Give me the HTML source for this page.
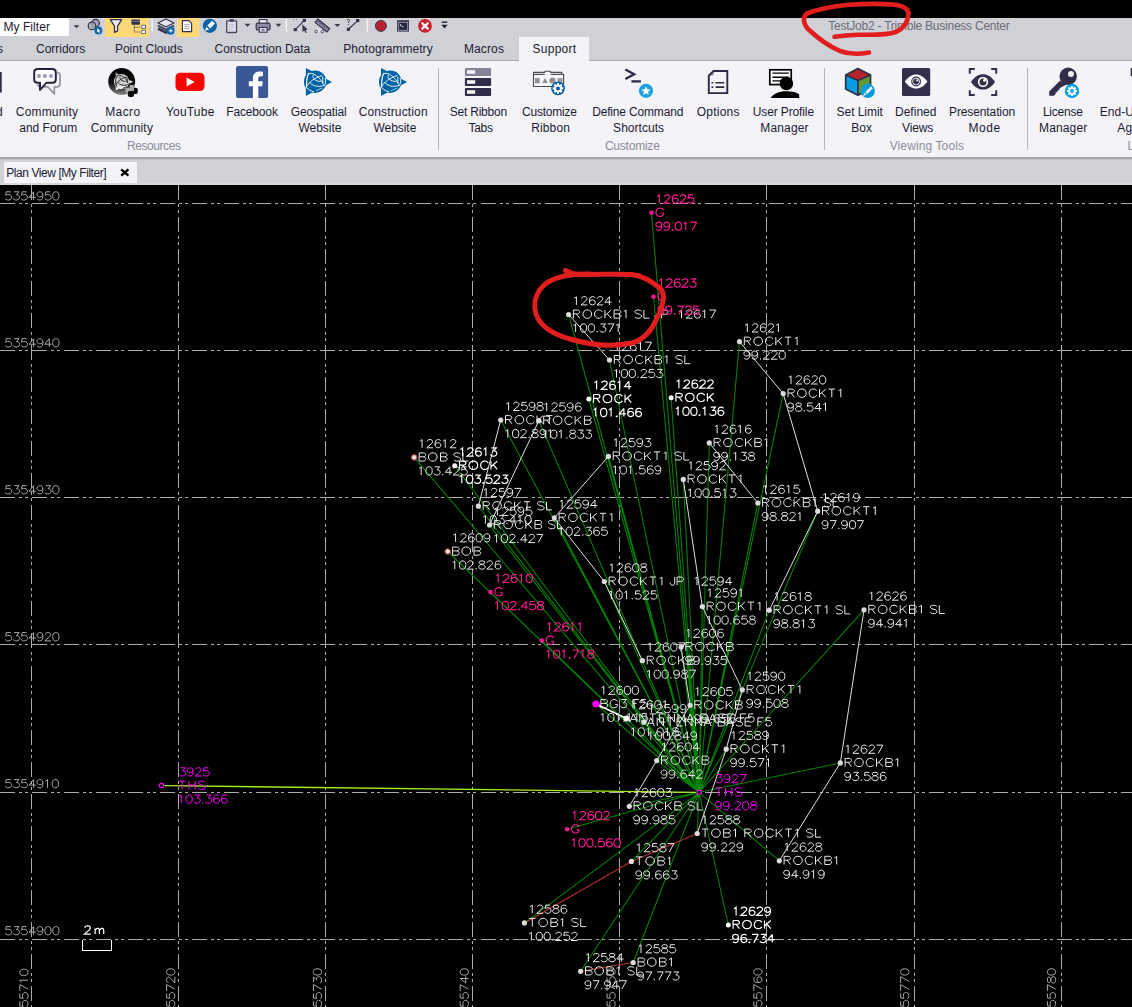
<!DOCTYPE html><html><head><meta charset="utf-8"><title>TestJob2 - Trimble Business Center</title><style>
html,body{margin:0;padding:0;background:#000;}
body{width:1132px;height:1007px;overflow:hidden;position:relative;font-family:"Liberation Sans",sans-serif;font-size:12px;line-height:16px;color:#1c1b33;}
.a{position:absolute;}
span.l,span.g,span.t{position:absolute;white-space:nowrap;line-height:16px;font-size:12px;}
span.l{color:#1c1b33;}
span.g{color:#8d8c9c;}
span.t{color:#6c6c78;}
svg{position:absolute;overflow:visible;}
#cv{left:0;top:185px;overflow:hidden;}
</style></head><body><div class="a" style="left:0;top:18px;width:1132px;height:167px;background:#d0d1d6"></div><div class="a" style="left:0;top:60px;width:1132px;height:1px;background:#a8a8ad"></div><div class="a" style="left:0;top:61px;width:1132px;height:96px;background:#f3f3f8"></div><div class="a" style="left:519px;top:37px;width:70px;height:24px;background:#f3f3f8"></div><div class="a" style="left:0;top:157px;width:1132px;height:1px;background:#a3a3a7"></div><div class="a" style="left:0;top:158px;width:1132px;height:1px;background:#ababaf"></div><div class="a" style="left:0;top:159px;width:1132px;height:1px;background:#c3c3c8"></div><div class="a" style="left:4px;top:162px;width:133px;height:21px;background:#f3f3f8"></div><div class="a" style="left:0;top:183px;width:1132px;height:2px;background:#d6d6db"></div><span class="l" style="left:6.3px;top:164.9px;letter-spacing:-0.44px">Plan View [My Filter]</span><svg style="left:120px;top:168px" width="10" height="9" viewBox="0 0 10 9"><path d="M1.2 1.3L8.4 7.7M8.4 1.3L1.2 7.7" stroke="#000" stroke-width="2.3" fill="none"/></svg><div class="a" style="left:0;top:18px;width:69px;height:18px;background:#fff"></div><span class="l" style="left:3.5px;top:18.6px;letter-spacing:0.05px">My Filter</span><div class="a" style="left:105px;top:18px;width:44px;height:19px;background:#ffd976"></div><div class="a" style="left:177px;top:18px;width:22px;height:19px;background:#ffd976"></div><span class="t" style="left:828.3px;top:17.9px;letter-spacing:-0.24px">TestJob2 - Trimble Business Center</span><span class="l" style="left:-3.0px;top:40.7px;letter-spacing:0.60px">s</span><span class="l" style="left:36.0px;top:40.7px;letter-spacing:-0.01px">Corridors</span><span class="l" style="left:115.0px;top:40.7px;letter-spacing:-0.03px">Point Clouds</span><span class="l" style="left:214.5px;top:40.7px;letter-spacing:-0.02px">Construction Data</span><span class="l" style="left:343.3px;top:40.7px;letter-spacing:0.05px">Photogrammetry</span><span class="l" style="left:463.9px;top:40.7px;letter-spacing:0.13px">Macros</span><span class="l" style="left:532.6px;top:40.7px;letter-spacing:0.25px">Support</span><span class="l" style="left:-4.0px;top:103.9px;letter-spacing:0.60px">d</span><span class="l" style="left:15.8px;top:103.9px;letter-spacing:0.18px">Community</span><span class="l" style="left:19.3px;top:119.9px;letter-spacing:-0.02px">and Forum</span><span class="l" style="left:105.2px;top:103.9px;letter-spacing:0.39px">Macro</span><span class="l" style="left:90.7px;top:119.9px;letter-spacing:0.19px">Community</span><span class="l" style="left:165.9px;top:103.9px;letter-spacing:0.21px">YouTube</span><span class="l" style="left:226.2px;top:103.9px;letter-spacing:-0.14px">Facebook</span><span class="l" style="left:290.8px;top:103.9px;letter-spacing:-0.17px">Geospatial</span><span class="l" style="left:298.5px;top:119.9px;letter-spacing:-0.04px">Website</span><span class="l" style="left:358.7px;top:103.9px;letter-spacing:0.14px">Construction</span><span class="l" style="left:373.5px;top:119.9px;letter-spacing:-0.05px">Website</span><span class="l" style="left:449.7px;top:103.9px;letter-spacing:-0.21px">Set Ribbon</span><span class="l" style="left:468.4px;top:119.9px;letter-spacing:-0.22px">Tabs</span><span class="l" style="left:522.1px;top:103.9px;letter-spacing:-0.24px">Customize</span><span class="l" style="left:531.3px;top:119.9px;letter-spacing:0.10px">Ribbon</span><span class="l" style="left:592.2px;top:103.9px;letter-spacing:-0.17px">Define Command</span><span class="l" style="left:613.1px;top:119.9px;letter-spacing:0.03px">Shortcuts</span><span class="l" style="left:696.8px;top:103.9px;letter-spacing:0.22px">Options</span><span class="l" style="left:752.8px;top:103.9px;letter-spacing:-0.13px">User Profile</span><span class="l" style="left:760.3px;top:119.9px;letter-spacing:0.16px">Manager</span><span class="l" style="left:836.6px;top:103.9px;letter-spacing:-0.05px">Set Limit</span><span class="l" style="left:851.3px;top:119.9px;letter-spacing:-0.04px">Box</span><span class="l" style="left:895.0px;top:103.9px;letter-spacing:0.01px">Defined</span><span class="l" style="left:902.1px;top:119.9px;letter-spacing:-0.17px">Views</span><span class="l" style="left:949.0px;top:103.9px;letter-spacing:-0.11px">Presentation</span><span class="l" style="left:968.5px;top:119.9px;letter-spacing:0.59px">Mode</span><span class="l" style="left:1042.9px;top:103.9px;letter-spacing:-0.23px">License</span><span class="l" style="left:1039.1px;top:119.9px;letter-spacing:0.12px">Manager</span><span class="l" style="left:1099.8px;top:103.9px;letter-spacing:-0.00px">End-User</span><span class="l" style="left:1117.3px;top:119.9px;letter-spacing:0.08px">Agreem</span><span class="g" style="left:127.0px;top:137.8px;letter-spacing:-0.43px">Resources</span><span class="g" style="left:604.9px;top:137.8px;letter-spacing:-0.22px">Customize</span><span class="g" style="left:889.7px;top:137.8px;letter-spacing:0.11px">Viewing Tools</span><span class="g" style="left:1127.5px;top:137.8px;letter-spacing:0.15px">Legal</span><div class="a" style="left:438px;top:68px;width:1px;height:82px;background:#b4b4bc"></div><div class="a" style="left:824px;top:68px;width:1px;height:82px;background:#b4b4bc"></div><div class="a" style="left:1027px;top:68px;width:1px;height:82px;background:#b4b4bc"></div><svg style="left:0;top:0" width="1132" height="185" viewBox="0 0 1132 185">
<defs>
<linearGradient id="mg" x1="0" y1="0" x2="0" y2="1"><stop offset="0" stop-color="#000"/><stop offset="0.55" stop-color="#101010"/><stop offset="0.8" stop-color="#4a4a4a"/><stop offset="1" stop-color="#8a8a8a"/></linearGradient>
</defs>
<!-- ===== quick access toolbar ===== -->
<g fill="#3b3a4c">
<path d="M73.6 25.2H79.4L76.5 28.3Z"/><path d="M244.6 23.8H250.4L247.5 26.9Z"/><path d="M275.6 23.8H281.4L278.5 26.9Z"/><path d="M334.5 23.9H340.3L337.4 27Z"/>
</g>
<!-- overlapping circles -->
<circle cx="95.6" cy="23.2" r="3.8" fill="#a6a4b6" stroke="#35334d" stroke-width="1.2"/>
<circle cx="92" cy="25.9" r="3.8" fill="#a6a4b6" fill-opacity="0.85" stroke="#35334d" stroke-width="1.2"/>
<circle cx="98.4" cy="30.4" r="3.9" fill="#0b66a8"/><path d="M97.2 28.2L97.2 32.4L98.3 31.5L99.2 33L100 32.6L99.2 31.2L100.5 31Z" fill="#fff"/>
<!-- funnel -->
<path d="M110.3 19.6H121.7L117.6 26.2V30.8L114.5 32.4V26.2Z" fill="#ebebf3" stroke="#35334d" stroke-width="1.3" stroke-linejoin="round"/>
<!-- tree -->
<rect x="131.4" y="19.4" width="8.6" height="5.4" rx="0.8" fill="#35334d"/><path d="M131.4 21.4H140" stroke="#8f8ea2" stroke-width="0.7"/>
<path d="M134.3 25.5V32M134.3 27.3H141M134.3 32H141" stroke="#35334d" stroke-width="1.1" stroke-dasharray="1.1 1.1" fill="none"/>
<rect x="141.8" y="25.2" width="3.6" height="3.4" fill="#fff" stroke="#55536b" stroke-width="0.8"/><rect x="141.8" y="30.2" width="3.6" height="3.4" fill="#fff" stroke="#55536b" stroke-width="0.8"/>
<rect x="151.4" y="19" width="1.5" height="12.6" fill="#f2f2f6"/>
<!-- layers -->
<path d="M158 28.6L166 32.6L174 28.6" stroke="#35334d" stroke-width="2.4" fill="none" stroke-linejoin="round"/>
<path d="M158 25.8L166 29.8L174 25.8" stroke="#4c4a64" stroke-width="2.4" fill="none" stroke-linejoin="round"/>
<path d="M158 22.9L166 19L174 22.9L166 26.8Z" fill="#e6e6ef" stroke="#35334d" stroke-width="1.1" stroke-linejoin="round"/>
<circle cx="170.6" cy="30.7" r="3.9" fill="#0b66a8"/><path d="M168.6 30.7H172.8M170.8 28.8V32.6" stroke="#fff" stroke-width="1.1"/>
<!-- document -->
<path d="M182.4 20.7H189L191.6 23.3V31.6H182.4Z" fill="#fff" stroke="#35334d" stroke-width="1.2" stroke-linejoin="round"/><path d="M184.4 24.6H189.6M184.4 26.6H189.6M184.4 28.6H189.6" stroke="#9a99aa" stroke-width="0.9"/>
<!-- blue pen -->
<circle cx="209.9" cy="25.8" r="7.1" fill="#0b62a4"/><path d="M207.4 25.6L212.2 20.8L215 23.6L210.2 28.4Z" fill="#fff"/><path d="M204.9 30.7L206.4 26.7L209.1 29.4Z" fill="#fff"/>
<!-- clipboard -->
<rect x="226.7" y="20.8" width="9.9" height="11.7" rx="0.8" fill="#dedeeb" stroke="#4a4860" stroke-width="1.3"/><rect x="229.6" y="19" width="4.1" height="2.8" rx="0.6" fill="#4a4860"/><path d="M228.8 24.6H234.4M228.8 26.8H234.4M228.8 29H232.5" stroke="#b9b8c9" stroke-width="0.8"/>
<!-- printer -->
<rect x="259.2" y="19.6" width="7.8" height="4.4" fill="#f0f0f6" stroke="#35334d" stroke-width="1.1"/>
<rect x="256.2" y="23.2" width="13.8" height="6.8" rx="1.6" fill="#8f8da3" stroke="#35334d" stroke-width="1.2"/>
<rect x="259.2" y="27.4" width="7.8" height="4.8" fill="#e4e4ee" stroke="#35334d" stroke-width="1.1"/><rect x="261.6" y="28.8" width="3" height="2.2" fill="#7d7b92"/>
<rect x="285.6" y="19" width="1.5" height="12.6" fill="#f2f2f6"/>
<!-- node select -->
<path d="M295.3 29.6L304.3 20.4" stroke="#35334d" stroke-width="1.2"/><rect x="293.7" y="28" width="3.2" height="3.2" fill="#35334d"/><rect x="302.7" y="18.8" width="3.2" height="3.2" fill="#35334d"/>
<path d="M302.4 24.3V32L304.2 30.4L305.5 33L306.7 32.4L305.5 29.9L307.8 29.7Z" fill="#35334d"/><path d="M293.5 19.6H294.5M296 19.6H297" stroke="#6a6880" stroke-width="1"/>
<!-- ruler -->
<g transform="translate(322.4 25.6) rotate(39)"><rect x="-7.6" y="-2.2" width="15.2" height="4.4" fill="#85839a" stroke="#35334d" stroke-width="1.1"/><path d="M-5 -2.2V-0.4M-2.6 -2.2V0.2M-0.2 -2.2V-0.4M2.2 -2.2V0.2M4.6 -2.2V-0.4" stroke="#35334d" stroke-width="0.8"/></g>
<path d="M315.5 31.6H322.5M316 29.6H321.5" stroke="#efeff5" stroke-width="1"/><circle cx="316.2" cy="31.4" r="1.3" fill="none" stroke="#35334d" stroke-width="0.8"/><circle cx="322.3" cy="31.6" r="1.3" fill="none" stroke="#35334d" stroke-width="0.8"/>
<!-- ? line -->
<path d="M348.4 29.3L357.7 20.6" stroke="#35334d" stroke-width="1.2"/><rect x="346.8" y="27.7" width="3.2" height="3.2" fill="#35334d"/><rect x="356.1" y="19" width="3.2" height="3.2" fill="#35334d"/>
<path d="M347 20.4C347.2 19 349.6 19 349.5 20.5C349.4 21.6 348.3 21.7 348.3 23M348.3 24.2V25" stroke="#35334d" stroke-width="1" fill="none"/>
<rect x="366.5" y="19" width="1.5" height="12.6" fill="#f2f2f6"/>
<!-- record -->
<circle cx="380.9" cy="25.9" r="5.5" fill="#b8202c" stroke="#3a3850" stroke-width="1"/>
<!-- terminal -->
<rect x="397" y="20.2" width="12" height="11.4" fill="#35334d"/><rect x="398.3" y="22.3" width="9.4" height="8" fill="#2a2840" stroke="#a9a8ba" stroke-width="0.8"/><path d="M399.8 24.2L401.3 25.2L399.8 26.2M401.8 26.6H403.6" stroke="#fff" stroke-width="0.8" fill="none"/>
<!-- red X -->
<circle cx="425" cy="25.9" r="6.9" fill="#c9202d"/><path d="M422.3 23.2L427.7 28.6M427.7 23.2L422.3 28.6" stroke="#fff" stroke-width="2.3" stroke-linecap="round"/>
<!-- qat customize -->
<rect x="441.7" y="21.5" width="5.6" height="1.4" fill="#1e1e2e"/><path d="M441.4 24.8H447.6L444.5 28.4Z" fill="#1e1e2e"/>

<!-- ===== ribbon large icons ===== -->
<rect x="0" y="72" width="1.7" height="20.5" fill="#2c2a44"/>
<!-- community -->
<path d="M57.2 72.7Q60 72.7 60 75.7V83.8Q60 86.8 57 86.8H54.3V94L47.9 86.8H43.5M37.2 84.2L39 86.6" fill="none" stroke="#9896a6" stroke-width="1.8" stroke-linejoin="round"/>
<path d="M37.7 69H52.3Q55.8 69 55.8 72.5V79.3Q55.8 82.8 52.3 82.8H46.4L40 89.9V82.8H37.7Q34.2 82.8 34.2 79.3V72.5Q34.2 69 37.7 69Z" fill="#fff" stroke="#26243c" stroke-width="2" stroke-linejoin="round"/>
<circle cx="38.9" cy="75.9" r="2" fill="#9a98a8"/><circle cx="44.9" cy="75.9" r="2" fill="#9a98a8"/><circle cx="51" cy="75.9" r="2" fill="#9a98a8"/>
<!-- macro community -->
<circle cx="121.7" cy="81.5" r="13.5" fill="url(#mg)"/>
<circle cx="121.5" cy="81.5" r="7.6" fill="#cfcfcf"/><path d="M114.6 84.5A7.6 7.6 0 0 0 128.4 84.5C124 87.5 119 87.5 114.6 84.5Z" fill="#f2f2f2"/>
<g fill="none" stroke="#1c1c1c" stroke-width="0.9"><path d="M116.6 76.8C115 80 115.3 84 117 86.6"/><path d="M116.8 76.6C120 74.2 125.5 76 127.6 83"/><path d="M115.6 85C117.5 81 122 78 126.4 77"/><path d="M117.8 82C119.5 85 124 86.2 127.8 84.6"/><path d="M120 77C119.5 79.5 122 81.3 125.5 81.4"/><path d="M127 77.6L127.3 82"/><path d="M122.5 88.5L127 86.6"/></g>
<path d="M115.7 72.5V75.9L118.8 74.2Z" fill="#b5b5b5"/><path d="M129.2 79.9V83.5L133.1 81.7Z" fill="#f4f4f4"/><path d="M115.7 86.9V90.5L119.2 88.7Z" fill="#ededed"/>
<path d="M129.8 85H132.6Q133.9 85 133.9 86.3V91.5H131V93H126.7Q125.4 93 125.4 91.7V89Q125.4 87.7 126.7 87.7H129.8Z" fill="#ababab"/>
<path d="M133.9 87.8H135.8Q137.8 87.8 137.8 89.8V92Q137.8 94 135.8 94H134V95Q134 97 132 97H129.8Q127.8 97 127.8 95V93Q127.8 91 129.8 91H133.9Z" fill="#070707"/>
<!-- youtube -->
<rect x="175.5" y="72.7" width="29" height="18.4" rx="4.8" fill="#fe0000"/><path d="M186.6 77.6V86.4L194.6 82Z" fill="#fff"/>
<!-- facebook -->
<rect x="236" y="66" width="32.1" height="32.1" rx="2.2" fill="#3b5998"/>
<path d="M252.9 98.1V86.2H248.8V81.3H252.9V78.2C252.9 73.6 255.8 71.6 259.6 71.6C261.2 71.6 262.4 71.8 263 71.9V76.3H260.8C258.8 76.3 258.3 77.2 258.3 78.7V81.3H262.8L262.2 86.2H258.3V98.1Z" fill="#fff"/>
<!-- trimble x2 -->
<g transform="translate(315.1 81.7)"><path d="M-9.2 -13.7L16.9 .2L-9.2 14.3Z" fill="#0063a3"/><circle r="11.2" fill="#0063a3"/>
<g fill="none" stroke="#fff" stroke-width="0.9" stroke-linecap="round"><path d="M-6.5 -8.2C-8.3 -5 -8.6 1 -8.5 5.2" stroke-width="1.2"/><path d="M-6.4 -8.1C-2 -10 4.5 -5 8.3 2.6"/><path d="M-9.1 5.8C-6 0 0 -4.2 6.8 -6"/><path d="M10 -3.4C11 -1 10.8 2 9 4"/><path d="M-5.6 .6C-3 4 3 6 8.7 3.8"/><path d="M-2 -6.6C-3 -3 .5 -.5 5.2 -.2"/><path d="M7.5 -4.6L7.9 1"/><path d="M-7.9 6.6C-6 8.5 -4 9.5 -1.6 9.9"/><path d="M1.2 8.9L6.8 6.6" stroke-opacity=".7"/></g></g><g transform="translate(390.2 81.7)"><path d="M-9.2 -13.7L16.9 .2L-9.2 14.3Z" fill="#0063a3"/><circle r="11.2" fill="#0063a3"/>
<g fill="none" stroke="#fff" stroke-width="0.9" stroke-linecap="round"><path d="M-6.5 -8.2C-8.3 -5 -8.6 1 -8.5 5.2" stroke-width="1.2"/><path d="M-6.4 -8.1C-2 -10 4.5 -5 8.3 2.6"/><path d="M-9.1 5.8C-6 0 0 -4.2 6.8 -6"/><path d="M10 -3.4C11 -1 10.8 2 9 4"/><path d="M-5.6 .6C-3 4 3 6 8.7 3.8"/><path d="M-2 -6.6C-3 -3 .5 -.5 5.2 -.2"/><path d="M7.5 -4.6L7.9 1"/><path d="M-7.9 6.6C-6 8.5 -4 9.5 -1.6 9.9"/><path d="M1.2 8.9L6.8 6.6" stroke-opacity=".7"/></g></g>
<!-- set ribbon tabs -->
<rect x="464.9" y="68" width="26.2" height="7.9" rx="1" fill="#85839a"/><rect x="464.9" y="78" width="26.2" height="7.9" rx="1" fill="#2f2d47"/><rect x="464.9" y="88" width="26.2" height="8" rx="1" fill="#2f2d47"/>
<rect x="467" y="70.2" width="8.2" height="3.6" fill="#f3f3f8"/><rect x="467" y="80.2" width="8.2" height="3.6" fill="#f3f3f8"/><rect x="467" y="90.2" width="8.2" height="3.6" fill="#f3f3f8"/>
<!-- customize ribbon -->
<path d="M533.5 72.4H544.7V71.9Q544.7 71.2 545.4 71.2H549.9Q550.6 71.2 550.6 71.9V72.4H561.8V74.4H563.6V86.5H533.5Z" fill="#f8f8fb" stroke="#4c4c52" stroke-width="1.15" stroke-linejoin="round"/><path d="M534 74.5H544.7M550.6 74.5H563.2" stroke="#4c4c52" stroke-width="1"/><path d="M535 73.5H544M551.4 73.5H561" stroke="#c9c9cf" stroke-width="0.8"/>
<rect x="535" y="78.1" width="4.7" height="5.2" fill="#8f8f94"/><path d="M542.2 83L545 77.9L547.8 83Z" fill="#8f8f94"/><circle cx="552.4" cy="80.5" r="3.1" fill="#8f8f94"/><rect x="557.6" y="78.1" width="5" height="5.2" fill="#9a9a9f"/>
<circle cx="558" cy="88.4" r="6.8" fill="#0059a6"/><g transform="translate(558 88.4)"><path d="M0 -5.3 V5.3 M-5.3 0 H5.3 M-3.75 -3.75 L3.75 3.75 M-3.75 3.75 L3.75 -3.75" stroke="#fff" stroke-width="2.2" fill="none"/><circle r="3.8" fill="#fff"/><circle r="2.0" fill="#0059a6"/></g>
<!-- define command shortcuts -->
<path d="M625.4 69.4L634.2 74.2L625.4 79" stroke="#2c2a44" stroke-width="2.3" fill="none" stroke-linejoin="miter"/><path d="M631.4 81.4H640.9" stroke="#2c2a44" stroke-width="2.3"/>
<circle cx="646" cy="90.8" r="7.1" fill="#1ba1e2"/><path d="M646 86.3L647.3 89.3L650.5 89.6L648.1 91.7L648.8 94.9L646 93.2L643.2 94.9L643.9 91.7L641.5 89.6L644.7 89.3Z" fill="#fff"/>
<!-- options -->
<path d="M708.7 75.6H713.6V71Z" fill="#9c9aad"/><path d="M713.6 71H727.3V93.1H708.8V75.7Z" fill="none" stroke="#2c2a44" stroke-width="1.9" stroke-linejoin="miter"/>
<path d="M711.5 82.8H713.2M711.5 87.1H713.2M715.6 82.8H724.3M715.6 87.1H724.3" stroke="#2c2a44" stroke-width="1.6"/>
<!-- user profile manager -->
<rect x="769.8" y="69.8" width="21.4" height="14.8" fill="#fcfcfe" stroke="#000" stroke-width="1.7"/><path d="M772.5 73.1H788.8M772.5 77.3H788.8M772.5 80.9H781" stroke="#000" stroke-width="1.4"/>
<circle cx="786.4" cy="83.4" r="6.75" fill="#000"/>
<path d="M770.6 97.9C773.5 93.5 779 91.2 786 91.2C792 91.2 797 92.4 799.2 94.6V97.9Z" fill="#000"/>
<!-- set limit box -->
<path d="M857.9 68.6L870.5 74.9L857.9 80.6L845.7 74.9Z" fill="#b5232b"/><path d="M845.7 74.9L857.9 80.6V95.2L845.7 88.9Z" fill="#06a0e2"/><path d="M870.5 74.9L857.9 80.6V95.2L870.5 88.9Z" fill="#5d9b35"/>
<path d="M857.9 68.6L870.5 74.9V88.9L857.9 95.2L845.7 88.9V74.9ZM845.7 74.9L857.9 80.6L870.5 74.9M857.9 80.6V95.2" fill="none" stroke="#2f2d47" stroke-width="1.7" stroke-linejoin="round"/>
<circle cx="867.8" cy="90.9" r="7.1" fill="#0a9bdd"/><path d="M865.3 92L870.9 86.4L872.8 88.3L867.2 93.9Z" fill="#fff"/><path d="M862.9 96.2L864.6 92.7L866.5 94.6Z" fill="#fff"/>
<!-- defined views -->
<rect x="902" y="68" width="28.2" height="28" rx="1.6" fill="#32304a"/><path d="M904.8 81.5C908.5 76.5 912 74.4 916.1 74.4C920.2 74.4 923.7 76.5 927.4 81.5C923.7 86.5 920.2 88.5 916.1 88.5C912 88.5 908.5 86.5 904.8 81.5Z" fill="#fff"/><circle cx="916.1" cy="81.5" r="4.9" fill="#32304a"/><circle cx="916.1" cy="81.5" r="3.7" fill="#fff"/><circle cx="916.1" cy="81.5" r="2.9" fill="#32304a"/><circle cx="917.3" cy="80.3" r="1.1" fill="#fff"/>
<!-- presentation mode -->
<path d="M969.8 73.8V68.9H974.8M991.2 68.9H996.2V73.8M996.2 90.2V95.1H991.2M974.8 95.1H969.8V90.2" fill="none" stroke="#32304a" stroke-width="2"/>
<path d="M970.9 81.9C974.8 76.6 978.6 74.3 983 74.3C987.4 74.3 991.2 76.6 995.1 81.9C991.2 87.2 987.4 89.5 983 89.5C978.6 89.5 974.8 87.2 970.9 81.9Z" fill="#32304a"/><circle cx="983" cy="81.9" r="5.2" fill="#fff"/><circle cx="983" cy="81.9" r="3.5" fill="#32304a"/><circle cx="984.5" cy="80.3" r="1.5" fill="#fff"/>
<!-- license manager -->
<path d="M1059.9 80.7L1049.2 91.4V95.8H1053.9L1055.9 93.4L1055.5 92.5L1057.5 92L1057.3 90.6L1059.3 90.2L1059.5 88.3L1062.7 86.6L1066.5 84.5Z" fill="#2f2d47"/>
<circle cx="1068.2" cy="76.3" r="8.7" fill="#2f2d47"/><circle cx="1071" cy="73.9" r="3" fill="#f3f3f8"/>
<circle cx="1072" cy="91" r="7.15" fill="#0aa0e0"/><g transform="translate(1072 91)"><path d="M0 -5.0 V5.0 M-5.0 0 H5.0 M-3.54 -3.54 L3.54 3.54 M-3.54 3.54 L3.54 -3.54" stroke="#fff" stroke-width="2.1" fill="none"/><circle r="3.5" fill="#fff"/><circle r="1.9" fill="#0aa0e0"/></g>
<rect x="1130.7" y="68" width="1.5" height="8.2" fill="#2c2a44"/>
</svg>
<svg id="cv" width="1132" height="822" viewBox="0 185 1132 822"><rect x="0" y="185" width="1132" height="822" fill="#000"/><path d="M31.5 185V1007M178.5 185V1007M325.5 185V1007M472.5 185V1007M619.5 185V1007M766.5 185V1007M914.5 185V1007M1061.5 185V1007" stroke="#ababab" stroke-width="1" stroke-dasharray="15 4 3 3 3 4.035" stroke-dashoffset="0" fill="none" shape-rendering="crispEdges"/><path d="M0 203.5H1132M0 350.5H1132M0 497.5H1132M0 644.5H1132M0 792.5H1132M0 939.5H1132" stroke="#ababab" stroke-width="1" stroke-dasharray="15 4 3 3 3 4.035" stroke-dashoffset="0" fill="none" shape-rendering="crispEdges"/><path d="M10.8 191.8l-4.6 0l-.4 3.5l.4-.4l1.4-.4l1.3 0l1.4 .4l.9 .8l.5 1.2l0 .7l-.5 1.2l-.9 .8l-1.4 .4l-1.3 0l-1.4-.4l-.4-.4l-.5-.8M14.1 191.8l5 0l-2.7 3.1l1.4 0l.9 .4l.4 .4l.5 1.2l0 .7l-.5 1.2l-.9 .8l-1.3 .4l-1.4 0l-1.4-.4l-.4-.4l-.5-.8M26.6 191.8l-4.5 0l-.5 3.5l.5-.4l1.3-.4l1.4 0l1.3 .4l.9 .8l.5 1.2l0 .7l-.5 1.2l-.9 .8l-1.3 .4l-1.4 0l-1.3-.4l-.5-.4l-.4-.8M33.6 191.8l-4.5 5.5l6.7 0M33.6 191.8l0 8.2M42.8 194.5l-.4 1.2l-.9 .8l-1.4 .4l-.5 0l-1.3-.4l-.9-.8l-.5-1.2l0-.4l.5-1.2l.9-.7l1.3-.4l.5 0l1.4 .4l.9 .7l.4 1.6l0 2l-.4 1.9l-.9 1.2l-1.4 .4l-.9 0l-1.3-.4l-.5-.8M50.2 191.8l-4.4 0l-.5 3.5l.5-.4l1.3-.4l1.3 0l1.4 .4l.9 .8l.4 1.2l0 .7l-.4 1.2l-.9 .8l-1.4 .4l-1.3 0l-1.3-.4l-.5-.4l-.5-.8M55.4 191.8l-1.3 .4l-.9 1.1l-.5 2l0 1.2l.5 1.9l.9 1.2l1.3 .4l.9 0l1.4-.4l.9-1.2l.4-1.9l0-1.2l-.4-2l-.9-1.1l-1.4-.4l-.9 0M10.8 338.7l-4.6 0l-.4 3.6l.4-.4l1.4-.4l1.3 0l1.4 .4l.9 .7l.5 1.2l0 .8l-.5 1.2l-.9 .8l-1.4 .4l-1.3 0l-1.4-.4l-.4-.4l-.5-.8M14.1 338.7l5 0l-2.7 3.2l1.4 0l.9 .4l.4 .3l.5 1.2l0 .8l-.5 1.2l-.9 .8l-1.3 .4l-1.4 0l-1.4-.4l-.4-.4l-.5-.8M26.6 338.7l-4.5 0l-.5 3.6l.5-.4l1.3-.4l1.4 0l1.3 .4l.9 .7l.5 1.2l0 .8l-.5 1.2l-.9 .8l-1.3 .4l-1.4 0l-1.3-.4l-.5-.4l-.4-.8M33.6 338.7l-4.5 5.5l6.7 0M33.6 338.7l0 8.3M42.8 341.5l-.4 1.1l-.9 .8l-1.4 .4l-.5 0l-1.3-.4l-.9-.8l-.5-1.1l0-.4l.5-1.2l.9-.8l1.3-.4l.5 0l1.4 .4l.9 .8l.4 1.6l0 1.9l-.4 2l-.9 1.2l-1.4 .4l-.9 0l-1.3-.4l-.5-.8M49.3 338.7l-4.5 5.5l6.8 0M49.3 338.7l0 8.3M55.4 338.7l-1.3 .4l-.9 1.2l-.5 2l0 1.1l.5 2l.9 1.2l1.3 .4l.9 0l1.4-.4l.9-1.2l.4-2l0-1.1l-.4-2l-.9-1.2l-1.4-.4l-.9 0M10.8 485.7l-4.6 0l-.4 3.5l.4-.4l1.4-.4l1.3 0l1.4 .4l.9 .8l.5 1.2l0 .8l-.5 1.1l-.9 .8l-1.4 .4l-1.3 0l-1.4-.4l-.4-.4l-.5-.7M14.1 485.7l5 0l-2.7 3.1l1.4 0l.9 .4l.4 .4l.5 1.2l0 .8l-.5 1.1l-.9 .8l-1.3 .4l-1.4 0l-1.4-.4l-.4-.4l-.5-.7M26.6 485.7l-4.5 0l-.5 3.5l.5-.4l1.3-.4l1.4 0l1.3 .4l.9 .8l.5 1.2l0 .8l-.5 1.1l-.9 .8l-1.3 .4l-1.4 0l-1.3-.4l-.5-.4l-.4-.7M33.6 485.7l-4.5 5.5l6.7 0M33.6 485.7l0 8.2M42.8 488.4l-.4 1.2l-.9 .8l-1.4 .4l-.5 0l-1.3-.4l-.9-.8l-.5-1.2l0-.4l.5-1.1l.9-.8l1.3-.4l.5 0l1.4 .4l.9 .8l.4 1.5l0 2l-.4 2l-.9 1.1l-1.4 .4l-.9 0l-1.3-.4l-.5-.8M45.8 485.7l4.9 0l-2.7 3.1l1.3 0l.9 .4l.5 .4l.4 1.2l0 .8l-.4 1.1l-.9 .8l-1.4 .4l-1.3 0l-1.3-.4l-.5-.4l-.5-.7M55.4 485.7l-1.3 .4l-.9 1.2l-.5 1.9l0 1.2l.5 2l.9 1.1l1.3 .4l.9 0l1.4-.4l.9-1.1l.4-2l0-1.2l-.4-1.9l-.9-1.2l-1.4-.4l-.9 0M10.8 632.6l-4.6 0l-.4 3.6l.4-.4l1.4-.4l1.3 0l1.4 .4l.9 .8l.5 1.1l0 .8l-.5 1.2l-.9 .8l-1.4 .4l-1.3 0l-1.4-.4l-.4-.4l-.5-.8M14.1 632.6l5 0l-2.7 3.2l1.4 0l.9 .4l.4 .4l.5 1.1l0 .8l-.5 1.2l-.9 .8l-1.3 .4l-1.4 0l-1.4-.4l-.4-.4l-.5-.8M26.6 632.6l-4.5 0l-.5 3.6l.5-.4l1.3-.4l1.4 0l1.3 .4l.9 .8l.5 1.1l0 .8l-.5 1.2l-.9 .8l-1.3 .4l-1.4 0l-1.3-.4l-.5-.4l-.4-.8M33.6 632.6l-4.5 5.5l6.7 0M33.6 632.6l0 8.3M42.8 635.4l-.4 1.2l-.9 .8l-1.4 .3l-.5 0l-1.3-.3l-.9-.8l-.5-1.2l0-.4l.5-1.2l.9-.8l1.3-.4l.5 0l1.4 .4l.9 .8l.4 1.6l0 2l-.4 1.9l-.9 1.2l-1.4 .4l-.9 0l-1.3-.4l-.5-.8M45.3 634.6l0-.4l.5-.8l.4-.4l.9-.4l1.8 0l.9 .4l.4 .4l.5 .8l0 .8l-.5 .8l-.9 1.2l-4.5 3.9l6.3 0M55.4 632.6l-1.3 .4l-.9 1.2l-.5 2l0 1.2l.5 1.9l.9 1.2l1.3 .4l.9 0l1.4-.4l.9-1.2l.4-1.9l0-1.2l-.4-2l-.9-1.2l-1.4-.4l-.9 0M10.8 779.6l-4.6 0l-.4 3.5l.4-.4l1.4-.3l1.3 0l1.4 .3l.9 .8l.5 1.2l0 .8l-.5 1.2l-.9 .7l-1.4 .4l-1.3 0l-1.4-.4l-.4-.3l-.5-.8M14.1 779.6l5 0l-2.7 3.1l1.4 0l.9 .4l.4 .4l.5 1.2l0 .8l-.5 1.2l-.9 .7l-1.3 .4l-1.4 0l-1.4-.4l-.4-.3l-.5-.8M26.6 779.6l-4.5 0l-.5 3.5l.5-.4l1.3-.3l1.4 0l1.3 .3l.9 .8l.5 1.2l0 .8l-.5 1.2l-.9 .7l-1.3 .4l-1.4 0l-1.3-.4l-.5-.3l-.4-.8M33.6 779.6l-4.5 5.5l6.7 0M33.6 779.6l0 8.2M42.8 782.4l-.4 1.1l-.9 .8l-1.4 .4l-.5 0l-1.3-.4l-.9-.8l-.5-1.1l0-.4l.5-1.2l.9-.8l1.3-.4l.5 0l1.4 .4l.9 .8l.4 1.6l0 1.9l-.4 2l-.9 1.1l-1.4 .4l-.9 0l-1.3-.4l-.5-.7M45.3 781.2l.9-.4l1.3-1.2l0 8.2M54.9 779.6l-1.3 .4l-.9 1.2l-.5 1.9l0 1.2l.5 2l.9 1.1l1.3 .4l.9 0l1.4-.4l.9-1.1l.4-2l0-1.2l-.4-1.9l-.9-1.2l-1.4-.4l-.9 0M10.8 926.6l-4.6 0l-.4 3.5l.4-.4l1.4-.4l1.3 0l1.4 .4l.9 .8l.5 1.2l0 .7l-.5 1.2l-.9 .8l-1.4 .4l-1.3 0l-1.4-.4l-.4-.4l-.5-.8M14.1 926.6l5 0l-2.7 3.1l1.4 0l.9 .4l.4 .4l.5 1.2l0 .7l-.5 1.2l-.9 .8l-1.3 .4l-1.4 0l-1.4-.4l-.4-.4l-.5-.8M26.6 926.6l-4.5 0l-.5 3.5l.5-.4l1.3-.4l1.4 0l1.3 .4l.9 .8l.5 1.2l0 .7l-.5 1.2l-.9 .8l-1.3 .4l-1.4 0l-1.3-.4l-.5-.4l-.4-.8M33.6 926.6l-4.5 5.5l6.7 0M33.6 926.6l0 8.2M42.8 929.3l-.4 1.2l-.9 .8l-1.4 .4l-.5 0l-1.3-.4l-.9-.8l-.5-1.2l0-.4l.5-1.2l.9-.7l1.3-.4l.5 0l1.4 .4l.9 .7l.4 1.6l0 2l-.4 1.9l-.9 1.2l-1.4 .4l-.9 0l-1.3-.4l-.5-.8M47.5 926.6l-1.3 .4l-.9 1.1l-.5 2l0 1.2l.5 1.9l.9 1.2l1.3 .4l.9 0l1.4-.4l.9-1.2l.4-1.9l0-1.2l-.4-2l-.9-1.1l-1.4-.4l-.9 0M55.4 926.6l-1.3 .4l-.9 1.1l-.5 2l0 1.2l.5 1.9l.9 1.2l1.3 .4l.9 0l1.4-.4l.9-1.2l.4-1.9l0-1.2l-.4-2l-.9-1.1l-1.4-.4l-.9 0M19.8 1001.2l0 4.6l3.5 .4l-.4-.4l-.4-1.4l0-1.3l.4-1.4l.8-.9l1.2-.4l.7 0l1.2 .4l.8 .9l.4 1.4l0 1.3l-.4 1.4l-.4 .4l-.8 .5M19.8 993.4l0 4.5l3.5 .4l-.4-.4l-.4-1.4l0-1.3l.4-1.4l.8-.9l1.2-.4l.7 0l1.2 .4l.8 .9l.4 1.4l0 1.3l-.4 1.4l-.4 .4l-.8 .5M19.8 984.6l8.2 4.5M19.8 990.9l0-6.3M21.3 982.5l-.4-.9l-1.1-1.4l8.2 0M19.8 972.9l.4 1.3l1.1 .9l2 .5l1.2 0l1.9-.5l1.2-.9l.4-1.3l0-.9l-.4-1.4l-1.2-.9l-1.9-.5l-1.2 0l-2 .5l-1.1 .9l-.4 1.4l0 .9M166.6 1001.2l0 4.6l3.5 .4l-.4-.4l-.4-1.4l0-1.3l.4-1.4l.8-.9l1.2-.4l.7 0l1.2 .4l.8 .9l.4 1.4l0 1.3l-.4 1.4l-.4 .4l-.8 .5M166.6 993.4l0 4.5l3.5 .4l-.4-.4l-.4-1.4l0-1.3l.4-1.4l.8-.9l1.2-.4l.7 0l1.2 .4l.8 .9l.4 1.4l0 1.3l-.4 1.4l-.4 .4l-.8 .5M166.6 984.6l8.2 4.5M166.6 990.9l0-6.3M168.5 982.5l-.4 0l-.7-.4l-.4-.5l-.4-.9l0-1.8l.4-.9l.4-.4l.7-.5l.8 0l.8 .5l1.2 .9l3.9 4.5l0-6.3M166.6 972.4l.4 1.3l1.1 .9l2 .5l1.2 0l1.9-.5l1.2-.9l.4-1.3l0-.9l-.4-1.4l-1.2-.9l-1.9-.4l-1.2 0l-2 .4l-1.1 .9l-.4 1.4l0 .9M313.4 1001.2l0 4.6l3.5 .4l-.4-.4l-.4-1.4l0-1.3l.4-1.4l.8-.9l1.2-.4l.7 0l1.2 .4l.8 .9l.4 1.4l0 1.3l-.4 1.4l-.4 .4l-.8 .5M313.4 993.4l0 4.5l3.5 .4l-.4-.4l-.4-1.4l0-1.3l.4-1.4l.8-.9l1.2-.4l.7 0l1.2 .4l.8 .9l.4 1.4l0 1.3l-.4 1.4l-.4 .4l-.8 .5M313.4 984.6l8.2 4.5M313.4 990.9l0-6.3M313.4 982.1l0-5l3.1 2.7l0-1.3l.4-.9l.4-.5l1.2-.4l.7 0l1.2 .4l.8 .9l.4 1.4l0 1.3l-.4 1.4l-.4 .4l-.8 .5M313.4 972.4l.4 1.3l1.1 .9l2 .5l1.2 0l1.9-.5l1.2-.9l.4-1.3l0-.9l-.4-1.4l-1.2-.9l-1.9-.4l-1.2 0l-2 .4l-1.1 .9l-.4 1.4l0 .9M460.2 1001.2l0 4.6l3.5 .4l-.4-.4l-.4-1.4l0-1.3l.4-1.4l.8-.9l1.2-.4l.7 0l1.2 .4l.8 .9l.4 1.4l0 1.3l-.4 1.4l-.4 .4l-.8 .5M460.2 993.4l0 4.5l3.5 .4l-.4-.4l-.4-1.4l0-1.3l.4-1.4l.8-.9l1.2-.4l.7 0l1.2 .4l.8 .9l.4 1.4l0 1.3l-.4 1.4l-.4 .4l-.8 .5M460.2 984.6l8.2 4.5M460.2 990.9l0-6.3M460.2 978.5l5.5 4.5l0-6.8M460.2 978.5l8.2 0M460.2 972.4l.4 1.3l1.1 .9l2 .5l1.2 0l1.9-.5l1.2-.9l.4-1.3l0-.9l-.4-1.4l-1.2-.9l-1.9-.4l-1.2 0l-2 .4l-1.1 .9l-.4 1.4l0 .9M607 1001.2l0 4.6l3.5 .4l-.4-.4l-.4-1.4l0-1.3l.4-1.4l.8-.9l1.2-.4l.7 0l1.2 .4l.8 .9l.4 1.4l0 1.3l-.4 1.4l-.4 .4l-.8 .5M607 993.4l0 4.5l3.5 .4l-.4-.4l-.4-1.4l0-1.3l.4-1.4l.8-.9l1.2-.4l.7 0l1.2 .4l.8 .9l.4 1.4l0 1.3l-.4 1.4l-.4 .4l-.8 .5M607 984.6l8.2 4.5M607 990.9l0-6.3M607 977.6l0 4.5l3.5 .4l-.4-.4l-.4-1.4l0-1.3l.4-1.4l.8-.9l1.2-.4l.7 0l1.2 .4l.8 .9l.4 1.4l0 1.3l-.4 1.4l-.4 .4l-.8 .5M607 972.4l.4 1.3l1.1 .9l2 .5l1.2 0l1.9-.5l1.2-.9l.4-1.3l0-.9l-.4-1.4l-1.2-.9l-1.9-.4l-1.2 0l-2 .4l-1.1 .9l-.4 1.4l0 .9M753.8 1001.2l0 4.6l3.5 .4l-.4-.4l-.4-1.4l0-1.3l.4-1.4l.8-.9l1.2-.4l.7 0l1.2 .4l.8 .9l.4 1.4l0 1.3l-.4 1.4l-.4 .4l-.8 .5M753.8 993.4l0 4.5l3.5 .4l-.4-.4l-.4-1.4l0-1.3l.4-1.4l.8-.9l1.2-.4l.7 0l1.2 .4l.8 .9l.4 1.4l0 1.3l-.4 1.4l-.4 .4l-.8 .5M753.8 984.6l8.2 4.5M753.8 990.9l0-6.3M754.9 977.1l-.7 .5l-.4 1.3l0 .9l.4 1.4l1.1 .9l2 .4l2 0l1.5-.4l.8-.9l.4-1.4l0-.4l-.4-1.4l-.8-.9l-1.2-.4l-.3 0l-1.2 .4l-.8 .9l-.4 1.4l0 .4l.4 1.4l.8 .9l1.2 .4M753.8 972.4l.4 1.3l1.1 .9l2 .5l1.2 0l1.9-.5l1.2-.9l.4-1.3l0-.9l-.4-1.4l-1.2-.9l-1.9-.4l-1.2 0l-2 .4l-1.1 .9l-.4 1.4l0 .9M900.6 1001.2l0 4.6l3.5 .4l-.4-.4l-.4-1.4l0-1.3l.4-1.4l.8-.9l1.2-.4l.7 0l1.2 .4l.8 .9l.4 1.4l0 1.3l-.4 1.4l-.4 .4l-.8 .5M900.6 993.4l0 4.5l3.5 .4l-.4-.4l-.4-1.4l0-1.3l.4-1.4l.8-.9l1.2-.4l.7 0l1.2 .4l.8 .9l.4 1.4l0 1.3l-.4 1.4l-.4 .4l-.8 .5M900.6 984.6l8.2 4.5M900.6 990.9l0-6.3M900.6 976.7l8.2 4.5M900.6 983l0-6.3M900.6 972.4l.4 1.3l1.1 .9l2 .5l1.2 0l1.9-.5l1.2-.9l.4-1.3l0-.9l-.4-1.4l-1.2-.9l-1.9-.4l-1.2 0l-2 .4l-1.1 .9l-.4 1.4l0 .9M1047.4 1001.2l0 4.6l3.5 .4l-.4-.4l-.4-1.4l0-1.3l.4-1.4l.8-.9l1.2-.4l.7 0l1.2 .4l.8 .9l.4 1.4l0 1.3l-.4 1.4l-.4 .4l-.8 .5M1047.4 993.4l0 4.5l3.5 .4l-.4-.4l-.4-1.4l0-1.3l.4-1.4l.8-.9l1.2-.4l.7 0l1.2 .4l.8 .9l.4 1.4l0 1.3l-.4 1.4l-.4 .4l-.8 .5M1047.4 984.6l8.2 4.5M1047.4 990.9l0-6.3M1047.4 980.7l.4 1.4l.7 .4l.8 0l.8-.4l.4-.9l.4-1.8l.4-1.4l.8-.9l.8-.4l1.1 0l.8 .4l.4 .5l.4 1.3l0 1.8l-.4 1.4l-.4 .4l-.8 .5l-1.1 0l-.8-.5l-.8-.9l-.4-1.4l-.4-1.7l-.4-.9l-.8-.5l-.8 0l-.7 .5l-.4 1.3l0 1.8M1047.4 972.4l.4 1.3l1.1 .9l2 .5l1.2 0l1.9-.5l1.2-.9l.4-1.3l0-.9l-.4-1.4l-1.2-.9l-1.9-.4l-1.2 0l-2 .4l-1.1 .9l-.4 1.4l0 .9" stroke="#a8a8a8" stroke-width="1" fill="none"/><path d="M82.5 940V950.5H111.5V940" stroke="#fff" stroke-width="1" fill="none" shape-rendering="crispEdges"/><path d="M84.9 927.7l0-.4l.5-.7l.4-.4l.9-.4l1.8 0l.9 .4l.5 .4l.4 .7l0 .8l-.4 .8l-.9 1.2l-4.5 3.9l6.3 0M95.1 928.5l0 5.5M95.1 930.1l1.2-1.2l.8-.4l1.1 0l.8 .4l.4 1.2l0 3.9M99.4 930.1l1.2-1.2l.7-.4l1.2 0l.8 .4l.4 1.2l0 3.9" stroke="#fff" stroke-width="1.25" fill="none"/><path d="M699.1 792.3L651.5 212.7M699.1 792.3L653.6 296.7M699.1 792.3L568.6 314.5M699.1 792.3L609.5 360M699.1 792.3L739.5 341.6M699.1 792.3L783.2 393.6M699.1 792.3L588.8 399M699.1 792.3L671.1 397.8M699.1 792.3L500.7 420.1M699.1 792.3L538.9 420.7M699.1 792.3L709.3 442.9M699.1 792.3L608.4 456.4M699.1 792.3L414.2 457.4M699.1 792.3L454.7 465.7M699.1 792.3L683.3 479.4M699.1 792.3L478.4 506.2M699.1 792.3L489.5 525M699.1 792.3L554.3 517.8M699.1 792.3L757.8 503M699.1 792.3L817.7 511.2M699.1 792.3L447.7 551.5M699.1 792.3L490.4 592.1M699.1 792.3L604.3 581.5M699.1 792.3L702.3 606.6M699.1 792.3L769.3 610.2M699.1 792.3L864 609.8M699.1 792.3L541.8 640.6M699.1 792.3L681.1 647M699.1 792.3L642.4 660.7M699.1 792.3L742.3 689.9M699.1 792.3L596 704M699.1 792.3L690 705.3M699.1 792.3L626.4 718.4M699.1 792.3L643.8 722.3M699.1 792.3L726.2 749.2M699.1 792.3L656.7 760.6M699.1 792.3L840.3 762.9M699.1 792.3L629.3 806.3M699.1 792.3L567.1 829.3M699.1 792.3L697.2 833.5M699.1 792.3L631.4 861.4M699.1 792.3L779.3 860.8M699.1 792.3L524.4 922.9M699.1 792.3L728.3 925M699.1 792.3L633.2 962.5M699.1 792.3L580.6 971.3" stroke="#008400" stroke-width="1.05" fill="none"/><path d="M164.5 785.6L696.1 792.3" stroke="#a6f01a" stroke-width="1.3" fill="none"/><path d="M697.2 833.5L631.4 861.4L524.4 922.9M633.2 962.5L580.6 971.3" stroke="#b42f2f" stroke-width="1.1" fill="none"/><path d="M568.6 314.5L609.5 360M739.5 341.6L783.2 393.6L817.7 511.2L769.3 610.2M709.3 442.9L757.8 503M500.7 420.1L478.4 506.2M538.9 420.7L489.5 525M608.4 456.4L554.3 517.8L604.3 581.5L642.4 660.7M683.3 479.4L702.3 606.6L742.3 689.9L726.2 749.2L697.2 833.5M864 609.8L840.3 762.9L779.3 860.8M681.1 647L690 705.3L656.7 760.6L629.3 806.3" stroke="#dedede" stroke-width="1" fill="none"/><path d="M596 704L626.4 718.4" stroke="#fff" stroke-width="1.7" fill="none"/><circle cx="651.5" cy="212.7" r="2.3" fill="#ff1493"/><circle cx="653.6" cy="296.7" r="2.3" fill="#ff1493"/><circle cx="568.6" cy="314.5" r="2.6" fill="#dcdcdc"/><circle cx="609.5" cy="360" r="2.6" fill="#dcdcdc"/><circle cx="739.5" cy="341.6" r="2.6" fill="#dcdcdc"/><circle cx="783.2" cy="393.6" r="2.6" fill="#dcdcdc"/><circle cx="588.8" cy="399" r="2.5" fill="#fff"/><circle cx="671.1" cy="397.8" r="2.5" fill="#fff"/><circle cx="500.7" cy="420.1" r="2.6" fill="#dcdcdc"/><circle cx="538.9" cy="420.7" r="2.6" fill="#dcdcdc"/><circle cx="709.3" cy="442.9" r="2.6" fill="#dcdcdc"/><circle cx="608.4" cy="456.4" r="2.6" fill="#dcdcdc"/><circle cx="414.2" cy="457.4" r="2.8" fill="#ddd" stroke="#b4282c" stroke-width="1"/><circle cx="454.7" cy="465.7" r="2.5" fill="#fff"/><circle cx="683.3" cy="479.4" r="2.6" fill="#dcdcdc"/><circle cx="478.4" cy="506.2" r="2.6" fill="#dcdcdc"/><circle cx="489.5" cy="525" r="2.6" fill="#dcdcdc"/><circle cx="554.3" cy="517.8" r="2.6" fill="#dcdcdc"/><circle cx="757.8" cy="503" r="2.6" fill="#dcdcdc"/><circle cx="817.7" cy="511.2" r="2.6" fill="#dcdcdc"/><circle cx="447.7" cy="551.5" r="2.8" fill="#ddd" stroke="#b4282c" stroke-width="1"/><circle cx="490.4" cy="592.1" r="2.3" fill="#ff1493"/><circle cx="604.3" cy="581.5" r="2.6" fill="#dcdcdc"/><circle cx="702.3" cy="606.6" r="2.6" fill="#dcdcdc"/><circle cx="769.3" cy="610.2" r="2.6" fill="#dcdcdc"/><circle cx="864" cy="609.8" r="2.6" fill="#dcdcdc"/><circle cx="541.8" cy="640.6" r="2.3" fill="#ff1493"/><circle cx="681.1" cy="647" r="2.6" fill="#dcdcdc"/><circle cx="642.4" cy="660.7" r="2.6" fill="#dcdcdc"/><circle cx="742.3" cy="689.9" r="2.6" fill="#dcdcdc"/><circle cx="596" cy="704" r="3.6" fill="#ff00ff"/><circle cx="690" cy="705.3" r="2.6" fill="#dcdcdc"/><circle cx="626.4" cy="718.4" r="3" fill="#fff"/><circle cx="643.8" cy="722.3" r="2.6" fill="#dcdcdc"/><circle cx="726.2" cy="749.2" r="2.6" fill="#dcdcdc"/><circle cx="656.7" cy="760.6" r="2.6" fill="#dcdcdc"/><circle cx="840.3" cy="762.9" r="2.6" fill="#dcdcdc"/><circle cx="699.1" cy="792.3" r="2.2" fill="#000" stroke="#ff00ff" stroke-width="1.1"/><circle cx="161.5" cy="785.6" r="2.2" fill="#000" stroke="#ff00ff" stroke-width="1.1"/><circle cx="629.3" cy="806.3" r="2.6" fill="#dcdcdc"/><circle cx="567.1" cy="829.3" r="2.3" fill="#ff1493"/><circle cx="697.2" cy="833.5" r="2.6" fill="#dcdcdc"/><circle cx="631.4" cy="861.4" r="2.6" fill="#dcdcdc"/><circle cx="779.3" cy="860.8" r="2.6" fill="#dcdcdc"/><circle cx="524.4" cy="922.9" r="2.6" fill="#dcdcdc"/><circle cx="728.3" cy="925" r="2.5" fill="#fff"/><circle cx="633.2" cy="962.5" r="2.6" fill="#dcdcdc"/><circle cx="580.6" cy="971.3" r="2.6" fill="#dcdcdc"/><path d="M574.2 298.2l.9-.4l1.3-1.1l0 8.2M581.6 298.6l0-.4l.4-.7l.5-.4l.9-.4l1.8 0l.9 .4l.4 .4l.5 .7l0 .8l-.5 .8l-.9 1.2l-4.5 3.9l6.3 0M594.9 297.8l-.5-.7l-1.3-.4l-.9 0l-1.4 .4l-.9 1.1l-.4 2l0 2l.4 1.5l.9 .8l1.4 .4l.4 0l1.4-.4l.9-.8l.4-1.2l0-.3l-.4-1.2l-.9-.8l-1.4-.4l-.4 0l-1.4 .4l-.9 .8l-.4 1.2M597.4 298.6l0-.4l.4-.7l.5-.4l.9-.4l1.8 0l.9 .4l.4 .4l.5 .7l0 .8l-.5 .8l-.9 1.2l-4.5 3.9l6.3 0M609.3 296.7l-4.5 5.5l6.8 0M609.3 296.7l0 8.2M573.4 310l0 8.2M573.4 310l4 0l1.4 .4l.4 .4l.5 .7l0 .8l-.5 .8l-.4 .4l-1.4 .4l-4 0M576.5 313.9l3.2 4.3M586.2 310l-1 .4l-1.1 .7l-.5 .8l-.6 1.2l0 2l.6 1.1l.5 .8l1.1 .8l1 .4l2.2 0l1-.4l1.1-.8l.5-.8l.5-1.1l0-2l-.5-1.2l-.5-.8l-1.1-.7l-1-.4l-2.2 0M602.1 311.9l-.5-.8l-1-.7l-1-.4l-2 0l-1 .4l-1 .7l-.5 .8l-.5 1.2l0 2l.5 1.1l.5 .8l1 .8l1 .4l2 0l1-.4l1-.8l.5-.8M604.9 310l0 8.2M611.1 310l-6.2 5.5M607.1 313.5l4 4.7M614.1 310l0 8.2M614.1 310l4.3 0l1.4 .4l.5 .4l.5 .7l0 .8l-.5 .8l-.5 .4l-1.4 .4M614.1 313.9l4.3 0l1.4 .4l.5 .4l.5 .8l0 1.1l-.5 .8l-.5 .4l-1.4 .4l-4.3 0M623.8 311.5l.8-.4l1.4-1.1l0 8.2M641.5 311.1l-1-.7l-1.4-.4l-1.9 0l-1.4 .4l-.9 .7l0 .8l.4 .8l.5 .4l1 .4l2.8 .8l.9 .4l.5 .4l.5 .7l0 1.2l-1 .8l-1.4 .4l-1.9 0l-1.4-.4l-.9-.8M643.9 310l0 8.2M643.9 318.2l5.5 0M659.2 310l0 6.2l-.4 1.2l-.5 .4l-.9 .4l-.9 0l-.9-.4l-.4-.4l-.4-1.2l0-.7M661.6 310l0 8.2M661.6 310l4.1 0l1.3 .4l.5 .4l.4 .7l0 1.2l-.4 .8l-.5 .4l-1.3 .4l-4.1 0M679.2 311.5l.9-.4l1.4-1.1l0 8.2M686.6 311.9l0-.4l.5-.7l.4-.4l.9-.4l1.8 0l.9 .4l.5 .4l.4 .7l0 .8l-.4 .8l-.9 1.2l-4.5 3.9l6.3 0M699.9 311.1l-.4-.7l-1.4-.4l-.9 0l-1.3 .4l-.9 1.1l-.5 2l0 2l.5 1.5l.9 .8l1.3 .4l.5 0l1.3-.4l.9-.8l.5-1.2l0-.3l-.5-1.2l-.9-.8l-1.3-.4l-.5 0l-1.3 .4l-.9 .8l-.5 1.2M702.4 311.5l.9-.4l1.4-1.1l0 8.2M715.7 310l-4.5 8.2M709.4 310l6.3 0M573.4 325.4l.9-.4l1.3-1.1l0 8.2M583 323.9l-1.3 .4l-.9 1.1l-.4 2l0 1.2l.4 1.9l.9 1.2l1.3 .4l.9 0l1.4-.4l.9-1.2l.4-1.9l0-1.2l-.4-2l-.9-1.1l-1.4-.4l-.9 0M590.9 323.9l-1.3 .4l-.9 1.1l-.5 2l0 1.2l.5 1.9l.9 1.2l1.3 .4l1 0l1.3-.4l.9-1.2l.4-1.9l0-1.2l-.4-2l-.9-1.1l-1.3-.4l-1 0M597 331.3l-.4 .4l.4 .4l.5-.4l-.5-.4M600.6 323.9l5 0l-2.7 3.1l1.3 0l.9 .4l.5 .4l.4 1.2l0 .7l-.4 1.2l-.9 .8l-1.3 .4l-1.4 0l-1.4-.4l-.4-.4l-.4-.8M613.9 323.9l-4.5 8.2M607.6 323.9l6.3 0M616 325.4l.9-.4l1.3-1.1l0 8.2M615.1 343.7l.9-.4l1.3-1.1l0 8.2M622.5 344.1l0-.4l.4-.7l.5-.4l.9-.4l1.8 0l.9 .4l.4 .4l.5 .7l0 .8l-.5 .8l-.9 1.2l-4.5 3.9l6.3 0M635.8 343.3l-.5-.7l-1.3-.4l-.9 0l-1.4 .4l-.9 1.1l-.4 2l0 2l.4 1.5l.9 .8l1.4 .4l.4 0l1.4-.4l.9-.8l.4-1.2l0-.3l-.4-1.2l-.9-.8l-1.4-.4l-.4 0l-1.4 .4l-.9 .8l-.4 1.2M638.3 343.7l.9-.4l1.3-1.1l0 8.2M651.5 342.2l-4.5 8.2M645.2 342.2l6.3 0M614.3 355.5l0 8.2M614.3 355.5l4 0l1.4 .4l.4 .4l.5 .7l0 .8l-.5 .8l-.4 .4l-1.4 .4l-4 0M617.4 359.4l3.2 4.3M627.1 355.5l-1 .4l-1.1 .7l-.5 .8l-.6 1.2l0 2l.6 1.1l.5 .8l1.1 .8l1 .4l2.2 0l1-.4l1.1-.8l.5-.8l.5-1.1l0-2l-.5-1.2l-.5-.8l-1.1-.7l-1-.4l-2.2 0M643 357.4l-.5-.8l-1-.7l-1-.4l-2 0l-1 .4l-1 .7l-.5 .8l-.5 1.2l0 2l.5 1.1l.5 .8l1 .8l1 .4l2 0l1-.4l1-.8l.5-.8M645.8 355.5l0 8.2M652 355.5l-6.2 5.5M648 359l4 4.7M655 355.5l0 8.2M655 355.5l4.3 0l1.4 .4l.5 .4l.5 .7l0 .8l-.5 .8l-.5 .4l-1.4 .4M655 359.4l4.3 0l1.4 .4l.5 .4l.5 .8l0 1.1l-.5 .8l-.5 .4l-1.4 .4l-4.3 0M664.6 357l.9-.4l1.4-1.1l0 8.2M682.4 356.6l-1-.7l-1.4-.4l-1.9 0l-1.4 .4l-.9 .7l0 .8l.4 .8l.5 .4l1 .4l2.8 .8l.9 .4l.5 .4l.5 .7l0 1.2l-1 .8l-1.4 .4l-1.9 0l-1.4-.4l-.9-.8M684.8 355.5l0 8.2M684.8 363.7l5.4 0M614.3 370.9l.9-.4l1.3-1.1l0 8.2M623.9 369.4l-1.3 .4l-.9 1.1l-.5 2l0 1.2l.5 1.9l.9 1.2l1.3 .4l.9 0l1.4-.4l.9-1.2l.4-1.9l0-1.2l-.4-2l-.9-1.1l-1.4-.4l-.9 0M631.8 369.4l-1.3 .4l-.9 1.1l-.5 2l0 1.2l.5 1.9l.9 1.2l1.3 .4l1 0l1.3-.4l.9-1.2l.4-1.9l0-1.2l-.4-2l-.9-1.1l-1.3-.4l-1 0M637.9 376.8l-.4 .4l.4 .4l.5-.4l-.5-.4M641.1 371.3l0-.4l.4-.7l.5-.4l.9-.4l1.8 0l.9 .4l.4 .4l.5 .7l0 .8l-.5 .8l-.9 1.2l-4.5 3.9l6.3 0M653.9 369.4l-4.5 0l-.4 3.5l.4-.4l1.4-.4l1.3 0l1.4 .4l.9 .8l.4 1.2l0 .7l-.4 1.2l-.9 .8l-1.4 .4l-1.3 0l-1.4-.4l-.4-.4l-.5-.8M657.3 369.4l5 0l-2.7 3.1l1.3 0l.9 .4l.5 .4l.5 1.2l0 .7l-.5 1.2l-.9 .8l-1.4 .4l-1.3 0l-1.4-.4l-.4-.4l-.5-.8M745.1 325.3l.9-.4l1.3-1.1l0 8.2M752.5 325.7l0-.4l.4-.7l.5-.4l.9-.4l1.8 0l.9 .4l.4 .4l.5 .7l0 .8l-.5 .8l-.9 1.2l-4.5 3.9l6.3 0M765.8 324.9l-.5-.7l-1.3-.4l-.9 0l-1.4 .4l-.9 1.1l-.4 2l0 2l.4 1.5l.9 .8l1.4 .4l.4 0l1.4-.4l.9-.8l.4-1.2l0-.3l-.4-1.2l-.9-.8l-1.4-.4l-.4 0l-1.4 .4l-.9 .8l-.4 1.2M768.3 325.7l0-.4l.4-.7l.5-.4l.9-.4l1.8 0l.9 .4l.4 .4l.5 .7l0 .8l-.5 .8l-.9 1.2l-4.5 3.9l6.3 0M776.2 325.3l.9-.4l1.3-1.1l0 8.2M744.3 337.1l0 8.2M744.3 337.1l4 0l1.4 .4l.4 .4l.5 .7l0 .8l-.5 .8l-.4 .4l-1.4 .4l-4 0M747.4 341l3.2 4.3M757.1 337.1l-1 .4l-1.1 .7l-.5 .8l-.6 1.2l0 2l.6 1.1l.5 .8l1.1 .8l1 .4l2.2 0l1-.4l1.1-.8l.5-.8l.5-1.1l0-2l-.5-1.2l-.5-.8l-1.1-.7l-1-.4l-2.2 0M773 339l-.5-.8l-1-.7l-1-.4l-2 0l-1 .4l-1 .7l-.5 .8l-.5 1.2l0 2l.5 1.1l.5 .8l1 .8l1 .4l2 0l1-.4l1-.8l.5-.8M775.8 337.1l0 8.2M782 337.1l-6.2 5.5M778 340.6l4 4.7M788.1 337.1l0 8.2M784.9 337.1l6.3 0M794.8 338.6l1-.4l1.3-1.1l0 8.2M749.7 353.7l-.5 1.2l-.9 .8l-1.3 .4l-.5 0l-1.3-.4l-.9-.8l-.5-1.2l0-.4l.5-1.2l.9-.7l1.3-.4l.5 0l1.3 .4l.9 .7l.5 1.6l0 2l-.5 1.9l-.9 1.2l-1.3 .4l-.9 0l-1.3-.4l-.5-.8M757.6 353.7l-.5 1.2l-.9 .8l-1.3 .4l-.5 0l-1.3-.4l-.9-.8l-.4-1.2l0-.4l.4-1.2l.9-.7l1.3-.4l.5 0l1.3 .4l.9 .7l.5 1.6l0 2l-.5 1.9l-.9 1.2l-1.3 .4l-.9 0l-1.4-.4l-.4-.8M760.5 358.4l-.4 .4l.4 .4l.5-.4l-.5-.4M763.7 352.9l0-.4l.4-.7l.5-.4l.9-.4l1.8 0l.9 .4l.4 .4l.5 .7l0 .8l-.5 .8l-.8 1.2l-4.6 3.9l6.3 0M771.6 352.9l0-.4l.4-.7l.5-.4l.9-.4l1.8 0l.9 .4l.4 .4l.5 .7l0 .8l-.5 .8l-.9 1.2l-4.5 3.9l6.3 0M781.8 351l-1.4 .4l-.9 1.1l-.5 2l0 1.2l.5 1.9l.9 1.2l1.4 .4l.8 0l1.4-.4l.9-1.2l.4-1.9l0-1.2l-.4-2l-.9-1.1l-1.4-.4l-.8 0M788.8 377.3l.9-.4l1.3-1.1l0 8.2M796.2 377.7l0-.4l.4-.7l.5-.4l.9-.4l1.8 0l.9 .4l.4 .4l.5 .7l0 .8l-.5 .8l-.9 1.2l-4.4 3.9l6.2 0M809.5 376.9l-.5-.7l-1.3-.4l-.9 0l-1.4 .4l-.9 1.1l-.4 2l0 2l.4 1.5l.9 .8l1.4 .4l.4 0l1.4-.4l.9-.8l.4-1.2l0-.3l-.4-1.2l-.9-.8l-1.4-.4l-.4 0l-1.4 .4l-.9 .8l-.4 1.2M812 377.7l0-.4l.4-.7l.5-.4l.9-.4l1.8 0l.9 .4l.4 .4l.5 .7l0 .8l-.5 .8l-.9 1.2l-4.5 3.9l6.3 0M822.1 375.8l-1.3 .4l-.9 1.1l-.5 2l0 1.2l.5 1.9l.9 1.2l1.3 .4l.9 0l1.4-.4l.9-1.2l.5-1.9l0-1.2l-.5-2l-.9-1.1l-1.4-.4l-.9 0M788 389.1l0 8.2M788 389.1l4 0l1.4 .4l.5 .4l.4 .7l0 .8l-.4 .8l-.5 .4l-1.4 .4l-4 0M791.1 393l3.2 4.3M800.8 389.1l-1 .4l-1.1 .7l-.5 .8l-.6 1.2l0 2l.6 1.1l.5 .8l1.1 .8l1 .4l2.2 0l1-.4l1.1-.8l.5-.8l.5-1.1l0-2l-.5-1.2l-.5-.8l-1.1-.7l-1-.4l-2.2 0M816.7 391l-.5-.8l-1-.7l-1-.4l-2 0l-1 .4l-1 .7l-.5 .8l-.5 1.2l0 2l.5 1.1l.5 .8l1 .8l1 .4l2 0l1-.4l1-.8l.5-.8M819.5 389.1l0 8.2M825.8 389.1l-6.3 5.5M821.7 392.6l4.1 4.7M831.8 389.1l0 8.2M828.6 389.1l6.4 0M838.5 390.6l1-.4l1.3-1.1l0 8.2M793.4 405.7l-.4 1.2l-1 .8l-1.3 .4l-.5 0l-1.3-.4l-.9-.8l-.5-1.2l0-.4l.5-1.2l.9-.7l1.3-.4l.5 0l1.3 .4l1 .7l.4 1.6l0 2l-.4 1.9l-1 1.2l-1.3 .4l-.9 0l-1.3-.4l-.5-.8M797.7 403l-1.3 .4l-.5 .7l0 .8l.5 .8l.8 .4l1.8 .4l1.4 .4l.9 .8l.5 .8l0 1.1l-.5 .8l-.4 .4l-1.4 .4l-1.8 0l-1.3-.4l-.5-.4l-.4-.8l0-1.1l.4-.8l.9-.8l1.3-.4l1.9-.4l.9-.4l.4-.8l0-.8l-.4-.7l-1.4-.4l-1.8 0M804.2 410.4l-.4 .4l.4 .4l.5-.4l-.5-.4M812.4 403l-4.5 0l-.5 3.5l.5-.4l1.3-.4l1.3 0l1.4 .4l.9 .8l.4 1.2l0 .7l-.4 1.2l-.9 .8l-1.4 .4l-1.3 0l-1.3-.4l-.5-.4l-.4-.8M819.4 403l-4.5 5.5l6.7 0M819.4 403l0 8.2M823.2 404.5l.9-.4l1.4-1.1l0 8.2M506.3 403.8l.9-.4l1.4-1.1l0 8.2M513.7 404.2l0-.4l.4-.7l.5-.4l.9-.4l1.8 0l.9 .4l.4 .4l.5 .7l0 .8l-.5 .8l-.8 1.2l-4.6 3.9l6.3 0M526.5 402.3l-4.5 0l-.4 3.5l.4-.4l1.4-.4l1.4 0l1.3 .4l.9 .8l.5 1.2l0 .7l-.5 1.2l-.9 .8l-1.3 .4l-1.4 0l-1.4-.4l-.4-.4l-.5-.8M534.9 405l-.4 1.2l-.9 .8l-1.4 .4l-.4 0l-1.4-.4l-.9-.8l-.4-1.2l0-.4l.4-1.2l.9-.7l1.4-.4l.4 0l1.4 .4l.9 .7l.4 1.6l0 2l-.4 1.9l-.9 1.2l-1.4 .4l-.9 0l-1.3-.4l-.5-.8M539.2 402.3l-1.3 .4l-.5 .7l0 .8l.5 .8l.9 .4l1.7 .4l1.4 .4l.9 .8l.4 .8l0 1.1l-.4 .8l-.4 .4l-1.4 .4l-1.8 0l-1.3-.4l-.5-.4l-.4-.8l0-1.1l.4-.8l.9-.8l1.3-.4l1.9-.4l.9-.4l.4-.8l0-.8l-.4-.7l-1.4-.4l-1.8 0M505.5 415.6l0 8.2M505.5 415.6l4.1 0l1.3 .4l.5 .4l.4 .7l0 .8l-.4 .8l-.5 .4l-1.3 .4l-4.1 0M508.6 419.5l3.2 4.3M518.3 415.6l-1 .4l-1.1 .7l-.5 .8l-.6 1.2l0 2l.6 1.1l.5 .8l1.1 .8l1 .4l2.2 0l1-.4l1.1-.8l.5-.8l.5-1.1l0-2l-.5-1.2l-.5-.8l-1.1-.7l-1-.4l-2.2 0M534.2 417.5l-.5-.8l-1-.7l-1-.4l-2 0l-1 .4l-1 .7l-.5 .8l-.5 1.2l0 2l.5 1.1l.5 .8l1 .8l1 .4l2 0l1-.4l1-.8l.5-.8M537 415.6l0 8.2M543.2 415.6l-6.2 5.5M539.2 419.1l4 4.7M549.3 415.6l0 8.2M546.1 415.6l6.4 0M505.5 431l.9-.4l1.4-1.1l0 8.2M515.1 429.5l-1.3 .4l-.9 1.1l-.4 2l0 1.2l.4 1.9l.9 1.2l1.3 .4l.9 0l1.4-.4l.9-1.2l.5-1.9l0-1.2l-.5-2l-.9-1.1l-1.4-.4l-.9 0M520.8 431.4l0-.4l.4-.7l.5-.4l.9-.4l1.8 0l.9 .4l.5 .4l.4 .7l0 .8l-.4 .8l-.9 1.2l-4.5 3.9l6.2 0M529.1 436.9l-.4 .4l.4 .4l.5-.4l-.5-.4M534.1 429.5l-1.3 .4l-.5 .7l0 .8l.5 .8l.8 .4l1.9 .4l1.3 .4l.9 .8l.4 .8l0 1.1l-.4 .8l-.5 .4l-1.3 .4l-1.8 0l-1.3-.4l-.5-.4l-.4-.8l0-1.1l.4-.8l.9-.8l1.3-.4l1.9-.4l.8-.4l.5-.8l0-.8l-.5-.7l-1.3-.4l-1.8 0M545.6 432.2l-.5 1.2l-.9 .8l-1.3 .4l-.4 0l-1.4-.4l-.9-.8l-.4-1.2l0-.4l.4-1.2l.9-.7l1.4-.4l.4 0l1.3 .4l.9 .7l.5 1.6l0 2l-.5 1.9l-.9 1.2l-1.3 .4l-.9 0l-1.4-.4l-.4-.8M548.1 431l.9-.4l1.4-1.1l0 8.2M544.5 404.4l.9-.4l1.3-1.1l0 8.2M551.9 404.8l0-.4l.4-.7l.5-.4l.9-.4l1.8 0l.9 .4l.4 .4l.5 .7l0 .8l-.5 .8l-.9 1.2l-4.5 3.9l6.3 0M564.7 402.9l-4.5 0l-.4 3.5l.4-.4l1.4-.4l1.3 0l1.4 .4l.9 .8l.4 1.2l0 .7l-.4 1.2l-.9 .8l-1.4 .4l-1.3 0l-1.4-.4l-.4-.4l-.5-.8M573.1 405.6l-.5 1.2l-.9 .8l-1.3 .4l-.5 0l-1.3-.4l-.9-.8l-.5-1.2l0-.4l.5-1.2l.9-.7l1.3-.4l.5 0l1.3 .4l.9 .7l.5 1.6l0 2l-.5 1.9l-.9 1.2l-1.3 .4l-.9 0l-1.4-.4l-.4-.8M581 404l-.5-.7l-1.3-.4l-.9 0l-1.4 .4l-.9 1.1l-.4 2l0 2l.4 1.5l.9 .8l1.4 .4l.4 0l1.4-.4l.9-.8l.4-1.2l0-.3l-.4-1.2l-.9-.8l-1.4-.4l-.4 0l-1.4 .4l-.9 .8l-.4 1.2M543.7 416.2l0 8.2M543.7 416.2l4 0l1.4 .4l.4 .4l.5 .7l0 .8l-.5 .8l-.4 .4l-1.4 .4l-4 0M546.8 420.1l3.2 4.3M556.5 416.2l-1 .4l-1.1 .7l-.5 .8l-.6 1.2l0 2l.6 1.1l.5 .8l1.1 .8l1 .4l2.2 0l1-.4l1.1-.8l.5-.8l.5-1.1l0-2l-.5-1.2l-.5-.8l-1.1-.7l-1-.4l-2.2 0M572.4 418.1l-.5-.8l-1-.7l-1-.4l-2 0l-1 .4l-1 .7l-.5 .8l-.5 1.2l0 2l.5 1.1l.5 .8l1 .8l1 .4l2 0l1-.4l1-.8l.5-.8M575.1 416.2l0 8.2M581.4 416.2l-6.3 5.5M577.4 419.7l4 4.7M584.4 416.2l0 8.2M584.4 416.2l4.3 0l1.4 .4l.5 .4l.5 .7l0 .8l-.5 .8l-.5 .4l-1.4 .4M584.4 420.1l4.3 0l1.4 .4l.5 .4l.5 .8l0 1.1l-.5 .8l-.5 .4l-1.4 .4l-4.3 0M543.7 431.6l.9-.4l1.3-1.1l0 8.2M553.3 430.1l-1.3 .4l-.9 1.1l-.5 2l0 1.2l.5 1.9l.9 1.2l1.3 .4l.9 0l1.4-.4l.9-1.2l.4-1.9l0-1.2l-.4-2l-.9-1.1l-1.4-.4l-.9 0M559 431.6l.9-.4l1.3-1.1l0 8.2M566.8 437.5l-.4 .4l.4 .4l.5-.4l-.5-.4M571.8 430.1l-1.4 .4l-.4 .7l0 .8l.4 .8l.9 .4l1.8 .4l1.4 .4l.9 .8l.4 .8l0 1.1l-.4 .8l-.5 .4l-1.3 .4l-1.8 0l-1.4-.4l-.4-.4l-.5-.8l0-1.1l.5-.8l.9-.8l1.3-.4l1.8-.4l.9-.4l.5-.8l0-.8l-.5-.7l-1.3-.4l-1.8 0M578.3 430.1l5 0l-2.7 3.1l1.3 0l.9 .4l.5 .4l.4 1.2l0 .7l-.4 1.2l-.9 .8l-1.4 .4l-1.3 0l-1.4-.4l-.4-.4l-.5-.8M586.2 430.1l5 0l-2.7 3.1l1.3 0l.9 .4l.5 .4l.4 1.2l0 .7l-.4 1.2l-.9 .8l-1.4 .4l-1.3 0l-1.4-.4l-.4-.4l-.5-.8M714.9 426.6l.9-.4l1.3-1.1l0 8.2M722.3 427l0-.4l.4-.7l.5-.4l.9-.4l1.8 0l.9 .4l.4 .4l.5 .7l0 .8l-.5 .8l-.9 1.2l-4.5 3.9l6.3 0M735.6 426.2l-.5-.7l-1.3-.4l-.9 0l-1.4 .4l-.9 1.1l-.4 2l0 2l.4 1.5l.9 .8l1.4 .4l.4 0l1.4-.4l.9-.8l.4-1.2l0-.3l-.4-1.2l-.9-.8l-1.4-.4l-.4 0l-1.4 .4l-.9 .8l-.4 1.2M738.1 426.6l.9-.4l1.3-1.1l0 8.2M750.9 426.2l-.5-.7l-1.3-.4l-.9 0l-1.4 .4l-.9 1.1l-.4 2l0 2l.4 1.5l.9 .8l1.4 .4l.4 0l1.4-.4l.9-.8l.4-1.2l0-.3l-.4-1.2l-.9-.8l-1.4-.4l-.4 0l-1.4 .4l-.9 .8l-.4 1.2M714.1 438.4l0 8.2M714.1 438.4l4 0l1.4 .4l.4 .4l.5 .7l0 .8l-.5 .8l-.4 .4l-1.4 .4l-4 0M717.2 442.3l3.2 4.3M726.9 438.4l-1 .4l-1.1 .7l-.5 .8l-.6 1.2l0 2l.6 1.1l.5 .8l1.1 .8l1 .4l2.2 0l1-.4l1.1-.8l.5-.8l.5-1.1l0-2l-.5-1.2l-.5-.8l-1.1-.7l-1-.4l-2.2 0M742.8 440.3l-.5-.8l-1-.7l-1-.4l-2 0l-1 .4l-1 .7l-.5 .8l-.5 1.2l0 2l.5 1.1l.5 .8l1 .8l1 .4l2 0l1-.4l1-.8l.5-.8M745.5 438.4l0 8.2M751.8 438.4l-6.3 5.5M747.8 441.9l4 4.7M754.8 438.4l0 8.2M754.8 438.4l4.3 0l1.4 .4l.5 .4l.5 .7l0 .8l-.5 .8l-.5 .4l-1.4 .4M754.8 442.3l4.3 0l1.4 .4l.5 .4l.5 .8l0 1.1l-.5 .8l-.5 .4l-1.4 .4l-4.3 0M764.4 439.9l.9-.4l1.4-1.1l0 8.2M719.5 455l-.5 1.2l-.9 .8l-1.3 .4l-.5 0l-1.3-.4l-.9-.8l-.5-1.2l0-.4l.5-1.2l.9-.7l1.3-.4l.5 0l1.3 .4l.9 .7l.5 1.6l0 2l-.5 1.9l-.9 1.2l-1.3 .4l-.9 0l-1.4-.4l-.4-.8M727.4 455l-.5 1.2l-.9 .8l-1.3 .4l-.5 0l-1.3-.4l-.9-.8l-.5-1.2l0-.4l.5-1.2l.9-.7l1.3-.4l.5 0l1.3 .4l.9 .7l.5 1.6l0 2l-.5 1.9l-.9 1.2l-1.3 .4l-.9 0l-1.4-.4l-.4-.8M730.3 459.7l-.4 .4l.4 .4l.5-.4l-.5-.4M733.5 453.8l.9-.4l1.3-1.1l0 8.2M741.3 452.3l5 0l-2.7 3.1l1.3 0l.9 .4l.5 .4l.4 1.2l0 .7l-.4 1.2l-.9 .8l-1.4 .4l-1.3 0l-1.4-.4l-.4-.4l-.5-.8M750.6 452.3l-1.4 .4l-.4 .7l0 .8l.4 .8l.9 .4l1.8 .4l1.4 .4l.9 .8l.4 .8l0 1.1l-.4 .8l-.5 .4l-1.3 .4l-1.8 0l-1.4-.4l-.4-.4l-.5-.8l0-1.1l.5-.8l.9-.8l1.3-.4l1.8-.4l.9-.4l.5-.8l0-.8l-.5-.7l-1.3-.4l-1.8 0M614 440.1l.9-.4l1.3-1.1l0 8.2M621.4 440.5l0-.4l.4-.7l.5-.4l.9-.4l1.8 0l.9 .4l.4 .4l.5 .7l0 .8l-.5 .8l-.9 1.2l-4.5 3.9l6.3 0M634.2 438.6l-4.5 0l-.4 3.5l.4-.4l1.4-.4l1.3 0l1.4 .4l.9 .8l.4 1.2l0 .7l-.4 1.2l-.9 .8l-1.4 .4l-1.3 0l-1.4-.4l-.4-.4l-.5-.8M642.6 441.3l-.5 1.2l-.9 .8l-1.3 .4l-.5 0l-1.3-.4l-.9-.8l-.5-1.2l0-.4l.5-1.2l.9-.7l1.3-.4l.5 0l1.3 .4l.9 .7l.5 1.6l0 2l-.5 1.9l-.9 1.2l-1.3 .4l-.9 0l-1.4-.4l-.4-.8M645.5 438.6l5 0l-2.7 3.1l1.3 0l.9 .4l.5 .4l.4 1.2l0 .7l-.4 1.2l-.9 .8l-1.4 .4l-1.3 0l-1.4-.4l-.4-.4l-.5-.8M613.2 451.9l0 8.2M613.2 451.9l4 0l1.4 .4l.4 .4l.5 .7l0 .8l-.5 .8l-.4 .4l-1.4 .4l-4 0M616.3 455.8l3.2 4.3M626 451.9l-1 .4l-1.1 .7l-.5 .8l-.6 1.2l0 2l.6 1.1l.5 .8l1.1 .8l1 .4l2.2 0l1-.4l1.1-.8l.5-.8l.5-1.1l0-2l-.5-1.2l-.5-.8l-1.1-.7l-1-.4l-2.2 0M641.9 453.8l-.5-.8l-1-.7l-1-.4l-2 0l-1 .4l-1 .7l-.5 .8l-.5 1.2l0 2l.5 1.1l.5 .8l1 .8l1 .4l2 0l1-.4l1-.8l.5-.8M644.6 451.9l0 8.2M650.9 451.9l-6.3 5.5M646.9 455.4l4 4.7M657 451.9l0 8.2M653.8 451.9l6.3 0M663.7 453.4l.9-.4l1.4-1.1l0 8.2M681.5 453l-1-.7l-1.4-.4l-1.9 0l-1.4 .4l-.9 .7l0 .8l.4 .8l.5 .4l1 .4l2.8 .8l.9 .4l.5 .4l.5 .7l0 1.2l-1 .8l-1.4 .4l-1.9 0l-1.4-.4l-.9-.8M683.9 451.9l0 8.2M683.9 460.1l5.4 0M613.2 467.3l.9-.4l1.3-1.1l0 8.2M622.8 465.8l-1.3 .4l-.9 1.1l-.5 2l0 1.2l.5 1.9l.9 1.2l1.3 .4l.9 0l1.4-.4l.9-1.2l.4-1.9l0-1.2l-.4-2l-.9-1.1l-1.4-.4l-.9 0M628.5 467.3l.9-.4l1.3-1.1l0 8.2M636.3 473.2l-.4 .4l.4 .4l.5-.4l-.5-.4M644.4 465.8l-4.5 0l-.4 3.5l.4-.4l1.4-.4l1.3 0l1.4 .4l.9 .8l.4 1.2l0 .7l-.4 1.2l-.9 .8l-1.4 .4l-1.3 0l-1.4-.4l-.4-.4l-.5-.8M652.8 466.9l-.5-.7l-1.3-.4l-.9 0l-1.4 .4l-.9 1.1l-.4 2l0 2l.4 1.5l.9 .8l1.4 .4l.4 0l1.4-.4l.9-.8l.4-1.2l0-.3l-.4-1.2l-.9-.8l-1.4-.4l-.4 0l-1.4 .4l-.9 .8l-.4 1.2M660.7 468.5l-.5 1.2l-.9 .8l-1.3 .4l-.5 0l-1.3-.4l-.9-.8l-.5-1.2l0-.4l.5-1.2l.9-.7l1.3-.4l.5 0l1.3 .4l.9 .7l.5 1.6l0 2l-.5 1.9l-.9 1.2l-1.3 .4l-.9 0l-1.4-.4l-.4-.8M419.8 441.1l.9-.4l1.4-1.1l0 8.2M427.2 441.5l0-.4l.5-.7l.4-.4l.9-.4l1.8 0l.9 .4l.5 .4l.4 .7l0 .8l-.4 .8l-1 1.2l-4.4 3.9l6.3 0M440.5 440.7l-.4-.7l-1.4-.4l-.9 0l-1.4 .4l-.8 1.1l-.5 2l0 2l.5 1.5l.8 .8l1.4 .4l.4 0l1.4-.4l.9-.8l.4-1.2l0-.3l-.4-1.2l-.9-.8l-1.4-.4l-.4 0l-1.4 .4l-.8 .8l-.5 1.2M443 441.1l.9-.4l1.3-1.1l0 8.2M450.4 441.5l0-.4l.5-.7l.4-.4l.9-.4l1.8 0l.9 .4l.5 .4l.4 .7l0 .8l-.4 .8l-.9 1.2l-4.6 3.9l6.3 0M419.1 452.9l0 8.2M419.1 452.9l4.2 0l1.5 .4l.4 .4l.5 .7l0 .8l-.5 .8l-.4 .4l-1.5 .4M419.1 456.8l4.2 0l1.5 .4l.4 .4l.5 .8l0 1.1l-.5 .8l-.4 .4l-1.5 .4l-4.2 0M431.7 452.9l-1.1 .4l-1 .7l-.6 .8l-.5 1.2l0 2l.5 1.1l.6 .8l1 .8l1.1 .4l2.1 0l1.1-.4l1-.8l.6-.8l.5-1.1l0-2l-.5-1.2l-.6-.8l-1-.7l-1.1-.4l-2.1 0M440.5 452.9l0 8.2M440.5 452.9l4.2 0l1.5 .4l.4 .4l.5 .7l0 .8l-.5 .8l-.4 .4l-1.5 .4M440.5 456.8l4.2 0l1.5 .4l.4 .4l.5 .8l0 1.1l-.5 .8l-.4 .4l-1.5 .4l-4.2 0M460.4 454l-.9-.7l-1.4-.4l-1.9 0l-1.4 .4l-1 .7l0 .8l.5 .8l.5 .4l.9 .4l2.8 .8l1 .4l.5 .4l.4 .7l0 1.2l-.9 .8l-1.4 .4l-1.9 0l-1.4-.4l-1-.8M462.9 452.9l0 8.2M462.9 461.1l5.4 0M419 468.3l.9-.4l1.3-1.1l0 8.2M428.6 466.8l-1.3 .4l-.9 1.1l-.5 2l0 1.2l.5 1.9l.9 1.2l1.3 .4l1 0l1.3-.4l.9-1.2l.4-1.9l0-1.2l-.4-2l-.9-1.1l-1.3-.4l-1 0M434.8 466.8l4.9 0l-2.7 3.1l1.4 0l.8 .4l.5 .4l.4 1.2l0 .7l-.4 1.2l-.9 .8l-1.4 .4l-1.3 0l-1.3-.4l-.5-.4l-.4-.8M442.6 474.2l-.4 .4l.4 .4l.5-.4l-.5-.4M449.9 466.8l-4.5 5.5l6.7 0M449.9 466.8l0 8.2M453.7 468.7l0-.4l.4-.7l.5-.4l.9-.4l1.8 0l.9 .4l.4 .4l.5 .7l0 .8l-.5 .8l-.8 1.2l-4.6 3.9l6.4 0M466.6 466.8l-4.5 0l-.5 3.5l.5-.4l1.3-.4l1.4 0l1.3 .4l.9 .8l.4 1.2l0 .7l-.4 1.2l-.9 .8l-1.3 .4l-1.4 0l-1.3-.4l-.5-.4l-.5-.8M688.9 463.1l.9-.4l1.3-1.1l0 8.2M696.3 463.5l0-.4l.4-.7l.5-.4l.9-.4l1.8 0l.9 .4l.4 .4l.5 .7l0 .8l-.5 .8l-.9 1.2l-4.5 3.9l6.3 0M709.1 461.6l-4.5 0l-.4 3.5l.4-.4l1.4-.4l1.3 0l1.4 .4l.9 .8l.4 1.2l0 .7l-.4 1.2l-.9 .8l-1.4 .4l-1.3 0l-1.4-.4l-.4-.4l-.5-.8M717.5 464.3l-.5 1.2l-.9 .8l-1.3 .4l-.5 0l-1.3-.4l-.9-.8l-.5-1.2l0-.4l.5-1.2l.9-.7l1.3-.4l.5 0l1.3 .4l.9 .7l.5 1.6l0 2l-.5 1.9l-.9 1.2l-1.3 .4l-.9 0l-1.4-.4l-.4-.8M720 463.5l0-.4l.4-.7l.5-.4l.9-.4l1.8 0l.9 .4l.4 .4l.5 .7l0 .8l-.5 .8l-.9 1.2l-4.5 3.9l6.3 0M688.1 474.9l0 8.2M688.1 474.9l4 0l1.4 .4l.4 .4l.5 .7l0 .8l-.5 .8l-.4 .4l-1.4 .4l-4 0M691.2 478.8l3.2 4.3M700.9 474.9l-1 .4l-1.1 .7l-.5 .8l-.6 1.2l0 2l.6 1.1l.5 .8l1.1 .8l1 .4l2.2 0l1-.4l1.1-.8l.5-.8l.5-1.1l0-2l-.5-1.2l-.5-.8l-1.1-.7l-1-.4l-2.2 0M716.8 476.8l-.5-.8l-1-.7l-1-.4l-2 0l-1 .4l-1 .7l-.5 .8l-.5 1.2l0 2l.5 1.1l.5 .8l1 .8l1 .4l2 0l1-.4l1-.8l.5-.8M719.5 474.9l0 8.2M725.8 474.9l-6.3 5.5M721.8 478.4l4 4.7M731.9 474.9l0 8.2M728.7 474.9l6.3 0M738.6 476.4l.9-.4l1.4-1.1l0 8.2M688.1 490.3l.9-.4l1.3-1.1l0 8.2M697.7 488.8l-1.3 .4l-.9 1.1l-.5 2l0 1.2l.5 1.9l.9 1.2l1.3 .4l.9 0l1.4-.4l.9-1.2l.4-1.9l0-1.2l-.4-2l-.9-1.1l-1.4-.4l-.9 0M705.6 488.8l-1.3 .4l-.9 1.1l-.5 2l0 1.2l.5 1.9l.9 1.2l1.3 .4l.9 0l1.4-.4l.9-1.2l.4-1.9l0-1.2l-.4-2l-.9-1.1l-1.4-.4l-.9 0M711.7 496.2l-.4 .4l.4 .4l.5-.4l-.5-.4M719.8 488.8l-4.5 0l-.4 3.5l.4-.4l1.4-.4l1.3 0l1.4 .4l.9 .8l.4 1.2l0 .7l-.4 1.2l-.9 .8l-1.4 .4l-1.3 0l-1.4-.4l-.4-.4l-.5-.8M722.8 490.3l.9-.4l1.3-1.1l0 8.2M730.6 488.8l5 0l-2.7 3.1l1.3 0l.9 .4l.5 .4l.4 1.2l0 .7l-.4 1.2l-.9 .8l-1.4 .4l-1.3 0l-1.4-.4l-.4-.4l-.5-.8M484 489.9l.9-.4l1.3-1.1l0 8.2M491.4 490.3l0-.4l.5-.7l.4-.4l.9-.4l1.8 0l.9 .4l.5 .4l.4 .7l0 .8l-.4 .8l-1 1.2l-4.5 3.9l6.3 0M504.2 488.4l-4.4 0l-.5 3.5l.5-.4l1.3-.4l1.3 0l1.4 .4l.9 .8l.4 1.2l0 .7l-.4 1.2l-.9 .8l-1.4 .4l-1.3 0l-1.3-.4l-.5-.4l-.4-.8M512.6 491.1l-.5 1.2l-.9 .8l-1.3 .4l-.5 0l-1.3-.4l-.9-.8l-.4-1.2l0-.4l.4-1.2l.9-.7l1.3-.4l.5 0l1.3 .4l.9 .7l.5 1.6l0 2l-.5 1.9l-.9 1.2l-1.3 .4l-.9 0l-1.4-.4l-.4-.8M521 488.4l-4.5 8.2M514.6 488.4l6.4 0M483.2 501.7l0 8.2M483.2 501.7l4 0l1.4 .4l.5 .4l.4 .7l0 .8l-.4 .8l-.5 .4l-1.4 .4l-4 0M486.3 505.6l3.2 4.3M496 501.7l-1 .4l-1.1 .7l-.5 .8l-.6 1.2l0 2l.6 1.1l.5 .8l1.1 .8l1 .4l2.2 0l1-.4l1.1-.8l.5-.8l.5-1.1l0-2l-.5-1.2l-.5-.8l-1.1-.7l-1-.4l-2.2 0M511.9 503.6l-.5-.8l-1-.7l-1-.4l-2 0l-1 .4l-1 .7l-.5 .8l-.5 1.2l0 2l.5 1.1l.5 .8l1 .8l1 .4l2 0l1-.4l1-.8l.5-.8M514.6 501.7l0 8.2M520.9 501.7l-6.3 5.5M516.9 505.2l4 4.7M527 501.7l0 8.2M523.9 501.7l6.2 0M544.1 502.8l-1-.7l-1.4-.4l-1.9 0l-1.4 .4l-.9 .7l0 .8l.4 .8l.5 .4l1 .4l2.8 .8l.9 .4l.5 .4l.5 .7l0 1.2l-1 .8l-1.4 .4l-1.9 0l-1.4-.4l-.9-.8M546.5 501.7l0 8.2M546.5 509.9l5.5 0M483.2 517.1l.9-.4l1.3-1.1l0 8.2M492.8 515.6l-1.3 .4l-.9 1.1l-.5 2l0 1.2l.5 1.9l.9 1.2l1.3 .4l1 0l1.3-.4l.9-1.2l.4-1.9l0-1.2l-.4-2l-.9-1.1l-1.3-.4l-1 0M498.9 515.6l5 0l-2.7 3.1l1.4 0l.8 .4l.5 .4l.4 1.2l0 .7l-.4 1.2l-.9 .8l-1.4 .4l-1.3 0l-1.4-.4l-.4-.4l-.4-.8M506.8 523l-.4 .4l.4 .4l.5-.4l-.5-.4M514 515.6l-4.4 5.5l6.7 0M514 515.6l0 8.2M517.9 517.1l.9-.4l1.3-1.1l0 8.2M527.5 515.6l-1.3 .4l-.9 1.1l-.4 2l0 1.2l.4 1.9l.9 1.2l1.3 .4l1 0l1.3-.4l.9-1.2l.4-1.9l0-1.2l-.4-2l-.9-1.1l-1.3-.4l-1 0M495.1 508.7l.9-.4l1.4-1.1l0 8.2M502.5 509.1l0-.4l.5-.7l.4-.4l.9-.4l1.8 0l.9 .4l.5 .4l.4 .7l0 .8l-.4 .8l-.9 1.2l-4.5 3.9l6.3 0M515.4 507.2l-4.5 0l-.5 3.5l.5-.4l1.3-.4l1.4 0l1.3 .4l.9 .8l.4 1.2l0 .7l-.4 1.2l-.9 .8l-1.3 .4l-1.4 0l-1.3-.4l-.5-.4l-.4-.8M523.7 509.9l-.5 1.2l-.8 .8l-1.4 .4l-.4 0l-1.4-.4l-.9-.8l-.4-1.2l0-.4l.4-1.2l.9-.7l1.4-.4l.4 0l1.4 .4l.8 .7l.5 1.6l0 2l-.5 1.9l-.8 1.2l-1.4 .4l-.9 0l-1.3-.4l-.5-.8M531.1 507.2l-4.5 0l-.4 3.5l.4-.4l1.4-.4l1.4 0l1.3 .4l.9 .8l.5 1.2l0 .7l-.5 1.2l-.9 .8l-1.3 .4l-1.4 0l-1.4-.4l-.4-.4l-.4-.8M494.3 520.5l0 8.2M494.3 520.5l4.1 0l1.3 .4l.5 .4l.4 .7l0 .8l-.4 .8l-.5 .4l-1.3 .4l-4.1 0M497.4 524.4l3.2 4.3M507.1 520.5l-1 .4l-1.1 .7l-.5 .8l-.6 1.2l0 2l.6 1.1l.5 .8l1.1 .8l1 .4l2.2 0l1-.4l1.1-.8l.5-.8l.5-1.1l0-2l-.5-1.2l-.5-.8l-1.1-.7l-1-.4l-2.2 0M523 522.4l-.5-.8l-1-.7l-1-.4l-2 0l-1 .4l-1 .7l-.5 .8l-.5 1.2l0 2l.5 1.1l.5 .8l1 .8l1 .4l2 0l1-.4l1-.8l.5-.8M525.8 520.5l0 8.2M532 520.5l-6.2 5.5M528 524l4 4.7M535 520.5l0 8.2M535 520.5l4.3 0l1.4 .4l.5 .4l.5 .7l0 .8l-.5 .8l-.5 .4l-1.4 .4M535 524.4l4.3 0l1.4 .4l.5 .4l.5 .8l0 1.1l-.5 .8l-.5 .4l-1.4 .4l-4.3 0M555 521.6l-1-.7l-1.4-.4l-1.9 0l-1.4 .4l-.9 .7l0 .8l.4 .8l.5 .4l1 .4l2.8 .8l.9 .4l.5 .4l.5 .7l0 1.2l-1 .8l-1.4 .4l-1.9 0l-1.4-.4l-.9-.8M557.5 520.5l0 8.2M557.5 528.7l5.4 0M494.3 535.9l.9-.4l1.4-1.1l0 8.2M503.9 534.4l-1.3 .4l-.9 1.1l-.5 2l0 1.2l.5 1.9l.9 1.2l1.3 .4l1 0l1.3-.4l.9-1.2l.5-1.9l0-1.2l-.5-2l-.9-1.1l-1.3-.4l-1 0M509.6 536.3l0-.4l.5-.7l.4-.4l.9-.4l1.8 0l.9 .4l.4 .4l.5 .7l0 .8l-.5 .8l-.9 1.2l-4.4 3.9l6.3 0M518 541.8l-.5 .4l.5 .4l.4-.4l-.4-.4M525.1 534.4l-4.5 5.5l6.8 0M525.1 534.4l0 8.2M529 536.3l0-.4l.5-.7l.4-.4l.9-.4l1.8 0l.9 .4l.5 .4l.4 .7l0 .8l-.4 .8l-1 1.2l-4.5 3.9l6.4 0M542.8 534.4l-4.6 8.2M536.5 534.4l6.3 0M559.9 501.5l.9-.4l1.3-1.1l0 8.2M567.3 501.9l0-.4l.4-.7l.5-.4l.9-.4l1.8 0l.9 .4l.4 .4l.5 .7l0 .8l-.5 .8l-.9 1.2l-4.5 3.9l6.3 0M580.1 500l-4.5 0l-.4 3.5l.4-.4l1.4-.4l1.3 0l1.4 .4l.9 .8l.4 1.2l0 .7l-.4 1.2l-.9 .8l-1.4 .4l-1.3 0l-1.4-.4l-.4-.4l-.5-.8M588.5 502.7l-.5 1.2l-.9 .8l-1.3 .4l-.5 0l-1.3-.4l-.9-.8l-.5-1.2l0-.4l.5-1.2l.9-.7l1.3-.4l.5 0l1.3 .4l.9 .7l.5 1.6l0 2l-.5 1.9l-.9 1.2l-1.3 .4l-.9 0l-1.4-.4l-.4-.8M595 500l-4.5 5.5l6.8 0M595 500l0 8.2M559.1 513.3l0 8.2M559.1 513.3l4 0l1.4 .4l.4 .4l.5 .7l0 .8l-.5 .8l-.4 .4l-1.4 .4l-4 0M562.2 517.2l3.2 4.3M571.9 513.3l-1 .4l-1.1 .7l-.5 .8l-.6 1.2l0 2l.6 1.1l.5 .8l1.1 .8l1 .4l2.2 0l1-.4l1.1-.8l.5-.8l.5-1.1l0-2l-.5-1.2l-.5-.8l-1.1-.7l-1-.4l-2.2 0M587.8 515.2l-.5-.8l-1-.7l-1-.4l-2 0l-1 .4l-1 .7l-.5 .8l-.5 1.2l0 2l.5 1.1l.5 .8l1 .8l1 .4l2 0l1-.4l1-.8l.5-.8M590.5 513.3l0 8.2M596.8 513.3l-6.3 5.5M592.8 516.8l4 4.7M602.9 513.3l0 8.2M599.7 513.3l6.3 0M609.6 514.8l.9-.4l1.4-1.1l0 8.2M559.1 528.7l.9-.4l1.3-1.1l0 8.2M568.7 527.2l-1.3 .4l-.9 1.1l-.5 2l0 1.2l.5 1.9l.9 1.2l1.3 .4l.9 0l1.4-.4l.9-1.2l.4-1.9l0-1.2l-.4-2l-.9-1.1l-1.4-.4l-.9 0M574.4 529.1l0-.4l.4-.7l.5-.4l.9-.4l1.8 0l.9 .4l.4 .4l.5 .7l0 .8l-.5 .8l-.9 1.2l-4.5 3.9l6.3 0M582.7 534.6l-.4 .4l.4 .4l.5-.4l-.5-.4M586.3 527.2l5 0l-2.7 3.1l1.3 0l.9 .4l.5 .4l.4 1.2l0 .7l-.4 1.2l-.9 .8l-1.4 .4l-1.3 0l-1.4-.4l-.4-.4l-.5-.8M599.2 528.3l-.5-.7l-1.3-.4l-.9 0l-1.4 .4l-.9 1.1l-.4 2l0 2l.4 1.5l.9 .8l1.4 .4l.4 0l1.4-.4l.9-.8l.4-1.2l0-.3l-.4-1.2l-.9-.8l-1.4-.4l-.4 0l-1.4 .4l-.9 .8l-.4 1.2M606.6 527.2l-4.5 0l-.4 3.5l.4-.4l1.4-.4l1.3 0l1.4 .4l.9 .8l.4 1.2l0 .7l-.4 1.2l-.9 .8l-1.4 .4l-1.3 0l-1.4-.4l-.4-.4l-.5-.8M763.4 486.7l.9-.4l1.3-1.1l0 8.2M770.8 487.1l0-.4l.4-.7l.5-.4l.9-.4l1.8 0l.9 .4l.4 .4l.5 .7l0 .8l-.5 .8l-.9 1.2l-4.5 3.9l6.3 0M784.1 486.3l-.5-.7l-1.3-.4l-.9 0l-1.4 .4l-.9 1.1l-.4 2l0 2l.4 1.5l.9 .8l1.4 .4l.4 0l1.4-.4l.9-.8l.4-1.2l0-.3l-.4-1.2l-.9-.8l-1.4-.4l-.4 0l-1.4 .4l-.9 .8l-.4 1.2M786.6 486.7l.9-.4l1.3-1.1l0 8.2M798.9 485.2l-4.5 0l-.4 3.5l.4-.4l1.4-.4l1.3 0l1.4 .4l.9 .8l.4 1.2l0 .7l-.4 1.2l-.9 .8l-1.4 .4l-1.3 0l-1.4-.4l-.4-.4l-.5-.8M762.6 498.5l0 8.2M762.6 498.5l4 0l1.4 .4l.4 .4l.5 .7l0 .8l-.5 .8l-.4 .4l-1.4 .4l-4 0M765.7 502.4l3.2 4.3M775.4 498.5l-1 .4l-1.1 .7l-.5 .8l-.6 1.2l0 2l.6 1.1l.5 .8l1.1 .8l1 .4l2.2 0l1-.4l1.1-.8l.5-.8l.5-1.1l0-2l-.5-1.2l-.5-.8l-1.1-.7l-1-.4l-2.2 0M791.3 500.4l-.5-.8l-1-.7l-1-.4l-2 0l-1 .4l-1 .7l-.5 .8l-.5 1.2l0 2l.5 1.1l.5 .8l1 .8l1 .4l2 0l1-.4l1-.8l.5-.8M794 498.5l0 8.2M800.3 498.5l-6.3 5.5M796.3 502l4 4.7M803.3 498.5l0 8.2M803.3 498.5l4.3 0l1.4 .4l.5 .4l.5 .7l0 .8l-.5 .8l-.5 .4l-1.4 .4M803.3 502.4l4.3 0l1.4 .4l.5 .4l.5 .8l0 1.1l-.5 .8l-.5 .4l-1.4 .4l-4.3 0M812.9 500l.9-.4l1.4-1.1l0 8.2M830.7 499.6l-1-.7l-1.4-.4l-1.9 0l-1.4 .4l-.9 .7l0 .8l.4 .8l.5 .4l1 .4l2.8 .8l.9 .4l.5 .4l.5 .7l0 1.2l-1 .8l-1.4 .4l-1.9 0l-1.4-.4l-.9-.8M833.1 498.5l0 8.2M833.1 506.7l5.4 0M768 515.1l-.5 1.2l-.9 .8l-1.3 .4l-.5 0l-1.3-.4l-.9-.8l-.5-1.2l0-.4l.5-1.2l.9-.7l1.3-.4l.5 0l1.3 .4l.9 .7l.5 1.6l0 2l-.5 1.9l-.9 1.2l-1.3 .4l-.9 0l-1.4-.4l-.4-.8M772.3 512.4l-1.4 .4l-.4 .7l0 .8l.4 .8l.9 .4l1.8 .4l1.4 .4l.9 .8l.4 .8l0 1.1l-.4 .8l-.5 .4l-1.3 .4l-1.8 0l-1.4-.4l-.4-.4l-.5-.8l0-1.1l.5-.8l.9-.8l1.3-.4l1.8-.4l.9-.4l.5-.8l0-.8l-.5-.7l-1.3-.4l-1.8 0M778.8 519.8l-.4 .4l.4 .4l.5-.4l-.5-.4M783.8 512.4l-1.4 .4l-.4 .7l0 .8l.4 .8l.9 .4l1.8 .4l1.4 .4l.9 .8l.4 .8l0 1.1l-.4 .8l-.5 .4l-1.3 .4l-1.8 0l-1.4-.4l-.4-.4l-.5-.8l0-1.1l.5-.8l.9-.8l1.3-.4l1.8-.4l.9-.4l.5-.8l0-.8l-.5-.7l-1.3-.4l-1.8 0M789.9 514.3l0-.4l.4-.7l.5-.4l.9-.4l1.8 0l.9 .4l.4 .4l.5 .7l0 .8l-.5 .8l-.9 1.2l-4.5 3.9l6.3 0M797.8 513.9l.9-.4l1.3-1.1l0 8.2M823.3 494.9l.9-.4l1.3-1.1l0 8.2M830.7 495.3l0-.4l.4-.7l.5-.4l.9-.4l1.8 0l.9 .4l.4 .4l.5 .7l0 .8l-.5 .8l-.8 1.2l-4.6 3.9l6.3 0M844 494.5l-.5-.7l-1.3-.4l-.9 0l-1.4 .4l-.9 1.1l-.4 2l0 2l.4 1.5l.9 .8l1.4 .4l.5 0l1.3-.4l.9-.8l.4-1.2l0-.3l-.4-1.2l-.9-.8l-1.3-.4l-.5 0l-1.4 .4l-.9 .8l-.4 1.2M846.5 494.9l.9-.4l1.4-1.1l0 8.2M859.3 496.1l-.5 1.2l-.9 .8l-1.3 .4l-.5 0l-1.3-.4l-.9-.8l-.5-1.2l0-.4l.5-1.2l.9-.7l1.3-.4l.5 0l1.3 .4l.9 .7l.5 1.6l0 2l-.5 1.9l-.9 1.2l-1.3 .4l-.9 0l-1.4-.4l-.4-.8M822.5 506.7l0 8.2M822.5 506.7l4 0l1.4 .4l.5 .4l.4 .7l0 .8l-.4 .8l-.5 .4l-1.4 .4l-4 0M825.6 510.6l3.2 4.3M835.3 506.7l-1 .4l-1.1 .7l-.5 .8l-.6 1.2l0 2l.6 1.1l.5 .8l1.1 .8l1 .4l2.2 0l1-.4l1.1-.8l.5-.8l.5-1.1l0-2l-.5-1.2l-.5-.8l-1.1-.7l-1-.4l-2.2 0M851.2 508.6l-.5-.8l-1-.7l-1-.4l-2 0l-1 .4l-1 .7l-.5 .8l-.5 1.2l0 2l.5 1.1l.5 .8l1 .8l1 .4l2 0l1-.4l1-.8l.5-.8M854 506.7l0 8.2M860.2 506.7l-6.2 5.5M856.2 510.2l4 4.7M866.3 506.7l0 8.2M863.1 506.7l6.4 0M873 508.2l1-.4l1.3-1.1l0 8.2M827.9 523.3l-.4 1.2l-1 .8l-1.3 .4l-.4 0l-1.4-.4l-.9-.8l-.5-1.2l0-.4l.5-1.2l.9-.7l1.4-.4l.4 0l1.3 .4l1 .7l.4 1.6l0 2l-.4 1.9l-1 1.2l-1.3 .4l-.9 0l-1.3-.4l-.5-.8M836.2 520.6l-4.4 8.2M830 520.6l6.2 0M838.8 528l-.5 .4l.5 .4l.4-.4l-.4-.4M847.3 523.3l-.4 1.2l-.9 .8l-1.4 .4l-.5 0l-1.3-.4l-.9-.8l-.4-1.2l0-.4l.4-1.2l.9-.7l1.3-.4l.5 0l1.4 .4l.9 .7l.4 1.6l0 2l-.4 1.9l-.9 1.2l-1.4 .4l-.9 0l-1.3-.4l-.5-.8M852 520.6l-1.3 .4l-.9 1.1l-.4 2l0 1.2l.4 1.9l.9 1.2l1.3 .4l1 0l1.3-.4l.9-1.2l.4-1.9l0-1.2l-.4-2l-.9-1.1l-1.3-.4l-1 0M863.5 520.6l-4.5 8.2M857.2 520.6l6.3 0M453.3 535.2l.9-.4l1.4-1.1l0 8.2M460.7 535.6l0-.4l.5-.7l.4-.4l.9-.4l1.8 0l.9 .4l.5 .4l.4 .7l0 .8l-.4 .8l-.9 1.2l-4.6 3.9l6.4 0M474 534.8l-.4-.7l-1.4-.4l-.9 0l-1.4 .4l-.8 1.1l-.5 2l0 2l.5 1.5l.8 .8l1.4 .4l.5 0l1.3-.4l.9-.8l.4-1.2l0-.3l-.4-1.2l-.9-.8l-1.3-.4l-.5 0l-1.4 .4l-.8 .8l-.5 1.2M478.8 533.7l-1.4 .4l-.9 1.1l-.4 2l0 1.2l.4 1.9l.9 1.2l1.4 .4l.9 0l1.3-.4l.9-1.2l.5-1.9l0-1.2l-.5-2l-.9-1.1l-1.3-.4l-.9 0M489.8 536.4l-.4 1.2l-.9 .8l-1.4 .4l-.4 0l-1.4-.4l-.9-.8l-.5-1.2l0-.4l.5-1.2l.9-.7l1.4-.4l.4 0l1.4 .4l.9 .7l.4 1.6l0 2l-.4 1.9l-.9 1.2l-1.4 .4l-.9 0l-1.3-.4l-.5-.8M452.6 547l0 8.2M452.6 547l4.2 0l1.5 .4l.4 .4l.5 .7l0 .8l-.5 .8l-.4 .4l-1.5 .4M452.6 550.9l4.2 0l1.5 .4l.4 .4l.5 .8l0 1.1l-.5 .8l-.4 .4l-1.5 .4l-4.2 0M465.2 547l-1.1 .4l-1 .7l-.6 .8l-.5 1.2l0 2l.5 1.1l.6 .8l1 .8l1.1 .4l2.1 0l1.1-.4l1-.8l.6-.8l.5-1.1l0-2l-.5-1.2l-.6-.8l-1-.7l-1.1-.4l-2.1 0M474 547l0 8.2M474 547l4.2 0l1.5 .4l.4 .4l.5 .7l0 .8l-.5 .8l-.4 .4l-1.5 .4M474 550.9l4.2 0l1.5 .4l.4 .4l.5 .8l0 1.1l-.5 .8l-.4 .4l-1.5 .4l-4.2 0M452.5 562.4l.9-.4l1.4-1.1l0 8.2M462.1 560.9l-1.3 .4l-.9 1.1l-.5 2l0 1.2l.5 1.9l.9 1.2l1.3 .4l1 0l1.3-.4l.9-1.2l.5-1.9l0-1.2l-.5-2l-.9-1.1l-1.3-.4l-1 0M467.8 562.8l0-.4l.4-.7l.5-.4l.9-.4l1.8 0l.9 .4l.5 .4l.4 .7l0 .8l-.4 .8l-.9 1.2l-4.5 3.9l6.2 0M476.1 568.3l-.4 .4l.4 .4l.5-.4l-.5-.4M481.1 560.9l-1.3 .4l-.5 .7l0 .8l.5 .8l.8 .4l1.8 .4l1.4 .4l.9 .8l.4 .8l0 1.1l-.4 .8l-.5 .4l-1.3 .4l-1.8 0l-1.3-.4l-.5-.4l-.4-.8l0-1.1l.4-.8l.9-.8l1.4-.4l1.8-.4l.8-.4l.5-.8l0-.8l-.5-.7l-1.3-.4l-1.8 0M487.2 562.8l0-.4l.4-.7l.5-.4l.9-.4l1.8 0l.9 .4l.4 .4l.5 .7l0 .8l-.5 .8l-.9 1.2l-4.4 3.9l6.3 0M500.5 562l-.4-.7l-1.4-.4l-.9 0l-1.4 .4l-.8 1.1l-.5 2l0 2l.5 1.5l.8 .8l1.4 .4l.4 0l1.4-.4l.9-.8l.4-1.2l0-.3l-.4-1.2l-.9-.8l-1.4-.4l-.4 0l-1.4 .4l-.8 .8l-.5 1.2M609.9 565.2l.9-.4l1.3-1.1l0 8.2M617.3 565.6l0-.4l.4-.7l.5-.4l.9-.4l1.8 0l.9 .4l.4 .4l.5 .7l0 .8l-.5 .8l-.9 1.2l-4.5 3.9l6.3 0M630.6 564.8l-.5-.7l-1.3-.4l-.9 0l-1.4 .4l-.9 1.1l-.4 2l0 2l.4 1.5l.9 .8l1.4 .4l.4 0l1.4-.4l.9-.8l.4-1.2l0-.3l-.4-1.2l-.9-.8l-1.4-.4l-.4 0l-1.4 .4l-.9 .8l-.4 1.2M635.3 563.7l-1.3 .4l-.9 1.1l-.5 2l0 1.2l.5 1.9l.9 1.2l1.3 .4l.9 0l1.4-.4l.9-1.2l.4-1.9l0-1.2l-.4-2l-.9-1.1l-1.4-.4l-.9 0M642.8 563.7l-1.4 .4l-.4 .7l0 .8l.4 .8l.9 .4l1.8 .4l1.4 .4l.9 .8l.4 .8l0 1.1l-.4 .8l-.5 .4l-1.3 .4l-1.8 0l-1.4-.4l-.4-.4l-.5-.8l0-1.1l.5-.8l.9-.8l1.3-.4l1.8-.4l.9-.4l.5-.8l0-.8l-.5-.7l-1.3-.4l-1.8 0M609.1 577l0 8.2M609.1 577l4 0l1.4 .4l.4 .4l.5 .7l0 .8l-.5 .8l-.4 .4l-1.4 .4l-4 0M612.2 580.9l3.2 4.3M621.9 577l-1 .4l-1.1 .7l-.5 .8l-.6 1.2l0 2l.6 1.1l.5 .8l1.1 .8l1 .4l2.2 0l1-.4l1.1-.8l.5-.8l.5-1.1l0-2l-.5-1.2l-.5-.8l-1.1-.7l-1-.4l-2.2 0M637.8 578.9l-.5-.8l-1-.7l-1-.4l-2 0l-1 .4l-1 .7l-.5 .8l-.5 1.2l0 2l.5 1.1l.5 .8l1 .8l1 .4l2 0l1-.4l1-.8l.5-.8M640.5 577l0 8.2M646.8 577l-6.3 5.5M642.8 580.5l4 4.7M652.9 577l0 8.2M649.7 577l6.3 0M659.6 578.5l.9-.4l1.4-1.1l0 8.2M674.7 577l0 6.2l-.4 1.2l-.5 .4l-.9 .4l-.9 0l-.9-.4l-.4-.4l-.5-1.2l0-.7M677.1 577l0 8.2M677.1 577l4.1 0l1.3 .4l.5 .4l.4 .7l0 1.2l-.4 .8l-.5 .4l-1.3 .4l-4.1 0M694.7 578.5l.9-.4l1.4-1.1l0 8.2M702.1 578.9l0-.4l.5-.7l.4-.4l.9-.4l1.8 0l.9 .4l.5 .4l.4 .7l0 .8l-.4 .8l-.9 1.2l-4.5 3.9l6.3 0M715 577l-4.5 0l-.5 3.5l.5-.4l1.3-.4l1.4 0l1.3 .4l.9 .8l.5 1.2l0 .7l-.5 1.2l-.9 .8l-1.3 .4l-1.4 0l-1.3-.4l-.5-.4l-.4-.8M723.3 579.7l-.4 1.2l-.9 .8l-1.4 .4l-.4 0l-1.4-.4l-.9-.8l-.4-1.2l0-.4l.4-1.2l.9-.7l1.4-.4l.4 0l1.4 .4l.9 .7l.4 1.6l0 2l-.4 1.9l-.9 1.2l-1.4 .4l-.9 0l-1.3-.4l-.5-.8M729.9 577l-4.5 5.5l6.7 0M729.9 577l0 8.2M609.1 592.4l.9-.4l1.3-1.1l0 8.2M618.7 590.9l-1.3 .4l-.9 1.1l-.5 2l0 1.2l.5 1.9l.9 1.2l1.3 .4l.9 0l1.4-.4l.9-1.2l.4-1.9l0-1.2l-.4-2l-.9-1.1l-1.4-.4l-.9 0M624.4 592.4l.9-.4l1.3-1.1l0 8.2M632.2 598.3l-.4 .4l.4 .4l.5-.4l-.5-.4M640.3 590.9l-4.5 0l-.4 3.5l.4-.4l1.4-.4l1.3 0l1.4 .4l.9 .8l.4 1.2l0 .7l-.4 1.2l-.9 .8l-1.4 .4l-1.3 0l-1.4-.4l-.4-.4l-.5-.8M643.3 592.8l0-.4l.4-.7l.5-.4l.9-.4l1.8 0l.9 .4l.4 .4l.5 .7l0 .8l-.5 .8l-.9 1.2l-4.5 3.9l6.3 0M656.1 590.9l-4.5 0l-.4 3.5l.4-.4l1.4-.4l1.3 0l1.4 .4l.9 .8l.4 1.2l0 .7l-.4 1.2l-.9 .8l-1.4 .4l-1.3 0l-1.4-.4l-.4-.4l-.5-.8M707.9 590.3l.9-.4l1.3-1.1l0 8.2M715.3 590.7l0-.4l.4-.7l.5-.4l.9-.4l1.8 0l.9 .4l.4 .4l.5 .7l0 .8l-.5 .8l-.9 1.2l-4.5 3.9l6.3 0M728.1 588.8l-4.5 0l-.4 3.5l.4-.4l1.4-.4l1.3 0l1.4 .4l.9 .8l.4 1.2l0 .7l-.4 1.2l-.9 .8l-1.4 .4l-1.3 0l-1.4-.4l-.4-.4l-.5-.8M736.5 591.5l-.5 1.2l-.9 .8l-1.3 .4l-.5 0l-1.3-.4l-.9-.8l-.5-1.2l0-.4l.5-1.2l.9-.7l1.3-.4l.5 0l1.3 .4l.9 .7l.5 1.6l0 2l-.5 1.9l-.9 1.2l-1.3 .4l-.9 0l-1.4-.4l-.4-.8M739 590.3l.9-.4l1.3-1.1l0 8.2M707.1 602.1l0 8.2M707.1 602.1l4 0l1.4 .4l.4 .4l.5 .7l0 .8l-.5 .8l-.4 .4l-1.4 .4l-4 0M710.2 606l3.2 4.3M719.9 602.1l-1 .4l-1.1 .7l-.5 .8l-.6 1.2l0 2l.6 1.1l.5 .8l1.1 .8l1 .4l2.2 0l1-.4l1.1-.8l.5-.8l.5-1.1l0-2l-.5-1.2l-.5-.8l-1.1-.7l-1-.4l-2.2 0M735.8 604l-.5-.8l-1-.7l-1-.4l-2 0l-1 .4l-1 .7l-.5 .8l-.5 1.2l0 2l.5 1.1l.5 .8l1 .8l1 .4l2 0l1-.4l1-.8l.5-.8M738.5 602.1l0 8.2M744.8 602.1l-6.3 5.5M740.8 605.6l4 4.7M750.9 602.1l0 8.2M747.7 602.1l6.3 0M757.6 603.6l.9-.4l1.4-1.1l0 8.2M707.1 617.5l.9-.4l1.3-1.1l0 8.2M716.7 616l-1.3 .4l-.9 1.1l-.5 2l0 1.2l.5 1.9l.9 1.2l1.3 .4l.9 0l1.4-.4l.9-1.2l.4-1.9l0-1.2l-.4-2l-.9-1.1l-1.4-.4l-.9 0M724.6 616l-1.3 .4l-.9 1.1l-.5 2l0 1.2l.5 1.9l.9 1.2l1.3 .4l.9 0l1.4-.4l.9-1.2l.4-1.9l0-1.2l-.4-2l-.9-1.1l-1.4-.4l-.9 0M730.7 623.4l-.4 .4l.4 .4l.5-.4l-.5-.4M739.3 617.1l-.5-.7l-1.3-.4l-.9 0l-1.4 .4l-.9 1.1l-.4 2l0 2l.4 1.5l.9 .8l1.4 .4l.4 0l1.4-.4l.9-.8l.4-1.2l0-.3l-.4-1.2l-.9-.8l-1.4-.4l-.4 0l-1.4 .4l-.9 .8l-.4 1.2M746.7 616l-4.5 0l-.4 3.5l.4-.4l1.4-.4l1.3 0l1.4 .4l.9 .8l.4 1.2l0 .7l-.4 1.2l-.9 .8l-1.4 .4l-1.3 0l-1.4-.4l-.4-.4l-.5-.8M751.5 616l-1.4 .4l-.4 .7l0 .8l.4 .8l.9 .4l1.8 .4l1.4 .4l.9 .8l.4 .8l0 1.1l-.4 .8l-.5 .4l-1.3 .4l-1.8 0l-1.4-.4l-.4-.4l-.5-.8l0-1.1l.5-.8l.9-.8l1.3-.4l1.8-.4l.9-.4l.5-.8l0-.8l-.5-.7l-1.3-.4l-1.8 0M774.9 593.9l.9-.4l1.3-1.1l0 8.2M782.3 594.3l0-.4l.4-.7l.5-.4l.9-.4l1.8 0l.9 .4l.4 .4l.5 .7l0 .8l-.5 .8l-.9 1.2l-4.5 3.9l6.3 0M795.6 593.5l-.5-.7l-1.3-.4l-.9 0l-1.4 .4l-.9 1.1l-.4 2l0 2l.4 1.5l.9 .8l1.4 .4l.4 0l1.4-.4l.9-.8l.4-1.2l0-.3l-.4-1.2l-.9-.8l-1.4-.4l-.4 0l-1.4 .4l-.9 .8l-.4 1.2M798.1 593.9l.9-.4l1.3-1.1l0 8.2M807.3 592.4l-1.4 .4l-.4 .7l0 .8l.4 .8l.9 .4l1.8 .4l1.4 .4l.9 .8l.4 .8l0 1.1l-.4 .8l-.5 .4l-1.3 .4l-1.8 0l-1.4-.4l-.4-.4l-.5-.8l0-1.1l.5-.8l.9-.8l1.3-.4l1.8-.4l.9-.4l.5-.8l0-.8l-.5-.7l-1.3-.4l-1.8 0M774.1 605.7l0 8.2M774.1 605.7l4 0l1.4 .4l.4 .4l.5 .7l0 .8l-.5 .8l-.4 .4l-1.4 .4l-4 0M777.2 609.6l3.2 4.3M786.9 605.7l-1 .4l-1.1 .7l-.5 .8l-.6 1.2l0 2l.6 1.1l.5 .8l1.1 .8l1 .4l2.2 0l1-.4l1.1-.8l.5-.8l.5-1.1l0-2l-.5-1.2l-.5-.8l-1.1-.7l-1-.4l-2.2 0M802.8 607.6l-.5-.8l-1-.7l-1-.4l-2 0l-1 .4l-1 .7l-.5 .8l-.5 1.2l0 2l.5 1.1l.5 .8l1 .8l1 .4l2 0l1-.4l1-.8l.5-.8M805.5 605.7l0 8.2M811.8 605.7l-6.3 5.5M807.8 609.2l4 4.7M817.9 605.7l0 8.2M814.7 605.7l6.3 0M824.6 607.2l.9-.4l1.4-1.1l0 8.2M842.4 606.8l-1-.7l-1.4-.4l-1.9 0l-1.4 .4l-.9 .7l0 .8l.4 .8l.5 .4l1 .4l2.8 .8l.9 .4l.5 .4l.5 .7l0 1.2l-1 .8l-1.4 .4l-1.9 0l-1.4-.4l-.9-.8M844.8 605.7l0 8.2M844.8 613.9l5.4 0M779.5 622.3l-.5 1.2l-.9 .8l-1.3 .4l-.5 0l-1.3-.4l-.9-.8l-.5-1.2l0-.4l.5-1.2l.9-.7l1.3-.4l.5 0l1.3 .4l.9 .7l.5 1.6l0 2l-.5 1.9l-.9 1.2l-1.3 .4l-.9 0l-1.4-.4l-.4-.8M783.8 619.6l-1.4 .4l-.4 .7l0 .8l.4 .8l.9 .4l1.8 .4l1.4 .4l.9 .8l.4 .8l0 1.1l-.4 .8l-.5 .4l-1.3 .4l-1.8 0l-1.4-.4l-.4-.4l-.5-.8l0-1.1l.5-.8l.9-.8l1.3-.4l1.8-.4l.9-.4l.5-.8l0-.8l-.5-.7l-1.3-.4l-1.8 0M790.3 627l-.4 .4l.4 .4l.5-.4l-.5-.4M795.3 619.6l-1.4 .4l-.4 .7l0 .8l.4 .8l.9 .4l1.8 .4l1.4 .4l.9 .8l.4 .8l0 1.1l-.4 .8l-.5 .4l-1.3 .4l-1.8 0l-1.4-.4l-.4-.4l-.5-.8l0-1.1l.5-.8l.9-.8l1.3-.4l1.8-.4l.9-.4l.5-.8l0-.8l-.5-.7l-1.3-.4l-1.8 0M801.4 621.1l.9-.4l1.3-1.1l0 8.2M809.2 619.6l5 0l-2.7 3.1l1.3 0l.9 .4l.5 .4l.4 1.2l0 .7l-.4 1.2l-.9 .8l-1.4 .4l-1.3 0l-1.4-.4l-.4-.4l-.5-.8M869.6 593.5l.9-.4l1.3-1.1l0 8.2M877 593.9l0-.4l.4-.7l.5-.4l.9-.4l1.8 0l.9 .4l.4 .4l.5 .7l0 .8l-.5 .8l-.9 1.2l-4.5 3.9l6.3 0M890.3 593.1l-.5-.7l-1.3-.4l-.9 0l-1.4 .4l-.9 1.1l-.4 2l0 2l.4 1.5l.9 .8l1.4 .4l.4 0l1.4-.4l.9-.8l.4-1.2l0-.3l-.4-1.2l-.9-.8l-1.4-.4l-.4 0l-1.4 .4l-.9 .8l-.4 1.2M892.8 593.9l0-.4l.4-.7l.5-.4l.9-.4l1.8 0l.9 .4l.4 .4l.5 .7l0 .8l-.5 .8l-.9 1.2l-4.5 3.9l6.3 0M906.1 593.1l-.5-.7l-1.3-.4l-.9 0l-1.4 .4l-.9 1.1l-.4 2l0 2l.4 1.5l.9 .8l1.4 .4l.4 0l1.4-.4l.9-.8l.4-1.2l0-.3l-.4-1.2l-.9-.8l-1.4-.4l-.4 0l-1.4 .4l-.9 .8l-.4 1.2M868.8 605.3l0 8.2M868.8 605.3l4 0l1.4 .4l.4 .4l.5 .7l0 .8l-.5 .8l-.4 .4l-1.4 .4l-4 0M871.9 609.2l3.2 4.3M881.6 605.3l-1 .4l-1.1 .7l-.5 .8l-.6 1.2l0 2l.6 1.1l.5 .8l1.1 .8l1 .4l2.2 0l1-.4l1.1-.8l.5-.8l.5-1.1l0-2l-.5-1.2l-.5-.8l-1.1-.7l-1-.4l-2.2 0M897.5 607.2l-.5-.8l-1-.7l-1-.4l-2 0l-1 .4l-1 .7l-.5 .8l-.5 1.2l0 2l.5 1.1l.5 .8l1 .8l1 .4l2 0l1-.4l1-.8l.5-.8M900.2 605.3l0 8.2M906.5 605.3l-6.3 5.5M902.5 608.8l4 4.7M909.5 605.3l0 8.2M909.5 605.3l4.3 0l1.4 .4l.5 .4l.5 .7l0 .8l-.5 .8l-.5 .4l-1.4 .4M909.5 609.2l4.3 0l1.4 .4l.5 .4l.5 .8l0 1.1l-.5 .8l-.5 .4l-1.4 .4l-4.3 0M919.1 606.8l.9-.4l1.4-1.1l0 8.2M936.9 606.4l-1-.7l-1.4-.4l-1.9 0l-1.4 .4l-.9 .7l0 .8l.4 .8l.5 .4l1 .4l2.8 .8l.9 .4l.5 .4l.5 .7l0 1.2l-1 .8l-1.4 .4l-1.9 0l-1.4-.4l-.9-.8M939.3 605.3l0 8.2M939.3 613.5l5.5 0M874.2 621.9l-.4 1.2l-1 .8l-1.3 .4l-.5 0l-1.3-.4l-.9-.8l-.5-1.2l0-.4l.5-1.2l.9-.7l1.3-.4l.5 0l1.3 .4l1 .7l.4 1.6l0 2l-.4 1.9l-1 1.2l-1.3 .4l-.9 0l-1.4-.4l-.4-.8M880.8 619.2l-4.6 5.5l6.8 0M880.8 619.2l0 8.2M885 626.6l-.4 .4l.4 .4l.5-.4l-.5-.4M893.6 621.9l-.5 1.2l-.9 .8l-1.3 .4l-.5 0l-1.3-.4l-.9-.8l-.4-1.2l0-.4l.4-1.2l.9-.7l1.3-.4l.5 0l1.3 .4l.9 .7l.5 1.6l0 2l-.5 1.9l-.9 1.2l-1.3 .4l-.9 0l-1.4-.4l-.4-.8M900.1 619.2l-4.5 5.5l6.8 0M900.1 619.2l0 8.2M904 620.7l.9-.4l1.3-1.1l0 8.2M686.7 630.7l.9-.4l1.3-1.1l0 8.2M694.1 631.1l0-.4l.4-.7l.5-.4l.9-.4l1.8 0l.9 .4l.4 .4l.5 .7l0 .8l-.5 .8l-.9 1.2l-4.5 3.9l6.3 0M707.4 630.3l-.5-.7l-1.3-.4l-.9 0l-1.4 .4l-.9 1.1l-.4 2l0 2l.4 1.5l.9 .8l1.4 .4l.4 0l1.4-.4l.9-.8l.4-1.2l0-.3l-.4-1.2l-.9-.8l-1.4-.4l-.4 0l-1.4 .4l-.9 .8l-.4 1.2M712.1 629.2l-1.3 .4l-.9 1.1l-.5 2l0 1.2l.5 1.9l.9 1.2l1.3 .4l.9 0l1.4-.4l.9-1.2l.4-1.9l0-1.2l-.4-2l-.9-1.1l-1.4-.4l-.9 0M723.2 630.3l-.5-.7l-1.3-.4l-.9 0l-1.4 .4l-.9 1.1l-.4 2l0 2l.4 1.5l.9 .8l1.4 .4l.4 0l1.4-.4l.9-.8l.4-1.2l0-.3l-.4-1.2l-.9-.8l-1.4-.4l-.4 0l-1.4 .4l-.9 .8l-.4 1.2M685.9 642.5l0 8.2M685.9 642.5l4 0l1.4 .4l.5 .4l.4 .7l0 .8l-.4 .8l-.5 .4l-1.4 .4l-4 0M689 646.4l3.2 4.3M698.7 642.5l-1 .4l-1.1 .7l-.5 .8l-.6 1.2l0 2l.6 1.1l.5 .8l1.1 .8l1 .4l2.2 0l1-.4l1.1-.8l.5-.8l.5-1.1l0-2l-.5-1.2l-.5-.8l-1.1-.7l-1-.4l-2.2 0M714.6 644.4l-.5-.8l-1-.7l-1-.4l-2 0l-1 .4l-1 .7l-.5 .8l-.5 1.2l0 2l.5 1.1l.5 .8l1 .8l1 .4l2 0l1-.4l1-.8l.5-.8M717.4 642.5l0 8.2M723.6 642.5l-6.2 5.5M719.6 646l4 4.7M726.6 642.5l0 8.2M726.6 642.5l4.3 0l1.4 .4l.5 .4l.5 .7l0 .8l-.5 .8l-.5 .4l-1.4 .4M726.6 646.4l4.3 0l1.4 .4l.5 .4l.5 .8l0 1.1l-.5 .8l-.5 .4l-1.4 .4l-4.3 0M691.3 659.1l-.4 1.2l-1 .8l-1.3 .4l-.5 0l-1.3-.4l-.9-.8l-.5-1.2l0-.4l.5-1.2l.9-.7l1.3-.4l.5 0l1.3 .4l1 .7l.4 1.6l0 2l-.4 1.9l-1 1.2l-1.3 .4l-.9 0l-1.3-.4l-.5-.8M699.2 659.1l-.4 1.2l-.9 .8l-1.4 .4l-.5 0l-1.3-.4l-.9-.8l-.4-1.2l0-.4l.4-1.2l.9-.7l1.3-.4l.5 0l1.4 .4l.9 .7l.4 1.6l0 2l-.4 1.9l-.9 1.2l-1.4 .4l-.9 0l-1.4-.4l-.4-.8M702.1 663.8l-.4 .4l.4 .4l.5-.4l-.5-.4M710.7 659.1l-.5 1.2l-.8 .8l-1.4 .4l-.5 0l-1.3-.4l-.9-.8l-.4-1.2l0-.4l.4-1.2l.9-.7l1.3-.4l.5 0l1.4 .4l.8 .7l.5 1.6l0 2l-.5 1.9l-.8 1.2l-1.4 .4l-.9 0l-1.3-.4l-.5-.8M713.6 656.4l5 0l-2.7 3.1l1.3 0l.9 .4l.5 .4l.4 1.2l0 .7l-.4 1.2l-.9 .8l-1.3 .4l-1.4 0l-1.4-.4l-.4-.4l-.4-.8M726 656.4l-4.5 0l-.4 3.5l.4-.4l1.4-.4l1.3 0l1.4 .4l.9 .8l.4 1.2l0 .7l-.4 1.2l-.9 .8l-1.4 .4l-1.3 0l-1.4-.4l-.4-.4l-.5-.8M648 644.4l.9-.4l1.3-1.1l0 8.2M655.4 644.8l0-.4l.4-.7l.5-.4l.9-.4l1.8 0l.9 .4l.4 .4l.5 .7l0 .8l-.5 .8l-.9 1.2l-4.5 3.9l6.3 0M668.7 644l-.5-.7l-1.3-.4l-.9 0l-1.4 .4l-.9 1.1l-.4 2l0 2l.4 1.5l.9 .8l1.4 .4l.4 0l1.4-.4l.9-.8l.4-1.2l0-.3l-.4-1.2l-.9-.8l-1.4-.4l-.4 0l-1.4 .4l-.9 .8l-.4 1.2M673.4 642.9l-1.3 .4l-.9 1.1l-.5 2l0 1.2l.5 1.9l.9 1.2l1.3 .4l.9 0l1.4-.4l.9-1.2l.4-1.9l0-1.2l-.4-2l-.9-1.1l-1.4-.4l-.9 0M684.9 642.9l-4.5 8.2M678.6 642.9l6.3 0M647.2 656.2l0 8.2M647.2 656.2l4 0l1.4 .4l.4 .4l.5 .7l0 .8l-.5 .8l-.4 .4l-1.4 .4l-4 0M650.3 660.1l3.2 4.3M660 656.2l-1 .4l-1.1 .7l-.5 .8l-.6 1.2l0 2l.6 1.1l.5 .8l1.1 .8l1 .4l2.2 0l1-.4l1.1-.8l.5-.8l.5-1.1l0-2l-.5-1.2l-.5-.8l-1.1-.7l-1-.4l-2.2 0M675.9 658.1l-.5-.8l-1-.7l-1-.4l-2 0l-1 .4l-1 .7l-.5 .8l-.5 1.2l0 2l.5 1.1l.5 .8l1 .8l1 .4l2 0l1-.4l1-.8l.5-.8M678.6 656.2l0 8.2M684.9 656.2l-6.3 5.5M680.9 659.7l4 4.7M687.9 656.2l0 8.2M687.9 656.2l4.3 0l1.4 .4l.5 .4l.5 .7l0 .8l-.5 .8l-.5 .4l-1.4 .4M687.9 660.1l4.3 0l1.4 .4l.5 .4l.5 .8l0 1.1l-.5 .8l-.5 .4l-1.4 .4l-4.3 0M647.2 671.6l.9-.4l1.3-1.1l0 8.2M656.8 670.1l-1.3 .4l-.9 1.1l-.5 2l0 1.2l.5 1.9l.9 1.2l1.3 .4l.9 0l1.4-.4l.9-1.2l.4-1.9l0-1.2l-.4-2l-.9-1.1l-1.4-.4l-.9 0M664.7 670.1l-1.3 .4l-.9 1.1l-.5 2l0 1.2l.5 1.9l.9 1.2l1.3 .4l.9 0l1.4-.4l.9-1.2l.4-1.9l0-1.2l-.4-2l-.9-1.1l-1.4-.4l-.9 0M670.8 677.5l-.4 .4l.4 .4l.5-.4l-.5-.4M679.4 672.8l-.5 1.2l-.9 .8l-1.3 .4l-.5 0l-1.3-.4l-.9-.8l-.5-1.2l0-.4l.5-1.2l.9-.7l1.3-.4l.5 0l1.3 .4l.9 .7l.5 1.6l0 2l-.5 1.9l-.9 1.2l-1.3 .4l-.9 0l-1.4-.4l-.4-.8M683.7 670.1l-1.4 .4l-.4 .7l0 .8l.4 .8l.9 .4l1.8 .4l1.4 .4l.9 .8l.4 .8l0 1.1l-.4 .8l-.5 .4l-1.3 .4l-1.8 0l-1.4-.4l-.4-.4l-.5-.8l0-1.1l.5-.8l.9-.8l1.3-.4l1.8-.4l.9-.4l.5-.8l0-.8l-.5-.7l-1.3-.4l-1.8 0M695.6 670.1l-4.5 8.2M689.3 670.1l6.3 0M747.9 673.6l.9-.4l1.3-1.1l0 8.2M755.3 674l0-.4l.4-.7l.5-.4l.9-.4l1.8 0l.9 .4l.4 .4l.5 .7l0 .8l-.5 .8l-.9 1.2l-4.5 3.9l6.3 0M768.1 672.1l-4.5 0l-.4 3.5l.4-.4l1.4-.4l1.3 0l1.4 .4l.9 .8l.4 1.2l0 .7l-.4 1.2l-.9 .8l-1.4 .4l-1.3 0l-1.4-.4l-.4-.4l-.5-.8M776.5 674.8l-.5 1.2l-.9 .8l-1.3 .4l-.5 0l-1.3-.4l-.9-.8l-.5-1.2l0-.4l.5-1.2l.9-.7l1.3-.4l.5 0l1.3 .4l.9 .7l.5 1.6l0 2l-.5 1.9l-.9 1.2l-1.3 .4l-.9 0l-1.4-.4l-.4-.8M781.2 672.1l-1.3 .4l-.9 1.1l-.5 2l0 1.2l.5 1.9l.9 1.2l1.3 .4l.9 0l1.4-.4l.9-1.2l.4-1.9l0-1.2l-.4-2l-.9-1.1l-1.4-.4l-.9 0M747.1 685.4l0 8.2M747.1 685.4l4 0l1.4 .4l.4 .4l.5 .7l0 .8l-.5 .8l-.4 .4l-1.4 .4l-4 0M750.2 689.3l3.2 4.3M759.9 685.4l-1 .4l-1.1 .7l-.5 .8l-.6 1.2l0 2l.6 1.1l.5 .8l1.1 .8l1 .4l2.2 0l1-.4l1.1-.8l.5-.8l.5-1.1l0-2l-.5-1.2l-.5-.8l-1.1-.7l-1-.4l-2.2 0M775.8 687.3l-.5-.8l-1-.7l-1-.4l-2 0l-1 .4l-1 .7l-.5 .8l-.5 1.2l0 2l.5 1.1l.5 .8l1 .8l1 .4l2 0l1-.4l1-.8l.5-.8M778.5 685.4l0 8.2M784.8 685.4l-6.3 5.5M780.8 688.9l4 4.7M790.9 685.4l0 8.2M787.7 685.4l6.3 0M797.6 686.9l.9-.4l1.4-1.1l0 8.2M752.5 702l-.5 1.2l-.9 .8l-1.3 .4l-.5 0l-1.3-.4l-.9-.8l-.5-1.2l0-.4l.5-1.2l.9-.7l1.3-.4l.5 0l1.3 .4l.9 .7l.5 1.6l0 2l-.5 1.9l-.9 1.2l-1.3 .4l-.9 0l-1.4-.4l-.4-.8M760.4 702l-.5 1.2l-.9 .8l-1.3 .4l-.5 0l-1.3-.4l-.9-.8l-.5-1.2l0-.4l.5-1.2l.9-.7l1.3-.4l.5 0l1.3 .4l.9 .7l.5 1.6l0 2l-.5 1.9l-.9 1.2l-1.3 .4l-.9 0l-1.4-.4l-.4-.8M763.3 706.7l-.4 .4l.4 .4l.5-.4l-.5-.4M771.4 699.3l-4.5 0l-.4 3.5l.4-.4l1.4-.4l1.3 0l1.4 .4l.9 .8l.4 1.2l0 .7l-.4 1.2l-.9 .8l-1.4 .4l-1.3 0l-1.4-.4l-.4-.4l-.5-.8M776.6 699.3l-1.3 .4l-.9 1.1l-.5 2l0 1.2l.5 1.9l.9 1.2l1.3 .4l.9 0l1.4-.4l.9-1.2l.4-1.9l0-1.2l-.4-2l-.9-1.1l-1.4-.4l-.9 0M784.1 699.3l-1.4 .4l-.4 .7l0 .8l.4 .8l.9 .4l1.8 .4l1.4 .4l.9 .8l.4 .8l0 1.1l-.4 .8l-.5 .4l-1.3 .4l-1.8 0l-1.4-.4l-.4-.4l-.5-.8l0-1.1l.5-.8l.9-.8l1.3-.4l1.8-.4l.9-.4l.5-.8l0-.8l-.5-.7l-1.3-.4l-1.8 0M601.6 687.7l.9-.4l1.3-1.1l0 8.2M609 688.1l0-.4l.4-.7l.5-.4l.9-.4l1.8 0l.9 .4l.4 .4l.5 .7l0 .8l-.5 .8l-.9 1.2l-4.5 3.9l6.3 0M622.3 687.3l-.5-.7l-1.3-.4l-.9 0l-1.4 .4l-.9 1.1l-.4 2l0 2l.4 1.5l.9 .8l1.4 .4l.4 0l1.4-.4l.9-.8l.4-1.2l0-.3l-.4-1.2l-.9-.8l-1.4-.4l-.4 0l-1.4 .4l-.9 .8l-.4 1.2M627 686.2l-1.3 .4l-.9 1.1l-.5 2l0 1.2l.5 1.9l.9 1.2l1.3 .4l.9 0l1.4-.4l.9-1.2l.4-1.9l0-1.2l-.4-2l-.9-1.1l-1.4-.4l-.9 0M634.9 686.2l-1.3 .4l-.9 1.1l-.5 2l0 1.2l.5 1.9l.9 1.2l1.3 .4l.9 0l1.4-.4l.9-1.2l.4-1.9l0-1.2l-.4-2l-.9-1.1l-1.4-.4l-.9 0M600.9 699.5l0 8.2M600.9 699.5l4.2 0l1.5 .4l.4 .4l.5 .7l0 .8l-.5 .8l-.4 .4l-1.5 .4M600.9 703.4l4.2 0l1.5 .4l.4 .4l.5 .8l0 1.1l-.5 .8l-.4 .4l-1.5 .4l-4.2 0M617.6 701.4l-.5-.8l-1-.7l-1-.4l-1.9 0l-1 .4l-1 .7l-.5 .8l-.5 1.2l0 2l.5 1.1l.5 .8l1 .8l1 .4l1.9 0l1-.4l1-.8l.5-.8l0-1.1M615.1 704.6l2.5 0M621.3 699.5l5 0l-2.7 3.1l1.3 0l.9 .4l.5 .4l.5 1.2l0 .7l-.5 1.2l-.9 .8l-1.4 .4l-1.3 0l-1.4-.4l-.4-.4l-.5-.8M632.9 699.5l0 8.2M632.9 699.5l5.9 0M632.9 703.4l3.6 0M645.8 699.5l-4.5 0l-.4 3.5l.4-.4l1.4-.4l1.3 0l1.4 .4l.9 .8l.5 1.2l0 .7l-.5 1.2l-.9 .8l-1.4 .4l-1.3 0l-1.4-.4l-.4-.4l-.5-.8M600.8 714.9l.9-.4l1.3-1.1l0 8.2M610.4 713.4l-1.3 .4l-.9 1.1l-.4 2l0 1.2l.4 1.9l.9 1.2l1.3 .4l.9 0l1.4-.4l.9-1.2l.4-1.9l0-1.2l-.4-2l-.9-1.1l-1.4-.4l-.9 0M616.1 714.9l.9-.4l1.3-1.1l0 8.2M623.9 720.8l-.4 .4l.4 .4l.5-.4l-.5-.4M627.1 714.9l.9-.4l1.3-1.1l0 8.2M634.5 714.9l.9-.4l1.4-1.1l0 8.2M646.8 713.4l-4.5 0l-.4 3.5l.4-.4l1.4-.4l1.3 0l1.4 .4l.9 .8l.5 1.2l0 .7l-.5 1.2l-.9 .8l-1.4 .4l-1.3 0l-1.4-.4l-.4-.4l-.5-.8M695.6 689l.9-.4l1.3-1.1l0 8.2M703 689.4l0-.4l.4-.7l.5-.4l.9-.4l1.8 0l.9 .4l.4 .4l.5 .7l0 .8l-.5 .8l-.9 1.2l-4.5 3.9l6.3 0M716.3 688.6l-.5-.7l-1.3-.4l-.9 0l-1.4 .4l-.9 1.1l-.4 2l0 2l.4 1.5l.9 .8l1.4 .4l.4 0l1.4-.4l.9-.8l.4-1.2l0-.3l-.4-1.2l-.9-.8l-1.4-.4l-.4 0l-1.4 .4l-.9 .8l-.4 1.2M721 687.5l-1.3 .4l-.9 1.1l-.5 2l0 1.2l.5 1.9l.9 1.2l1.3 .4l.9 0l1.4-.4l.9-1.2l.4-1.9l0-1.2l-.4-2l-.9-1.1l-1.4-.4l-.9 0M731.6 687.5l-4.5 0l-.4 3.5l.4-.4l1.4-.4l1.3 0l1.4 .4l.9 .8l.4 1.2l0 .7l-.4 1.2l-.9 .8l-1.4 .4l-1.3 0l-1.4-.4l-.4-.4l-.5-.8M694.8 700.8l0 8.2M694.8 700.8l4 0l1.4 .4l.4 .4l.5 .7l0 .8l-.5 .8l-.4 .4l-1.4 .4l-4 0M697.9 704.7l3.2 4.3M707.6 700.8l-1 .4l-1.1 .7l-.5 .8l-.6 1.2l0 2l.6 1.1l.5 .8l1.1 .8l1 .4l2.2 0l1-.4l1.1-.8l.5-.8l.5-1.1l0-2l-.5-1.2l-.5-.8l-1.1-.7l-1-.4l-2.2 0M723.5 702.7l-.5-.8l-1-.7l-1-.4l-2 0l-1 .4l-1 .7l-.5 .8l-.5 1.2l0 2l.5 1.1l.5 .8l1 .8l1 .4l2 0l1-.4l1-.8l.5-.8M726.2 700.8l0 8.2M732.5 700.8l-6.3 5.5M728.5 704.3l4 4.7M735.5 700.8l0 8.2M735.5 700.8l4.3 0l1.4 .4l.5 .4l.5 .7l0 .8l-.5 .8l-.5 .4l-1.4 .4M735.5 704.7l4.3 0l1.4 .4l.5 .4l.5 .8l0 1.1l-.5 .8l-.5 .4l-1.4 .4l-4.3 0M700.2 717.4l-.4 1.2l-1 .8l-1.3 .4l-.5 0l-1.3-.4l-.9-.8l-.5-1.2l0-.4l.5-1.2l.9-.7l1.3-.4l.5 0l1.3 .4l1 .7l.4 1.6l0 2l-.4 1.9l-1 1.2l-1.3 .4l-.9 0l-1.4-.4l-.4-.8M708.1 717.4l-.5 1.2l-.8 .8l-1.4 .4l-.5 0l-1.3-.4l-.9-.8l-.5-1.2l0-.4l.5-1.2l.9-.7l1.3-.4l.5 0l1.4 .4l.8 .7l.5 1.6l0 2l-.5 1.9l-.8 1.2l-1.4 .4l-.9 0l-1.4-.4l-.4-.8M711 722.1l-.4 .4l.4 .4l.5-.4l-.5-.4M719.6 715.8l-.5-.7l-1.3-.4l-.9 0l-1.4 .4l-.9 1.1l-.4 2l0 2l.4 1.5l.9 .8l1.4 .4l.4 0l1.4-.4l.9-.8l.4-1.2l0-.3l-.4-1.2l-.9-.8l-1.4-.4l-.4 0l-1.4 .4l-.9 .8l-.4 1.2M727 714.7l-4.5 0l-.4 3.5l.4-.4l1.4-.4l1.3 0l1.4 .4l.9 .8l.4 1.2l0 .7l-.4 1.2l-.9 .8l-1.4 .4l-1.3 0l-1.4-.4l-.4-.4l-.5-.8M735.4 715.8l-.5-.7l-1.3-.4l-.9 0l-1.4 .4l-.9 1.1l-.4 2l0 2l.4 1.5l.9 .8l1.4 .4l.4 0l1.4-.4l.9-.8l.4-1.2l0-.3l-.4-1.2l-.9-.8l-1.4-.4l-.4 0l-1.4 .4l-.9 .8l-.4 1.2M632 702.1l.9-.4l1.3-1.1l0 8.2M639.4 702.5l0-.4l.4-.7l.5-.4l.9-.4l1.8 0l.9 .4l.4 .4l.5 .7l0 .8l-.5 .8l-.9 1.2l-4.5 3.9l6.3 0M652.7 701.7l-.5-.7l-1.3-.4l-.9 0l-1.4 .4l-.9 1.1l-.4 2l0 2l.4 1.5l.9 .8l1.4 .4l.4 0l1.4-.4l.9-.8l.4-1.2l0-.3l-.4-1.2l-.9-.8l-1.4-.4l-.4 0l-1.4 .4l-.9 .8l-.4 1.2M657.4 700.6l-1.3 .4l-.9 1.1l-.5 2l0 1.2l.5 1.9l.9 1.2l1.3 .4l.9 0l1.4-.4l.9-1.2l.4-1.9l0-1.2l-.4-2l-.9-1.1l-1.4-.4l-.9 0M663.1 702.1l.9-.4l1.3-1.1l0 8.2M633.4 713.9l-3.6 8.2M633.4 713.9l3.6 8.2M631.2 719.4l4.5 0M639.8 713.9l0 8.2M639.8 713.9l6.3 8.2M646.1 713.9l0 8.2M652.8 713.9l0 8.2M649.7 713.9l6.3 0M659.6 713.9l0 8.2M659.6 713.9l5.8 0M659.6 717.8l3.6 0M659.6 722.1l5.8 0M668.2 713.9l0 8.2M668.2 713.9l6.3 8.2M674.5 713.9l0 8.2M678.1 713.9l0 8.2M678.1 713.9l6.3 8.2M684.4 713.9l0 8.2M690.2 713.9l-3.6 8.2M690.2 713.9l3.6 8.2M688 719.4l4.5 0M700.8 713.9l0 8.2M700.8 713.9l4.2 0l1.5 .4l.4 .4l.5 .7l0 .8l-.5 .8l-.4 .4l-1.5 .4M700.8 717.8l4.2 0l1.5 .4l.4 .4l.5 .8l0 1.1l-.5 .8l-.4 .4l-1.5 .4l-4.2 0M712.6 713.9l-3.6 8.2M712.6 713.9l3.6 8.2M710.4 719.4l4.5 0M725.2 715l-.9-.7l-1.4-.4l-1.9 0l-1.4 .4l-1 .7l0 .8l.5 .8l.5 .4l.9 .4l2.8 .8l1 .4l.5 .4l.4 .7l0 1.2l-.9 .8l-1.4 .4l-1.9 0l-1.4-.4l-1-.8M727.7 713.9l0 8.2M727.7 713.9l5.8 0M727.7 717.8l3.6 0M727.7 722.1l5.8 0M740.4 713.9l0 8.2M740.4 713.9l5.8 0M740.4 717.8l3.6 0M753.3 713.9l-4.5 0l-.4 3.5l.4-.4l1.4-.4l1.3 0l1.4 .4l.9 .8l.4 1.2l0 .7l-.4 1.2l-.9 .8l-1.4 .4l-1.3 0l-1.4-.4l-.4-.4l-.5-.8M631.2 729.3l.9-.4l1.3-1.1l0 8.2M640.8 727.8l-1.3 .4l-.9 1.1l-.5 2l0 1.2l.5 1.9l.9 1.2l1.3 .4l.9 0l1.4-.4l.9-1.2l.4-1.9l0-1.2l-.4-2l-.9-1.1l-1.4-.4l-.9 0M646.5 729.3l.9-.4l1.3-1.1l0 8.2M654.3 735.2l-.4 .4l.4 .4l.5-.4l-.5-.4M659.7 727.8l-1.3 .4l-.9 1.1l-.5 2l0 1.2l.5 1.9l.9 1.2l1.3 .4l.9 0l1.4-.4l.9-1.2l.4-1.9l0-1.2l-.4-2l-.9-1.1l-1.4-.4l-.9 0M665.4 729.3l.9-.4l1.3-1.1l0 8.2M674.6 727.8l-1.4 .4l-.4 .7l0 .8l.4 .8l.9 .4l1.8 .4l1.4 .4l.9 .8l.4 .8l0 1.1l-.4 .8l-.5 .4l-1.3 .4l-1.8 0l-1.4-.4l-.4-.4l-.5-.8l0-1.1l.5-.8l.9-.8l1.3-.4l1.8-.4l.9-.4l.5-.8l0-.8l-.5-.7l-1.3-.4l-1.8 0M649.4 706l.9-.4l1.3-1.1l0 8.2M656.8 706.4l0-.4l.4-.7l.5-.4l.9-.4l1.8 0l.9 .4l.4 .4l.5 .7l0 .8l-.5 .8l-.9 1.2l-4.5 3.9l6.3 0M669.6 704.5l-4.5 0l-.4 3.5l.4-.4l1.4-.4l1.3 0l1.4 .4l.9 .8l.4 1.2l0 .7l-.4 1.2l-.9 .8l-1.4 .4l-1.3 0l-1.4-.4l-.4-.4l-.5-.8M678 707.2l-.5 1.2l-.9 .8l-1.3 .4l-.5 0l-1.3-.4l-.9-.8l-.5-1.2l0-.4l.5-1.2l.9-.7l1.3-.4l.5 0l1.3 .4l.9 .7l.5 1.6l0 2l-.5 1.9l-.9 1.2l-1.3 .4l-.9 0l-1.4-.4l-.4-.8M685.9 707.2l-.5 1.2l-.9 .8l-1.3 .4l-.5 0l-1.3-.4l-.9-.8l-.5-1.2l0-.4l.5-1.2l.9-.7l1.3-.4l.5 0l1.3 .4l.9 .7l.5 1.6l0 2l-.5 1.9l-.9 1.2l-1.3 .4l-.9 0l-1.4-.4l-.4-.8M650.8 717.8l-3.6 8.2M650.8 717.8l3.6 8.2M648.6 723.3l4.5 0M657.2 717.8l0 8.2M657.2 717.8l6.3 8.2M663.5 717.8l0 8.2M670.2 717.8l0 8.2M667.1 717.8l6.3 0M677 717.8l0 8.2M677 717.8l5.8 0M677 721.7l3.6 0M677 726l5.8 0M685.6 717.8l0 8.2M685.6 717.8l6.3 8.2M691.9 717.8l0 8.2M695.5 717.8l0 8.2M695.5 717.8l6.3 8.2M701.8 717.8l0 8.2M707.6 717.8l-3.6 8.2M707.6 717.8l3.6 8.2M705.4 723.3l4.5 0M718.2 717.8l0 8.2M718.2 717.8l4.2 0l1.5 .4l.4 .4l.5 .7l0 .8l-.5 .8l-.4 .4l-1.5 .4M718.2 721.7l4.2 0l1.5 .4l.4 .4l.5 .8l0 1.1l-.5 .8l-.4 .4l-1.5 .4l-4.2 0M730 717.8l-3.6 8.2M730 717.8l3.6 8.2M727.8 723.3l4.5 0M742.6 718.9l-.9-.7l-1.4-.4l-1.9 0l-1.4 .4l-1 .7l0 .8l.5 .8l.5 .4l.9 .4l2.8 .8l1 .4l.5 .4l.4 .7l0 1.2l-.9 .8l-1.4 .4l-1.9 0l-1.4-.4l-1-.8M745.1 717.8l0 8.2M745.1 717.8l5.8 0M745.1 721.7l3.6 0M745.1 726l5.8 0M757.8 717.8l0 8.2M757.8 717.8l5.8 0M757.8 721.7l3.6 0M770.7 717.8l-4.5 0l-.4 3.5l.4-.4l1.4-.4l1.3 0l1.4 .4l.9 .8l.4 1.2l0 .7l-.4 1.2l-.9 .8l-1.4 .4l-1.3 0l-1.4-.4l-.4-.4l-.5-.8M648.6 733.2l.9-.4l1.3-1.1l0 8.2M658.2 731.7l-1.3 .4l-.9 1.1l-.5 2l0 1.2l.5 1.9l.9 1.2l1.3 .4l.9 0l1.4-.4l.9-1.2l.4-1.9l0-1.2l-.4-2l-.9-1.1l-1.4-.4l-.9 0M666.1 731.7l-1.3 .4l-.9 1.1l-.5 2l0 1.2l.5 1.9l.9 1.2l1.3 .4l.9 0l1.4-.4l.9-1.2l.4-1.9l0-1.2l-.4-2l-.9-1.1l-1.4-.4l-.9 0M672.2 739.1l-.4 .4l.4 .4l.5-.4l-.5-.4M677.2 731.7l-1.4 .4l-.4 .7l0 .8l.4 .8l.9 .4l1.8 .4l1.4 .4l.9 .8l.4 .8l0 1.1l-.4 .8l-.5 .4l-1.3 .4l-1.8 0l-1.4-.4l-.4-.4l-.5-.8l0-1.1l.5-.8l.9-.8l1.3-.4l1.8-.4l.9-.4l.5-.8l0-.8l-.5-.7l-1.3-.4l-1.8 0M687.3 731.7l-4.5 5.5l6.8 0M687.3 731.7l0 8.2M696.6 734.4l-.5 1.2l-.9 .8l-1.3 .4l-.5 0l-1.3-.4l-.9-.8l-.5-1.2l0-.4l.5-1.2l.9-.7l1.3-.4l.5 0l1.3 .4l.9 .7l.5 1.6l0 2l-.5 1.9l-.9 1.2l-1.3 .4l-.9 0l-1.4-.4l-.4-.8M731.8 732.9l.9-.4l1.3-1.1l0 8.2M739.2 733.3l0-.4l.4-.7l.5-.4l.9-.4l1.8 0l.9 .4l.4 .4l.5 .7l0 .8l-.5 .8l-.9 1.2l-4.4 3.9l6.2 0M752 731.4l-4.5 0l-.4 3.5l.4-.4l1.4-.4l1.3 0l1.4 .4l.9 .8l.4 1.2l0 .7l-.4 1.2l-.9 .8l-1.4 .4l-1.3 0l-1.4-.4l-.4-.4l-.5-.8M756.8 731.4l-1.4 .4l-.4 .7l0 .8l.4 .8l.9 .4l1.8 .4l1.4 .4l.9 .8l.4 .8l0 1.1l-.4 .8l-.5 .4l-1.3 .4l-1.8 0l-1.4-.4l-.4-.4l-.5-.8l0-1.1l.5-.8l.9-.8l1.3-.4l1.8-.4l.9-.4l.5-.8l0-.8l-.5-.7l-1.3-.4l-1.8 0M768.3 734.1l-.5 1.2l-.9 .8l-1.3 .4l-.5 0l-1.3-.4l-.9-.8l-.5-1.2l0-.4l.5-1.2l.9-.7l1.3-.4l.5 0l1.3 .4l.9 .7l.5 1.6l0 2l-.5 1.9l-.9 1.2l-1.3 .4l-.9 0l-1.4-.4l-.4-.8M731 744.7l0 8.2M731 744.7l4 0l1.4 .4l.5 .4l.4 .7l0 .8l-.4 .8l-.5 .4l-1.4 .4l-4 0M734.1 748.6l3.2 4.3M743.8 744.7l-1 .4l-1.1 .7l-.5 .8l-.6 1.2l0 2l.6 1.1l.5 .8l1.1 .8l1 .4l2.2 0l1-.4l1.1-.8l.5-.8l.5-1.1l0-2l-.5-1.2l-.5-.8l-1.1-.7l-1-.4l-2.2 0M759.7 746.6l-.5-.8l-1-.7l-1-.4l-2 0l-1 .4l-1 .7l-.5 .8l-.5 1.2l0 2l.5 1.1l.5 .8l1 .8l1 .4l2 0l1-.4l1-.8l.5-.8M762.5 744.7l0 8.2M768.8 744.7l-6.3 5.5M764.7 748.2l4.1 4.7M774.8 744.7l0 8.2M771.6 744.7l6.4 0M781.5 746.2l1-.4l1.3-1.1l0 8.2M736.4 761.3l-.4 1.2l-1 .8l-1.3 .4l-.5 0l-1.3-.4l-.9-.8l-.5-1.2l0-.4l.5-1.2l.9-.7l1.3-.4l.5 0l1.3 .4l1 .7l.4 1.6l0 2l-.4 1.9l-1 1.2l-1.3 .4l-.9 0l-1.3-.4l-.5-.8M744.3 761.3l-.4 1.2l-.9 .8l-1.4 .4l-.5 0l-1.3-.4l-.9-.8l-.4-1.2l0-.4l.4-1.2l.9-.7l1.3-.4l.5 0l1.4 .4l.9 .7l.4 1.6l0 2l-.4 1.9l-.9 1.2l-1.4 .4l-.9 0l-1.3-.4l-.5-.8M747.2 766l-.4 .4l.4 .4l.5-.4l-.5-.4M755.4 758.6l-4.5 0l-.5 3.5l.5-.4l1.3-.4l1.3 0l1.4 .4l.9 .8l.4 1.2l0 .7l-.4 1.2l-.9 .8l-1.4 .4l-1.3 0l-1.3-.4l-.5-.4l-.4-.8M764.1 758.6l-4.5 8.2M757.9 758.6l6.2 0M766.2 760.1l.9-.4l1.4-1.1l0 8.2M662.3 744.3l.9-.4l1.3-1.1l0 8.2M669.7 744.7l0-.4l.4-.7l.5-.4l.9-.4l1.8 0l.9 .4l.4 .4l.5 .7l0 .8l-.5 .8l-.8 1.2l-4.6 3.9l6.3 0M683 743.9l-.5-.7l-1.3-.4l-.9 0l-1.4 .4l-.9 1.1l-.4 2l0 2l.4 1.5l.9 .8l1.4 .4l.5 0l1.3-.4l.9-.8l.4-1.2l0-.3l-.4-1.2l-.9-.8l-1.3-.4l-.5 0l-1.4 .4l-.9 .8l-.4 1.2M687.8 742.8l-1.4 .4l-.9 1.1l-.5 2l0 1.2l.5 1.9l.9 1.2l1.4 .4l.8 0l1.4-.4l.9-1.2l.4-1.9l0-1.2l-.4-2l-.9-1.1l-1.4-.4l-.8 0M697.4 742.8l-4.5 5.5l6.8 0M697.4 742.8l0 8.2M661.5 756.1l0 8.2M661.5 756.1l4 0l1.4 .4l.5 .4l.4 .7l0 .8l-.4 .8l-.5 .4l-1.4 .4l-4 0M664.6 760l3.2 4.3M674.3 756.1l-1 .4l-1.1 .7l-.5 .8l-.6 1.2l0 2l.6 1.1l.5 .8l1.1 .8l1 .4l2.2 0l1-.4l1.1-.8l.5-.8l.5-1.1l0-2l-.5-1.2l-.5-.8l-1.1-.7l-1-.4l-2.2 0M690.2 758l-.5-.8l-1-.7l-1-.4l-2 0l-1 .4l-1 .7l-.5 .8l-.5 1.2l0 2l.5 1.1l.5 .8l1 .8l1 .4l2 0l1-.4l1-.8l.5-.8M693 756.1l0 8.2M699.2 756.1l-6.2 5.5M695.2 759.6l4 4.7M702.2 756.1l0 8.2M702.2 756.1l4.3 0l1.4 .4l.5 .4l.5 .7l0 .8l-.5 .8l-.5 .4l-1.4 .4M702.2 760l4.3 0l1.4 .4l.5 .4l.5 .8l0 1.1l-.5 .8l-.5 .4l-1.4 .4l-4.3 0M666.9 772.7l-.4 1.2l-1 .8l-1.3 .4l-.4 0l-1.4-.4l-.9-.8l-.5-1.2l0-.4l.5-1.2l.9-.7l1.4-.4l.4 0l1.3 .4l1 .7l.4 1.6l0 2l-.4 1.9l-1 1.2l-1.3 .4l-.9 0l-1.3-.4l-.5-.8M674.8 772.7l-.4 1.2l-.9 .8l-1.4 .4l-.5 0l-1.3-.4l-.9-.8l-.4-1.2l0-.4l.4-1.2l.9-.7l1.3-.4l.5 0l1.4 .4l.9 .7l.4 1.6l0 2l-.4 1.9l-.9 1.2l-1.4 .4l-.9 0l-1.3-.4l-.5-.8M677.8 777.4l-.5 .4l.5 .4l.4-.4l-.4-.4M686.3 771.1l-.4-.7l-1.4-.4l-.9 0l-1.4 .4l-.8 1.1l-.5 2l0 2l.5 1.5l.8 .8l1.4 .4l.4 0l1.4-.4l.9-.8l.5-1.2l0-.3l-.5-1.2l-.9-.8l-1.4-.4l-.4 0l-1.4 .4l-.8 .8l-.5 1.2M692.9 770l-4.5 5.5l6.7 0M692.9 770l0 8.2M696.7 771.9l0-.4l.4-.7l.5-.4l.9-.4l1.8 0l.9 .4l.4 .4l.5 .7l0 .8l-.5 .8l-.8 1.2l-4.6 3.9l6.3 0M845.9 746.6l.9-.4l1.3-1.1l0 8.2M853.3 747l0-.4l.4-.7l.5-.4l.9-.4l1.8 0l.9 .4l.4 .4l.5 .7l0 .8l-.5 .8l-.9 1.2l-4.5 3.9l6.3 0M866.6 746.2l-.5-.7l-1.3-.4l-.9 0l-1.4 .4l-.9 1.1l-.4 2l0 2l.4 1.5l.9 .8l1.4 .4l.4 0l1.4-.4l.9-.8l.4-1.2l0-.3l-.4-1.2l-.9-.8l-1.4-.4l-.4 0l-1.4 .4l-.9 .8l-.4 1.2M869.1 747l0-.4l.4-.7l.5-.4l.9-.4l1.8 0l.9 .4l.4 .4l.5 .7l0 .8l-.5 .8l-.9 1.2l-4.5 3.9l6.3 0M882.8 745.1l-4.5 8.2M876.5 745.1l6.3 0M845.1 758.4l0 8.2M845.1 758.4l4 0l1.4 .4l.4 .4l.5 .7l0 .8l-.5 .8l-.4 .4l-1.4 .4l-4 0M848.2 762.3l3.2 4.3M857.9 758.4l-1 .4l-1.1 .7l-.5 .8l-.6 1.2l0 2l.6 1.1l.5 .8l1.1 .8l1 .4l2.2 0l1-.4l1.1-.8l.5-.8l.5-1.1l0-2l-.5-1.2l-.5-.8l-1.1-.7l-1-.4l-2.2 0M873.8 760.3l-.5-.8l-1-.7l-1-.4l-2 0l-1 .4l-1 .7l-.5 .8l-.5 1.2l0 2l.5 1.1l.5 .8l1 .8l1 .4l2 0l1-.4l1-.8l.5-.8M876.5 758.4l0 8.2M882.8 758.4l-6.3 5.5M878.8 761.9l4 4.7M885.8 758.4l0 8.2M885.8 758.4l4.3 0l1.4 .4l.5 .4l.5 .7l0 .8l-.5 .8l-.5 .4l-1.4 .4M885.8 762.3l4.3 0l1.4 .4l.5 .4l.5 .8l0 1.1l-.5 .8l-.5 .4l-1.4 .4l-4.3 0M895.4 759.9l.9-.4l1.4-1.1l0 8.2M850.5 775l-.5 1.2l-.9 .8l-1.3 .4l-.5 0l-1.3-.4l-.9-.8l-.5-1.2l0-.4l.5-1.2l.9-.7l1.3-.4l.5 0l1.3 .4l.9 .7l.5 1.6l0 2l-.5 1.9l-.9 1.2l-1.3 .4l-.9 0l-1.4-.4l-.4-.8M853.4 772.3l5 0l-2.7 3.1l1.3 0l.9 .4l.5 .4l.4 1.2l0 .7l-.4 1.2l-.9 .8l-1.4 .4l-1.3 0l-1.4-.4l-.4-.4l-.5-.8M861.3 779.7l-.4 .4l.4 .4l.5-.4l-.5-.4M869.4 772.3l-4.5 0l-.4 3.5l.4-.4l1.4-.4l1.3 0l1.4 .4l.9 .8l.4 1.2l0 .7l-.4 1.2l-.9 .8l-1.4 .4l-1.3 0l-1.4-.4l-.4-.4l-.5-.8M874.2 772.3l-1.4 .4l-.4 .7l0 .8l.4 .8l.9 .4l1.8 .4l1.4 .4l.9 .8l.4 .8l0 1.1l-.4 .8l-.5 .4l-1.3 .4l-1.8 0l-1.4-.4l-.4-.4l-.5-.8l0-1.1l.5-.8l.9-.8l1.3-.4l1.8-.4l.9-.4l.5-.8l0-.8l-.5-.7l-1.3-.4l-1.8 0M885.7 773.4l-.5-.7l-1.3-.4l-.9 0l-1.4 .4l-.9 1.1l-.4 2l0 2l.4 1.5l.9 .8l1.4 .4l.4 0l1.4-.4l.9-.8l.4-1.2l0-.3l-.4-1.2l-.9-.8l-1.4-.4l-.4 0l-1.4 .4l-.9 .8l-.4 1.2M634.9 790l.9-.4l1.3-1.1l0 8.2M642.3 790.4l0-.4l.4-.7l.5-.4l.9-.4l1.8 0l.9 .4l.4 .4l.5 .7l0 .8l-.5 .8l-.9 1.2l-4.5 3.9l6.3 0M655.6 789.6l-.5-.7l-1.3-.4l-.9 0l-1.4 .4l-.9 1.1l-.4 2l0 2l.4 1.5l.9 .8l1.4 .4l.4 0l1.4-.4l.9-.8l.4-1.2l0-.3l-.4-1.2l-.9-.8l-1.4-.4l-.4 0l-1.4 .4l-.9 .8l-.4 1.2M660.3 788.5l-1.3 .4l-.9 1.1l-.5 2l0 1.2l.5 1.9l.9 1.2l1.3 .4l.9 0l1.4-.4l.9-1.2l.4-1.9l0-1.2l-.4-2l-.9-1.1l-1.4-.4l-.9 0M666.4 788.5l5 0l-2.7 3.1l1.3 0l.9 .4l.5 .4l.4 1.2l0 .7l-.4 1.2l-.9 .8l-1.4 .4l-1.3 0l-1.4-.4l-.4-.4l-.5-.8M634.1 801.8l0 8.2M634.1 801.8l4 0l1.4 .4l.4 .4l.5 .7l0 .8l-.5 .8l-.4 .4l-1.4 .4l-4 0M637.2 805.7l3.2 4.3M646.9 801.8l-1 .4l-1.1 .7l-.5 .8l-.6 1.2l0 2l.6 1.1l.5 .8l1.1 .8l1 .4l2.2 0l1-.4l1.1-.8l.5-.8l.5-1.1l0-2l-.5-1.2l-.5-.8l-1.1-.7l-1-.4l-2.2 0M662.8 803.7l-.5-.8l-1-.7l-1-.4l-2 0l-1 .4l-1 .7l-.5 .8l-.5 1.2l0 2l.5 1.1l.5 .8l1 .8l1 .4l2 0l1-.4l1-.8l.5-.8M665.5 801.8l0 8.2M671.8 801.8l-6.3 5.5M667.8 805.3l4 4.7M674.8 801.8l0 8.2M674.8 801.8l4.3 0l1.4 .4l.5 .4l.5 .7l0 .8l-.5 .8l-.5 .4l-1.4 .4M674.8 805.7l4.3 0l1.4 .4l.5 .4l.5 .8l0 1.1l-.5 .8l-.5 .4l-1.4 .4l-4.3 0M694.8 802.9l-1-.7l-1.4-.4l-1.9 0l-1.4 .4l-.9 .7l0 .8l.4 .8l.5 .4l1 .4l2.8 .8l.9 .4l.5 .4l.5 .7l0 1.2l-1 .8l-1.4 .4l-1.9 0l-1.4-.4l-.9-.8M697.2 801.8l0 8.2M697.2 810l5.4 0M639.5 818.4l-.5 1.2l-.9 .8l-1.3 .4l-.5 0l-1.3-.4l-.9-.8l-.5-1.2l0-.4l.5-1.2l.9-.7l1.3-.4l.5 0l1.3 .4l.9 .7l.5 1.6l0 2l-.5 1.9l-.9 1.2l-1.3 .4l-.9 0l-1.4-.4l-.4-.8M647.4 818.4l-.5 1.2l-.9 .8l-1.3 .4l-.5 0l-1.3-.4l-.9-.8l-.5-1.2l0-.4l.5-1.2l.9-.7l1.3-.4l.5 0l1.3 .4l.9 .7l.5 1.6l0 2l-.5 1.9l-.9 1.2l-1.3 .4l-.9 0l-1.4-.4l-.4-.8M650.3 823.1l-.4 .4l.4 .4l.5-.4l-.5-.4M658.9 818.4l-.5 1.2l-.9 .8l-1.3 .4l-.5 0l-1.3-.4l-.9-.8l-.5-1.2l0-.4l.5-1.2l.9-.7l1.3-.4l.5 0l1.3 .4l.9 .7l.5 1.6l0 2l-.5 1.9l-.9 1.2l-1.3 .4l-.9 0l-1.4-.4l-.4-.8M663.2 815.7l-1.4 .4l-.4 .7l0 .8l.4 .8l.9 .4l1.8 .4l1.4 .4l.9 .8l.4 .8l0 1.1l-.4 .8l-.5 .4l-1.3 .4l-1.8 0l-1.4-.4l-.4-.4l-.5-.8l0-1.1l.5-.8l.9-.8l1.3-.4l1.8-.4l.9-.4l.5-.8l0-.8l-.5-.7l-1.3-.4l-1.8 0M674.2 815.7l-4.5 0l-.4 3.5l.4-.4l1.4-.4l1.3 0l1.4 .4l.9 .8l.4 1.2l0 .7l-.4 1.2l-.9 .8l-1.4 .4l-1.3 0l-1.4-.4l-.4-.4l-.5-.8M702.8 817.2l.9-.4l1.3-1.1l0 8.2M710.2 817.6l0-.4l.4-.7l.5-.4l.9-.4l1.8 0l.9 .4l.4 .4l.5 .7l0 .8l-.5 .8l-.9 1.2l-4.4 3.9l6.2 0M723 815.7l-4.5 0l-.4 3.5l.4-.4l1.4-.4l1.3 0l1.4 .4l.9 .8l.4 1.2l0 .7l-.4 1.2l-.9 .8l-1.4 .4l-1.3 0l-1.4-.4l-.4-.4l-.5-.8M727.8 815.7l-1.4 .4l-.4 .7l0 .8l.4 .8l.9 .4l1.8 .4l1.4 .4l.9 .8l.4 .8l0 1.1l-.4 .8l-.5 .4l-1.3 .4l-1.8 0l-1.4-.4l-.4-.4l-.5-.8l0-1.1l.5-.8l.9-.8l1.3-.4l1.8-.4l.9-.4l.5-.8l0-.8l-.5-.7l-1.3-.4l-1.8 0M735.7 815.7l-1.4 .4l-.4 .7l0 .8l.4 .8l.9 .4l1.8 .4l1.4 .4l.9 .8l.5 .8l0 1.1l-.5 .8l-.5 .4l-1.3 .4l-1.8 0l-1.4-.4l-.4-.4l-.5-.8l0-1.1l.5-.8l.9-.8l1.3-.4l1.8-.4l.9-.4l.5-.8l0-.8l-.5-.7l-1.3-.4l-1.8 0M705.1 829l0 8.2M702 829l6.3 0M714.9 829l-1.1 .4l-1 .7l-.6 .8l-.5 1.2l0 2l.5 1.1l.6 .8l1 .8l1.1 .4l2.1 0l1.1-.4l1-.8l.6-.8l.5-1.1l0-2l-.5-1.2l-.6-.8l-1-.7l-1.1-.4l-2.1 0M723.7 829l0 8.2M723.7 829l4.2 0l1.5 .4l.4 .4l.5 .7l0 .8l-.5 .8l-.4 .4l-1.5 .4M723.7 832.9l4.2 0l1.5 .4l.4 .4l.5 .8l0 1.1l-.5 .8l-.4 .4l-1.5 .4l-4.2 0M733.3 830.5l.9-.4l1.3-1.1l0 8.2M744.8 829l0 8.2M744.8 829l4.1 0l1.3 .4l.4 .4l.5 .7l0 .8l-.5 .8l-.4 .4l-1.3 .4l-4.1 0M748 832.9l3.1 4.3M757.6 829l-1 .4l-1.1 .7l-.5 .8l-.6 1.2l0 2l.6 1.1l.5 .8l1.1 .8l1 .4l2.2 0l1-.4l1.1-.8l.5-.8l.5-1.1l0-2l-.5-1.2l-.5-.8l-1.1-.7l-1-.4l-2.2 0M773.5 830.9l-.5-.8l-1-.7l-1-.4l-2 0l-1 .4l-1 .7l-.5 .8l-.5 1.2l0 2l.5 1.1l.5 .8l1 .8l1 .4l2 0l1-.4l1-.8l.5-.8M776.2 829l0 8.2M782.5 829l-6.3 5.5M778.5 832.5l4 4.7M788.6 829l0 8.2M785.5 829l6.3 0M795.4 830.5l.8-.4l1.4-1.1l0 8.2M813.1 830.1l-1-.7l-1.4-.4l-1.9 0l-1.4 .4l-.9 .7l0 .8l.4 .8l.5 .4l1 .4l2.8 .8l.9 .4l.5 .4l.5 .7l0 1.2l-1 .8l-1.4 .4l-1.9 0l-1.4-.4l-.9-.8M815.6 829l0 8.2M815.6 837.2l5.4 0M707.4 845.6l-.4 1.2l-1 .8l-1.3 .4l-.5 0l-1.3-.4l-.9-.8l-.5-1.2l0-.4l.5-1.2l.9-.7l1.3-.4l.5 0l1.3 .4l1 .7l.4 1.6l0 2l-.4 1.9l-1 1.2l-1.3 .4l-.9 0l-1.3-.4l-.5-.8M715.3 845.6l-.4 1.2l-.9 .8l-1.4 .4l-.5 0l-1.3-.4l-.9-.8l-.4-1.2l0-.4l.4-1.2l.9-.7l1.3-.4l.5 0l1.4 .4l.9 .7l.4 1.6l0 2l-.4 1.9l-.9 1.2l-1.4 .4l-.9 0l-1.3-.4l-.5-.8M718.2 850.3l-.4 .4l.4 .4l.5-.4l-.5-.4M721.4 844.8l0-.4l.5-.7l.4-.4l.9-.4l1.8 0l.9 .4l.5 .4l.4 .7l0 .8l-.4 .8l-.9 1.2l-4.5 3.9l6.2 0M729.3 844.8l0-.4l.5-.7l.4-.4l.9-.4l1.8 0l.9 .4l.4 .4l.5 .7l0 .8l-.5 .8l-.8 1.2l-4.5 3.9l6.2 0M742.6 845.6l-.5 1.2l-.9 .8l-1.3 .4l-.4 0l-1.4-.4l-.9-.8l-.4-1.2l0-.4l.4-1.2l.9-.7l1.4-.4l.4 0l1.3 .4l.9 .7l.5 1.6l0 2l-.5 1.9l-.9 1.2l-1.3 .4l-.9 0l-1.4-.4l-.4-.8M637 845.1l.9-.4l1.3-1.1l0 8.2M644.4 845.5l0-.4l.4-.7l.5-.4l.9-.4l1.8 0l.9 .4l.4 .4l.5 .7l0 .8l-.5 .8l-.9 1.2l-4.5 3.9l6.3 0M657.2 843.6l-4.5 0l-.4 3.5l.4-.4l1.4-.4l1.3 0l1.4 .4l.9 .8l.4 1.2l0 .7l-.4 1.2l-.9 .8l-1.4 .4l-1.3 0l-1.4-.4l-.4-.4l-.5-.8M662 843.6l-1.4 .4l-.4 .7l0 .8l.4 .8l.9 .4l1.8 .4l1.4 .4l.9 .8l.4 .8l0 1.1l-.4 .8l-.5 .4l-1.3 .4l-1.8 0l-1.4-.4l-.4-.4l-.5-.8l0-1.1l.5-.8l.9-.8l1.3-.4l1.8-.4l.9-.4l.5-.8l0-.8l-.5-.7l-1.3-.4l-1.8 0M673.9 843.6l-4.5 8.2M667.6 843.6l6.3 0M639.3 856.9l0 8.2M636.2 856.9l6.3 0M649.1 856.9l-1.1 .4l-1 .7l-.6 .8l-.5 1.2l0 2l.5 1.1l.6 .8l1 .8l1.1 .4l2.1 0l1.1-.4l1-.8l.6-.8l.5-1.1l0-2l-.5-1.2l-.6-.8l-1-.7l-1.1-.4l-2.1 0M657.9 856.9l0 8.2M657.9 856.9l4.2 0l1.5 .4l.4 .4l.5 .7l0 .8l-.5 .8l-.4 .4l-1.5 .4M657.9 860.8l4.2 0l1.5 .4l.4 .4l.5 .8l0 1.1l-.5 .8l-.4 .4l-1.5 .4l-4.2 0M667.5 858.4l.9-.4l1.3-1.1l0 8.2M641.6 873.5l-.5 1.2l-.9 .8l-1.3 .4l-.5 0l-1.3-.4l-.9-.8l-.5-1.2l0-.4l.5-1.2l.9-.7l1.3-.4l.5 0l1.3 .4l.9 .7l.5 1.6l0 2l-.5 1.9l-.9 1.2l-1.3 .4l-.9 0l-1.4-.4l-.4-.8M649.5 873.5l-.5 1.2l-.9 .8l-1.3 .4l-.5 0l-1.3-.4l-.9-.8l-.5-1.2l0-.4l.5-1.2l.9-.7l1.3-.4l.5 0l1.3 .4l.9 .7l.5 1.6l0 2l-.5 1.9l-.9 1.2l-1.3 .4l-.9 0l-1.4-.4l-.4-.8M652.4 878.2l-.4 .4l.4 .4l.5-.4l-.5-.4M661 871.9l-.5-.7l-1.3-.4l-.9 0l-1.4 .4l-.9 1.1l-.4 2l0 2l.4 1.5l.9 .8l1.4 .4l.4 0l1.4-.4l.9-.8l.4-1.2l0-.3l-.4-1.2l-.9-.8l-1.4-.4l-.4 0l-1.4 .4l-.9 .8l-.4 1.2M668.9 871.9l-.5-.7l-1.3-.4l-.9 0l-1.4 .4l-.9 1.1l-.4 2l0 2l.4 1.5l.9 .8l1.4 .4l.4 0l1.4-.4l.9-.8l.4-1.2l0-.3l-.4-1.2l-.9-.8l-1.4-.4l-.4 0l-1.4 .4l-.9 .8l-.4 1.2M671.8 870.8l5 0l-2.7 3.1l1.3 0l.9 .4l.5 .4l.4 1.2l0 .7l-.4 1.2l-.9 .8l-1.4 .4l-1.3 0l-1.4-.4l-.4-.4l-.5-.8M784.9 844.5l.9-.4l1.3-1.1l0 8.2M792.3 844.9l0-.4l.4-.7l.5-.4l.9-.4l1.8 0l.9 .4l.4 .4l.5 .7l0 .8l-.5 .8l-.9 1.2l-4.5 3.9l6.3 0M805.6 844.1l-.5-.7l-1.3-.4l-.9 0l-1.4 .4l-.9 1.1l-.4 2l0 2l.4 1.5l.9 .8l1.4 .4l.4 0l1.4-.4l.9-.8l.4-1.2l0-.3l-.4-1.2l-.9-.8l-1.4-.4l-.4 0l-1.4 .4l-.9 .8l-.4 1.2M808.1 844.9l0-.4l.4-.7l.5-.4l.9-.4l1.8 0l.9 .4l.4 .4l.5 .7l0 .8l-.5 .8l-.9 1.2l-4.5 3.9l6.3 0M817.8 843l-1.4 .4l-.4 .7l0 .8l.4 .8l.9 .4l1.8 .4l1.4 .4l.9 .8l.4 .8l0 1.1l-.4 .8l-.5 .4l-1.3 .4l-1.8 0l-1.4-.4l-.4-.4l-.5-.8l0-1.1l.5-.8l.9-.8l1.3-.4l1.8-.4l.9-.4l.5-.8l0-.8l-.5-.7l-1.3-.4l-1.8 0M784.1 856.3l0 8.2M784.1 856.3l4 0l1.4 .4l.4 .4l.5 .7l0 .8l-.5 .8l-.4 .4l-1.4 .4l-4 0M787.2 860.2l3.2 4.3M796.9 856.3l-1 .4l-1.1 .7l-.5 .8l-.6 1.2l0 2l.6 1.1l.5 .8l1.1 .8l1 .4l2.2 0l1-.4l1.1-.8l.5-.8l.5-1.1l0-2l-.5-1.2l-.5-.8l-1.1-.7l-1-.4l-2.2 0M812.8 858.2l-.5-.8l-1-.7l-1-.4l-2 0l-1 .4l-1 .7l-.5 .8l-.5 1.2l0 2l.5 1.1l.5 .8l1 .8l1 .4l2 0l1-.4l1-.8l.5-.8M815.5 856.3l0 8.2M821.8 856.3l-6.3 5.5M817.8 859.8l4 4.7M824.8 856.3l0 8.2M824.8 856.3l4.3 0l1.4 .4l.5 .4l.5 .7l0 .8l-.5 .8l-.5 .4l-1.4 .4M824.8 860.2l4.3 0l1.4 .4l.5 .4l.5 .8l0 1.1l-.5 .8l-.5 .4l-1.4 .4l-4.3 0M834.4 857.8l.9-.4l1.4-1.1l0 8.2M789.5 872.9l-.5 1.2l-.9 .8l-1.3 .4l-.5 0l-1.3-.4l-.9-.8l-.5-1.2l0-.4l.5-1.2l.9-.7l1.3-.4l.5 0l1.3 .4l.9 .7l.5 1.6l0 2l-.5 1.9l-.9 1.2l-1.3 .4l-.9 0l-1.4-.4l-.4-.8M796 870.2l-4.5 5.5l6.8 0M796 870.2l0 8.2M800.3 877.6l-.4 .4l.4 .4l.5-.4l-.5-.4M808.9 872.9l-.5 1.2l-.9 .8l-1.3 .4l-.5 0l-1.3-.4l-.9-.8l-.5-1.2l0-.4l.5-1.2l.9-.7l1.3-.4l.5 0l1.3 .4l.9 .7l.5 1.6l0 2l-.5 1.9l-.9 1.2l-1.3 .4l-.9 0l-1.4-.4l-.4-.8M811.4 871.7l.9-.4l1.3-1.1l0 8.2M824.2 872.9l-.5 1.2l-.9 .8l-1.3 .4l-.5 0l-1.3-.4l-.9-.8l-.5-1.2l0-.4l.5-1.2l.9-.7l1.3-.4l.5 0l1.3 .4l.9 .7l.5 1.6l0 2l-.5 1.9l-.9 1.2l-1.3 .4l-.9 0l-1.4-.4l-.4-.8M530 906.6l.9-.4l1.3-1.1l0 8.2M537.4 907l0-.4l.4-.7l.5-.4l.9-.4l1.8 0l.9 .4l.4 .4l.5 .7l0 .8l-.5 .8l-.9 1.2l-4.5 3.9l6.3 0M550.2 905.1l-4.5 0l-.4 3.5l.4-.4l1.4-.4l1.3 0l1.4 .4l.9 .8l.4 1.2l0 .7l-.4 1.2l-.9 .8l-1.4 .4l-1.3 0l-1.4-.4l-.4-.4l-.5-.8M555 905.1l-1.4 .4l-.4 .7l0 .8l.4 .8l.9 .4l1.8 .4l1.4 .4l.9 .8l.4 .8l0 1.1l-.4 .8l-.5 .4l-1.3 .4l-1.8 0l-1.4-.4l-.4-.4l-.5-.8l0-1.1l.5-.8l.9-.8l1.3-.4l1.8-.4l.9-.4l.5-.8l0-.8l-.5-.7l-1.3-.4l-1.8 0M566.5 906.2l-.5-.7l-1.3-.4l-.9 0l-1.4 .4l-.9 1.1l-.4 2l0 2l.4 1.5l.9 .8l1.4 .4l.4 0l1.4-.4l.9-.8l.4-1.2l0-.3l-.4-1.2l-.9-.8l-1.4-.4l-.4 0l-1.4 .4l-.9 .8l-.4 1.2M532.3 918.4l0 8.2M529.2 918.4l6.3 0M542.1 918.4l-1.1 .4l-1 .7l-.6 .8l-.5 1.2l0 2l.5 1.1l.6 .8l1 .8l1.1 .4l2.1 0l1.1-.4l1-.8l.6-.8l.5-1.1l0-2l-.5-1.2l-.6-.8l-1-.7l-1.1-.4l-2.1 0M550.9 918.4l0 8.2M550.9 918.4l4.2 0l1.5 .4l.4 .4l.5 .7l0 .8l-.5 .8l-.4 .4l-1.5 .4M550.9 922.3l4.2 0l1.5 .4l.4 .4l.5 .8l0 1.1l-.5 .8l-.4 .4l-1.5 .4l-4.2 0M560.5 919.9l.9-.4l1.3-1.1l0 8.2M578.2 919.5l-.9-.7l-1.4-.4l-1.9 0l-1.4 .4l-1 .7l0 .8l.5 .8l.5 .4l.9 .4l2.8 .8l1 .4l.5 .4l.4 .7l0 1.2l-.9 .8l-1.4 .4l-1.9 0l-1.4-.4l-1-.8M580.7 918.4l0 8.2M580.7 926.6l5.4 0M529.2 933.8l.9-.4l1.3-1.1l0 8.2M538.8 932.3l-1.3 .4l-.9 1.1l-.5 2l0 1.2l.5 1.9l.9 1.2l1.3 .4l.9 0l1.4-.4l.9-1.2l.4-1.9l0-1.2l-.4-2l-.9-1.1l-1.4-.4l-.9 0M546.7 932.3l-1.3 .4l-.9 1.1l-.5 2l0 1.2l.5 1.9l.9 1.2l1.3 .4l.9 0l1.4-.4l.9-1.2l.4-1.9l0-1.2l-.4-2l-.9-1.1l-1.4-.4l-.9 0M552.8 939.7l-.4 .4l.4 .4l.5-.4l-.5-.4M556 934.2l0-.4l.4-.7l.5-.4l.9-.4l1.8 0l.9 .4l.4 .4l.5 .7l0 .8l-.5 .8l-.9 1.2l-4.5 3.9l6.3 0M568.8 932.3l-4.5 0l-.4 3.5l.4-.4l1.4-.4l1.3 0l1.4 .4l.9 .8l.4 1.2l0 .7l-.4 1.2l-.9 .8l-1.4 .4l-1.3 0l-1.4-.4l-.4-.4l-.5-.8M571.8 934.2l0-.4l.4-.7l.5-.4l.9-.4l1.8 0l.9 .4l.4 .4l.5 .7l0 .8l-.5 .8l-.9 1.2l-4.5 3.9l6.3 0M638.8 946.2l.9-.4l1.3-1.1l0 8.2M646.2 946.6l0-.4l.4-.7l.5-.4l.9-.4l1.8 0l.9 .4l.4 .4l.5 .7l0 .8l-.5 .8l-.9 1.2l-4.4 3.9l6.2 0M659 944.7l-4.5 0l-.4 3.5l.4-.4l1.4-.4l1.3 0l1.4 .4l.9 .8l.4 1.2l0 .7l-.4 1.2l-.9 .8l-1.4 .4l-1.3 0l-1.4-.4l-.4-.4l-.5-.8M663.8 944.7l-1.4 .4l-.4 .7l0 .8l.4 .8l.9 .4l1.8 .4l1.4 .4l.9 .8l.4 .8l0 1.1l-.4 .8l-.5 .4l-1.3 .4l-1.8 0l-1.4-.4l-.4-.4l-.5-.8l0-1.1l.5-.8l.9-.8l1.3-.4l1.8-.4l.9-.4l.5-.8l0-.8l-.5-.7l-1.3-.4l-1.8 0M674.8 944.7l-4.5 0l-.4 3.5l.4-.4l1.4-.4l1.3 0l1.4 .4l.9 .8l.5 1.2l0 .7l-.5 1.2l-.9 .8l-1.4 .4l-1.3 0l-1.4-.4l-.4-.4l-.5-.8M638.1 958l0 8.2M638.1 958l4.2 0l1.5 .4l.4 .4l.5 .7l0 .8l-.5 .8l-.4 .4l-1.5 .4M638.1 961.9l4.2 0l1.5 .4l.4 .4l.5 .8l0 1.1l-.5 .8l-.4 .4l-1.5 .4l-4.2 0M650.7 958l-1.1 .4l-1 .7l-.6 .8l-.5 1.2l0 2l.5 1.1l.6 .8l1 .8l1.1 .4l2.1 0l1.1-.4l1-.8l.6-.8l.5-1.1l0-2l-.5-1.2l-.6-.8l-1-.7l-1.1-.4l-2.1 0M659.5 958l0 8.2M659.5 958l4.2 0l1.5 .4l.4 .4l.5 .7l0 .8l-.5 .8l-.4 .4l-1.5 .4M659.5 961.9l4.2 0l1.5 .4l.4 .4l.5 .8l0 1.1l-.5 .8l-.4 .4l-1.5 .4l-4.2 0M669.1 959.5l.9-.4l1.4-1.1l0 8.2M643.4 974.6l-.4 1.2l-1 .8l-1.3 .4l-.5 0l-1.3-.4l-.9-.8l-.5-1.2l0-.4l.5-1.2l.9-.7l1.3-.4l.5 0l1.3 .4l1 .7l.4 1.6l0 2l-.4 1.9l-1 1.2l-1.3 .4l-.9 0l-1.3-.4l-.5-.8M651.8 971.9l-4.6 8.2M645.5 971.9l6.3 0M654.2 979.3l-.4 .4l.4 .4l.5-.4l-.5-.4M663.2 971.9l-4.4 8.2M657 971.9l6.2 0M671.1 971.9l-4.5 8.2M664.9 971.9l6.2 0M673.6 971.9l5 0l-2.7 3.1l1.3 0l.9 .4l.5 .4l.4 1.2l0 .7l-.4 1.2l-.9 .8l-1.3 .4l-1.4 0l-1.4-.4l-.4-.4l-.4-.8M586.2 955l.9-.4l1.3-1.1l0 8.2M593.6 955.4l0-.4l.4-.7l.5-.4l.9-.4l1.8 0l.9 .4l.4 .4l.5 .7l0 .8l-.5 .8l-.9 1.2l-4.5 3.9l6.3 0M606.4 953.5l-4.5 0l-.4 3.5l.4-.4l1.4-.4l1.3 0l1.4 .4l.9 .8l.4 1.2l0 .7l-.4 1.2l-.9 .8l-1.4 .4l-1.3 0l-1.4-.4l-.4-.4l-.5-.8M611.2 953.5l-1.4 .4l-.4 .7l0 .8l.4 .8l.9 .4l1.8 .4l1.4 .4l.9 .8l.4 .8l0 1.1l-.4 .8l-.5 .4l-1.3 .4l-1.8 0l-1.4-.4l-.4-.4l-.5-.8l0-1.1l.5-.8l.9-.8l1.3-.4l1.8-.4l.9-.4l.5-.8l0-.8l-.5-.7l-1.3-.4l-1.8 0M621.3 953.5l-4.5 5.5l6.8 0M621.3 953.5l0 8.2M585.5 966.8l0 8.2M585.5 966.8l4.2 0l1.5 .4l.4 .4l.5 .7l0 .8l-.5 .8l-.4 .4l-1.5 .4M585.5 970.7l4.2 0l1.5 .4l.4 .4l.5 .8l0 1.1l-.5 .8l-.4 .4l-1.5 .4l-4.2 0M598.1 966.8l-1.1 .4l-1 .7l-.6 .8l-.5 1.2l0 2l.5 1.1l.6 .8l1 .8l1.1 .4l2.1 0l1.1-.4l1-.8l.6-.8l.5-1.1l0-2l-.5-1.2l-.6-.8l-1-.7l-1.1-.4l-2.1 0M606.9 966.8l0 8.2M606.9 966.8l4.2 0l1.5 .4l.4 .4l.5 .7l0 .8l-.5 .8l-.4 .4l-1.5 .4M606.9 970.7l4.2 0l1.5 .4l.4 .4l.5 .8l0 1.1l-.5 .8l-.4 .4l-1.5 .4l-4.2 0M616.5 968.3l.9-.4l1.4-1.1l0 8.2M634.2 967.9l-.9-.7l-1.4-.4l-1.9 0l-1.4 .4l-1 .7l0 .8l.5 .8l.5 .4l.9 .4l2.8 .8l1 .4l.5 .4l.4 .7l0 1.2l-.9 .8l-1.4 .4l-1.9 0l-1.4-.4l-1-.8M636.7 966.8l0 8.2M636.7 975l5.4 0M590.8 983.4l-.4 1.2l-1 .8l-1.3 .4l-.5 0l-1.3-.4l-.9-.8l-.5-1.2l0-.4l.5-1.2l.9-.7l1.3-.4l.5 0l1.3 .4l1 .7l.4 1.6l0 2l-.4 1.9l-1 1.2l-1.3 .4l-.9 0l-1.3-.4l-.5-.8M599.1 980.7l-4.5 8.2M592.9 980.7l6.2 0M601.6 988.1l-.4 .4l.4 .4l.5-.4l-.5-.4M610.2 983.4l-.4 1.2l-.9 .8l-1.4 .4l-.5 0l-1.3-.4l-.9-.8l-.4-1.2l0-.4l.4-1.2l.9-.7l1.3-.4l.5 0l1.4 .4l.9 .7l.4 1.6l0 2l-.4 1.9l-.9 1.2l-1.4 .4l-.9 0l-1.4-.4l-.4-.8M616.8 980.7l-4.6 5.5l6.8 0M616.8 980.7l0 8.2M626.4 980.7l-4.5 8.2M620.1 980.7l6.3 0" stroke="#ebebeb" stroke-width="1" fill="none"/><path d="M594.4 382.7l.9-.4l1.3-1.1l0 8.2M601.8 383.1l0-.4l.4-.7l.5-.4l.9-.4l1.8 0l.9 .4l.4 .4l.5 .7l0 .8l-.5 .8l-.9 1.2l-4.5 3.9l6.3 0M615.1 382.3l-.5-.7l-1.3-.4l-.9 0l-1.4 .4l-.9 1.1l-.4 2l0 2l.4 1.5l.9 .8l1.4 .4l.4 0l1.4-.4l.9-.8l.4-1.2l0-.3l-.4-1.2l-.9-.8l-1.4-.4l-.4 0l-1.4 .4l-.9 .8l-.4 1.2M617.6 382.7l.9-.4l1.3-1.1l0 8.2M629 381.2l-4.5 5.5l6.8 0M629 381.2l0 8.2M593.6 394.5l0 8.2M593.6 394.5l4 0l1.4 .4l.4 .4l.5 .7l0 .8l-.5 .8l-.4 .4l-1.4 .4l-4 0M596.7 398.4l3.2 4.3M606.4 394.5l-1 .4l-1.1 .7l-.5 .8l-.6 1.2l0 2l.6 1.1l.5 .8l1.1 .8l1 .4l2.2 0l1-.4l1.1-.8l.5-.8l.5-1.1l0-2l-.5-1.2l-.5-.8l-1.1-.7l-1-.4l-2.2 0M622.3 396.4l-.5-.8l-1-.7l-1-.4l-2 0l-1 .4l-1 .7l-.5 .8l-.5 1.2l0 2l.5 1.1l.5 .8l1 .8l1 .4l2 0l1-.4l1-.8l.5-.8M625 394.5l0 8.2M631.3 394.5l-6.3 5.5M627.3 398l4 4.7M593.6 409.9l.9-.4l1.3-1.1l0 8.2M603.2 408.4l-1.3 .4l-.9 1.1l-.5 2l0 1.2l.5 1.9l.9 1.2l1.3 .4l.9 0l1.4-.4l.9-1.2l.4-1.9l0-1.2l-.4-2l-.9-1.1l-1.4-.4l-.9 0M608.9 409.9l.9-.4l1.3-1.1l0 8.2M616.7 415.8l-.4 .4l.4 .4l.5-.4l-.5-.4M623.9 408.4l-4.5 5.5l6.8 0M623.9 408.4l0 8.2M633.2 409.5l-.5-.7l-1.3-.4l-.9 0l-1.4 .4l-.9 1.1l-.4 2l0 2l.4 1.5l.9 .8l1.4 .4l.4 0l1.4-.4l.9-.8l.4-1.2l0-.3l-.4-1.2l-.9-.8l-1.4-.4l-.4 0l-1.4 .4l-.9 .8l-.4 1.2M641.1 409.5l-.5-.7l-1.3-.4l-.9 0l-1.4 .4l-.9 1.1l-.4 2l0 2l.4 1.5l.9 .8l1.4 .4l.4 0l1.4-.4l.9-.8l.4-1.2l0-.3l-.4-1.2l-.9-.8l-1.4-.4l-.4 0l-1.4 .4l-.9 .8l-.4 1.2M676.7 381.5l.9-.4l1.3-1.1l0 8.2M684.1 381.9l0-.4l.4-.7l.5-.4l.9-.4l1.8 0l.9 .4l.4 .4l.5 .7l0 .8l-.5 .8l-.9 1.2l-4.5 3.9l6.3 0M697.4 381.1l-.5-.7l-1.3-.4l-.9 0l-1.4 .4l-.9 1.1l-.4 2l0 2l.4 1.5l.9 .8l1.4 .4l.4 0l1.4-.4l.9-.8l.4-1.2l0-.3l-.4-1.2l-.9-.8l-1.4-.4l-.4 0l-1.4 .4l-.9 .8l-.4 1.2M699.9 381.9l0-.4l.4-.7l.5-.4l.9-.4l1.8 0l.9 .4l.4 .4l.5 .7l0 .8l-.5 .8l-.9 1.2l-4.5 3.9l6.3 0M707.8 381.9l0-.4l.4-.7l.5-.4l.9-.4l1.8 0l.9 .4l.4 .4l.5 .7l0 .8l-.5 .8l-.9 1.2l-4.5 3.9l6.3 0M675.9 393.3l0 8.2M675.9 393.3l4 0l1.4 .4l.5 .4l.4 .7l0 .8l-.4 .8l-.5 .4l-1.4 .4l-4 0M679 397.2l3.2 4.3M688.7 393.3l-1 .4l-1.1 .7l-.5 .8l-.6 1.2l0 2l.6 1.1l.5 .8l1.1 .8l1 .4l2.2 0l1-.4l1.1-.8l.5-.8l.5-1.1l0-2l-.5-1.2l-.5-.8l-1.1-.7l-1-.4l-2.2 0M704.6 395.2l-.5-.8l-1-.7l-1-.4l-2 0l-1 .4l-1 .7l-.5 .8l-.5 1.2l0 2l.5 1.1l.5 .8l1 .8l1 .4l2 0l1-.4l1-.8l.5-.8M707.4 393.3l0 8.2M713.6 393.3l-6.2 5.5M709.6 396.8l4 4.7M675.9 408.7l.9-.4l1.3-1.1l0 8.2M685.5 407.2l-1.3 .4l-.9 1.1l-.4 2l0 1.2l.4 1.9l.9 1.2l1.3 .4l.9 0l1.4-.4l.9-1.2l.4-1.9l0-1.2l-.4-2l-.9-1.1l-1.4-.4l-.9 0M693.4 407.2l-1.3 .4l-.9 1.1l-.4 2l0 1.2l.4 1.9l.9 1.2l1.3 .4l1 0l1.3-.4l.9-1.2l.4-1.9l0-1.2l-.4-2l-.9-1.1l-1.3-.4l-1 0M699.5 414.6l-.4 .4l.4 .4l.5-.4l-.5-.4M702.7 408.7l.9-.4l1.3-1.1l0 8.2M710.5 407.2l5 0l-2.7 3.1l1.3 0l.9 .4l.5 .4l.4 1.2l0 .7l-.4 1.2l-.9 .8l-1.4 .4l-1.3 0l-1.4-.4l-.4-.4l-.5-.8M723.4 408.3l-.5-.7l-1.3-.4l-.9 0l-1.3 .4l-1 1.1l-.4 2l0 2l.4 1.5l1 .8l1.3 .4l.4 0l1.4-.4l.9-.8l.5-1.2l0-.3l-.5-1.2l-.9-.8l-1.4-.4l-.4 0l-1.3 .4l-1 .8l-.4 1.2M460.3 449.4l.9-.4l1.4-1.1l0 8.2M467.7 449.8l0-.4l.5-.7l.4-.4l.9-.4l1.8 0l.9 .4l.5 .4l.4 .7l0 .8l-.4 .8l-.9 1.2l-4.6 3.9l6.4 0M481 449l-.4-.7l-1.4-.4l-.9 0l-1.4 .4l-.8 1.1l-.5 2l0 2l.5 1.5l.8 .8l1.4 .4l.5 0l1.3-.4l.9-.8l.4-1.2l0-.3l-.4-1.2l-.9-.8l-1.3-.4l-.5 0l-1.4 .4l-.8 .8l-.5 1.2M483.5 449.4l.9-.4l1.4-1.1l0 8.2M491.4 447.9l4.9 0l-2.7 3.1l1.4 0l.9 .4l.4 .4l.5 1.2l0 .7l-.5 1.2l-.9 .8l-1.3 .4l-1.4 0l-1.3-.4l-.5-.4l-.5-.8M459.5 461.2l0 8.2M459.5 461.2l4.1 0l1.3 .4l.5 .4l.4 .7l0 .8l-.4 .8l-.5 .4l-1.3 .4l-4.1 0M462.6 465.1l3.2 4.3M472.3 461.2l-1 .4l-1.1 .7l-.5 .8l-.6 1.2l0 2l.6 1.1l.5 .8l1.1 .8l1 .4l2.2 0l1-.4l1.1-.8l.5-.8l.5-1.1l0-2l-.5-1.2l-.5-.8l-1.1-.7l-1-.4l-2.2 0M488.2 463.1l-.5-.8l-1-.7l-1-.4l-2 0l-1 .4l-1 .7l-.5 .8l-.5 1.2l0 2l.5 1.1l.5 .8l1 .8l1 .4l2 0l1-.4l1-.8l.5-.8M490.9 461.2l0 8.2M497.2 461.2l-6.3 5.5M493.2 464.7l4 4.7M459.5 476.6l.9-.4l1.4-1.1l0 8.2M469.1 475.1l-1.3 .4l-.9 1.1l-.5 2l0 1.2l.5 1.9l.9 1.2l1.3 .4l1 0l1.3-.4l.9-1.2l.5-1.9l0-1.2l-.5-2l-.9-1.1l-1.3-.4l-1 0M475.2 475.1l5 0l-2.7 3.1l1.4 0l.9 .4l.4 .4l.4 1.2l0 .7l-.4 1.2l-.9 .8l-1.4 .4l-1.3 0l-1.4-.4l-.4-.4l-.4-.8M483.1 482.5l-.4 .4l.4 .4l.5-.4l-.5-.4M491.2 475.1l-4.4 0l-.5 3.5l.5-.4l1.3-.4l1.3 0l1.4 .4l.9 .8l.4 1.2l0 .7l-.4 1.2l-.9 .8l-1.4 .4l-1.3 0l-1.3-.4l-.5-.4l-.4-.8M494.2 477l0-.4l.4-.7l.5-.4l.9-.4l1.8 0l.9 .4l.4 .4l.5 .7l0 .8l-.5 .8l-.9 1.2l-4.4 3.9l6.3 0M502.6 475.1l4.9 0l-2.7 3.1l1.3 0l1 .4l.4 .4l.4 1.2l0 .7l-.4 1.2l-.9 .8l-1.4 .4l-1.3 0l-1.3-.4l-.5-.4l-.5-.8M733.9 908.7l.9-.4l1.3-1.1l0 8.2M741.3 909.1l0-.4l.4-.7l.5-.4l.9-.4l1.8 0l.9 .4l.4 .4l.5 .7l0 .8l-.5 .8l-.9 1.2l-4.5 3.9l6.3 0M754.6 908.3l-.5-.7l-1.3-.4l-.9 0l-1.4 .4l-.9 1.1l-.4 2l0 2l.4 1.5l.9 .8l1.4 .4l.4 0l1.4-.4l.9-.8l.4-1.2l0-.3l-.4-1.2l-.9-.8l-1.4-.4l-.4 0l-1.4 .4l-.9 .8l-.4 1.2M757.1 909.1l0-.4l.4-.7l.5-.4l.9-.4l1.8 0l.9 .4l.4 .4l.5 .7l0 .8l-.5 .8l-.9 1.2l-4.5 3.9l6.3 0M770.4 909.9l-.5 1.2l-.9 .8l-1.3 .4l-.5 0l-1.3-.4l-.9-.8l-.5-1.2l0-.4l.5-1.2l.9-.7l1.3-.4l.5 0l1.3 .4l.9 .7l.5 1.6l0 2l-.5 1.9l-.9 1.2l-1.3 .4l-.9 0l-1.4-.4l-.4-.8M733.1 920.5l0 8.2M733.1 920.5l4 0l1.4 .4l.4 .4l.5 .7l0 .8l-.5 .8l-.4 .4l-1.4 .4l-4 0M736.2 924.4l3.2 4.3M745.9 920.5l-1 .4l-1.1 .7l-.5 .8l-.6 1.2l0 2l.6 1.1l.5 .8l1.1 .8l1 .4l2.2 0l1-.4l1.1-.8l.5-.8l.5-1.1l0-2l-.5-1.2l-.5-.8l-1.1-.7l-1-.4l-2.2 0M761.8 922.4l-.5-.8l-1-.7l-1-.4l-2 0l-1 .4l-1 .7l-.5 .8l-.5 1.2l0 2l.5 1.1l.5 .8l1 .8l1 .4l2 0l1-.4l1-.8l.5-.8M764.5 920.5l0 8.2M770.8 920.5l-6.3 5.5M766.8 924l4 4.7M738.5 937.1l-.5 1.2l-.9 .8l-1.3 .4l-.5 0l-1.3-.4l-.9-.8l-.5-1.2l0-.4l.5-1.2l.9-.7l1.3-.4l.5 0l1.3 .4l.9 .7l.5 1.6l0 2l-.5 1.9l-.9 1.2l-1.3 .4l-.9 0l-1.4-.4l-.4-.8M746.4 935.5l-.5-.7l-1.3-.4l-.9 0l-1.4 .4l-.9 1.1l-.4 2l0 2l.4 1.5l.9 .8l1.4 .4l.4 0l1.4-.4l.9-.8l.4-1.2l0-.3l-.4-1.2l-.9-.8l-1.4-.4l-.4 0l-1.4 .4l-.9 .8l-.4 1.2M749.3 941.8l-.4 .4l.4 .4l.5-.4l-.5-.4M758.3 934.4l-4.5 8.2M752 934.4l6.3 0M760.8 934.4l5 0l-2.7 3.1l1.3 0l.9 .4l.5 .4l.4 1.2l0 .7l-.4 1.2l-.9 .8l-1.4 .4l-1.3 0l-1.4-.4l-.4-.4l-.5-.8M772.3 934.4l-4.5 5.5l6.8 0M772.3 934.4l0 8.2" stroke="#fff" stroke-width="1.2" fill="none"/><path d="M657.1 196.4l.9-.4l1.3-1.1l0 8.2M664.5 196.8l0-.4l.4-.7l.5-.4l.9-.4l1.8 0l.9 .4l.4 .4l.5 .7l0 .8l-.5 .8l-.9 1.2l-4.5 3.9l6.3 0M677.8 196l-.5-.7l-1.3-.4l-.9 0l-1.4 .4l-.9 1.1l-.4 2l0 2l.4 1.5l.9 .8l1.4 .4l.4 0l1.4-.4l.9-.8l.4-1.2l0-.3l-.4-1.2l-.9-.8l-1.4-.4l-.4 0l-1.4 .4l-.9 .8l-.4 1.2M680.3 196.8l0-.4l.4-.7l.5-.4l.9-.4l1.8 0l.9 .4l.4 .4l.5 .7l0 .8l-.5 .8l-.9 1.2l-4.5 3.9l6.3 0M693.1 194.9l-4.5 0l-.4 3.5l.4-.4l1.4-.4l1.3 0l1.4 .4l.9 .8l.4 1.2l0 .7l-.4 1.2l-.9 .8l-1.4 .4l-1.3 0l-1.4-.4l-.4-.4l-.5-.8M663.4 210.1l-.5-.8l-1-.7l-1-.4l-1.9 0l-1 .4l-1 .7l-.5 .8l-.5 1.2l0 2l.5 1.1l.5 .8l1 .8l1 .4l1.9 0l1-.4l1-.8l.5-.8l0-1.1M660.9 213.3l2.5 0M661.7 224.8l-.5 1.2l-.9 .8l-1.3 .4l-.5 0l-1.3-.4l-.9-.8l-.5-1.2l0-.4l.5-1.2l.9-.7l1.3-.4l.5 0l1.3 .4l.9 .7l.5 1.6l0 2l-.5 1.9l-.9 1.2l-1.3 .4l-.9 0l-1.3-.4l-.5-.8M669.6 224.8l-.5 1.2l-.9 .8l-1.3 .4l-.5 0l-1.3-.4l-.9-.8l-.4-1.2l0-.4l.4-1.2l.9-.7l1.3-.4l.5 0l1.3 .4l.9 .7l.5 1.6l0 2l-.5 1.9l-.9 1.2l-1.3 .4l-.9 0l-1.4-.4l-.4-.8M672.5 229.5l-.4 .4l.4 .4l.5-.4l-.5-.4M677.9 222.1l-1.3 .4l-.9 1.1l-.5 2l0 1.2l.5 1.9l.9 1.2l1.3 .4l.9 0l1.4-.4l.9-1.2l.4-1.9l0-1.2l-.4-2l-.9-1.1l-1.4-.4l-.9 0M683.6 223.6l.9-.4l1.3-1.1l0 8.2M696.8 222.1l-4.5 8.2M690.5 222.1l6.3 0M659.2 280.4l.9-.4l1.3-1.1l0 8.2M666.6 280.8l0-.4l.4-.7l.5-.4l.9-.4l1.8 0l.9 .4l.4 .4l.5 .7l0 .8l-.5 .8l-.9 1.2l-4.5 3.9l6.3 0M679.9 280l-.5-.7l-1.3-.4l-.9 0l-1.4 .4l-.9 1.1l-.4 2l0 2l.4 1.5l.9 .8l1.4 .4l.4 0l1.4-.4l.9-.8l.4-1.2l0-.3l-.4-1.2l-.9-.8l-1.4-.4l-.4 0l-1.4 .4l-.9 .8l-.4 1.2M682.4 280.8l0-.4l.4-.7l.5-.4l.9-.4l1.8 0l.9 .4l.4 .4l.5 .7l0 .8l-.5 .8l-.9 1.2l-4.5 3.9l6.3 0M690.7 278.9l5 0l-2.7 3.1l1.3 0l.9 .4l.5 .4l.4 1.2l0 .7l-.4 1.2l-.9 .8l-1.4 .4l-1.3 0l-1.4-.4l-.4-.4l-.5-.8M665.5 294.1l-.5-.8l-1-.7l-1-.4l-1.9 0l-1 .4l-1 .7l-.5 .8l-.5 1.2l0 2l.5 1.1l.5 .8l1 .8l1 .4l1.9 0l1-.4l1-.8l.5-.8l0-1.1M663 297.3l2.5 0M663.8 308.8l-.4 1.2l-1 .8l-1.3 .4l-.5 0l-1.3-.4l-.9-.8l-.5-1.2l0-.4l.5-1.2l.9-.7l1.3-.4l.5 0l1.3 .4l1 .7l.4 1.6l0 2l-.4 1.9l-1 1.2l-1.3 .4l-.9 0l-1.3-.4l-.5-.8M671.7 308.8l-.5 1.2l-.8 .8l-1.4 .4l-.5 0l-1.3-.4l-.9-.8l-.4-1.2l0-.4l.4-1.2l.9-.7l1.3-.4l.5 0l1.4 .4l.8 .7l.5 1.6l0 2l-.5 1.9l-.8 1.2l-1.4 .4l-.9 0l-1.3-.4l-.5-.8M674.6 313.5l-.4 .4l.4 .4l.5-.4l-.5-.4M683.6 306.1l-4.5 8.2M677.4 306.1l6.2 0M685.7 308l0-.4l.4-.7l.5-.4l.9-.4l1.8 0l.9 .4l.4 .4l.5 .7l0 .8l-.5 .8l-.8 1.2l-4.6 3.9l6.3 0M698.5 306.1l-4.5 0l-.4 3.5l.4-.4l1.4-.4l1.4 0l1.3 .4l.9 .8l.4 1.2l0 .7l-.4 1.2l-.9 .8l-1.3 .4l-1.4 0l-1.4-.4l-.4-.4l-.5-.8M496 575.8l.9-.4l1.3-1.1l0 8.2M503.4 576.2l0-.4l.5-.7l.4-.4l.9-.4l1.8 0l.9 .4l.5 .4l.4 .7l0 .8l-.4 .8l-1 1.2l-4.5 3.9l6.3 0M516.7 575.4l-.5-.7l-1.3-.4l-.9 0l-1.4 .4l-.8 1.1l-.5 2l0 2l.5 1.5l.8 .8l1.4 .4l.5 0l1.3-.4l.9-.8l.4-1.2l0-.3l-.4-1.2l-.9-.8l-1.3-.4l-.5 0l-1.4 .4l-.8 .8l-.5 1.2M519.2 575.8l.9-.4l1.4-1.1l0 8.2M528.9 574.3l-1.4 .4l-.9 1.1l-.5 2l0 1.2l.5 1.9l.9 1.2l1.4 .4l.9 0l1.3-.4l.9-1.2l.5-1.9l0-1.2l-.5-2l-.9-1.1l-1.3-.4l-.9 0M502.3 589.5l-.5-.8l-1-.7l-1-.4l-1.9 0l-1 .4l-1 .7l-.5 .8l-.5 1.2l0 2l.5 1.1l.5 .8l1 .8l1 .4l1.9 0l1-.4l1-.8l.5-.8l0-1.1M499.8 592.7l2.5 0M495.2 603l.9-.4l1.3-1.1l0 8.2M504.8 601.5l-1.3 .4l-.9 1.1l-.5 2l0 1.2l.5 1.9l.9 1.2l1.3 .4l1 0l1.3-.4l.9-1.2l.4-1.9l0-1.2l-.4-2l-.9-1.1l-1.3-.4l-1 0M510.5 603.4l0-.4l.4-.7l.5-.4l.9-.4l1.8 0l.9 .4l.5 .4l.4 .7l0 .8l-.4 .8l-1 1.2l-4.4 3.9l6.3 0M518.9 608.9l-.5 .4l.5 .4l.4-.4l-.4-.4M526 601.5l-4.5 5.5l6.8 0M526 601.5l0 8.2M534.9 601.5l-4.5 0l-.5 3.5l.5-.4l1.3-.4l1.3 0l1.4 .4l.9 .8l.5 1.2l0 .7l-.5 1.2l-.9 .8l-1.4 .4l-1.3 0l-1.3-.4l-.5-.4l-.4-.8M539.6 601.5l-1.4 .4l-.4 .7l0 .8l.4 .8l.9 .4l1.9 .4l1.3 .4l.9 .8l.4 .8l0 1.1l-.4 .8l-.4 .4l-1.4 .4l-1.8 0l-1.4-.4l-.4-.4l-.4-.8l0-1.1l.4-.8l.9-.8l1.3-.4l1.9-.4l.9-.4l.4-.8l0-.8l-.4-.7l-1.4-.4l-1.8 0M547.4 624.3l.9-.4l1.3-1.1l0 8.2M554.8 624.7l0-.4l.4-.7l.5-.4l.9-.4l1.8 0l.9 .4l.4 .4l.5 .7l0 .8l-.5 .8l-.9 1.2l-4.5 3.9l6.3 0M568.1 623.9l-.5-.7l-1.3-.4l-.9 0l-1.4 .4l-.9 1.1l-.4 2l0 2l.4 1.5l.9 .8l1.4 .4l.4 0l1.4-.4l.9-.8l.4-1.2l0-.3l-.4-1.2l-.9-.8l-1.4-.4l-.4 0l-1.4 .4l-.9 .8l-.4 1.2M570.6 624.3l.9-.4l1.3-1.1l0 8.2M578 624.3l.9-.4l1.3-1.1l0 8.2M553.7 638l-.5-.8l-1-.7l-1-.4l-1.9 0l-1 .4l-1 .7l-.5 .8l-.5 1.2l0 2l.5 1.1l.5 .8l1 .8l1 .4l1.9 0l1-.4l1-.8l.5-.8l0-1.1M551.2 641.2l2.5 0M546.6 651.5l.9-.4l1.3-1.1l0 8.2M556.2 650l-1.3 .4l-.9 1.1l-.5 2l0 1.2l.5 1.9l.9 1.2l1.3 .4l.9 0l1.4-.4l.9-1.2l.4-1.9l0-1.2l-.4-2l-.9-1.1l-1.4-.4l-.9 0M561.9 651.5l.9-.4l1.3-1.1l0 8.2M569.7 657.4l-.4 .4l.4 .4l.5-.4l-.5-.4M578.7 650l-4.5 8.2M572.4 650l6.3 0M580.8 651.5l.9-.4l1.3-1.1l0 8.2M590 650l-1.4 .4l-.4 .7l0 .8l.4 .8l.9 .4l1.8 .4l1.4 .4l.9 .8l.4 .8l0 1.1l-.4 .8l-.5 .4l-1.3 .4l-1.8 0l-1.4-.4l-.4-.4l-.5-.8l0-1.1l.5-.8l.9-.8l1.3-.4l1.8-.4l.9-.4l.5-.8l0-.8l-.5-.7l-1.3-.4l-1.8 0M572.7 813l.9-.4l1.3-1.1l0 8.2M580.1 813.4l0-.4l.4-.7l.5-.4l.9-.4l1.8 0l.9 .4l.4 .4l.5 .7l0 .8l-.5 .8l-.9 1.2l-4.5 3.9l6.3 0M593.4 812.6l-.5-.7l-1.3-.4l-.9 0l-1.4 .4l-.9 1.1l-.4 2l0 2l.4 1.5l.9 .8l1.4 .4l.4 0l1.4-.4l.9-.8l.4-1.2l0-.3l-.4-1.2l-.9-.8l-1.4-.4l-.4 0l-1.4 .4l-.9 .8l-.4 1.2M598.1 811.5l-1.3 .4l-.9 1.1l-.5 2l0 1.2l.5 1.9l.9 1.2l1.3 .4l.9 0l1.4-.4l.9-1.2l.4-1.9l0-1.2l-.4-2l-.9-1.1l-1.4-.4l-.9 0M603.8 813.4l0-.4l.4-.7l.5-.4l.9-.4l1.8 0l.9 .4l.4 .4l.5 .7l0 .8l-.5 .8l-.9 1.2l-4.5 3.9l6.3 0M579 826.7l-.5-.8l-1-.7l-1-.4l-1.9 0l-1 .4l-1 .7l-.5 .8l-.5 1.2l0 2l.5 1.1l.5 .8l1 .8l1 .4l1.9 0l1-.4l1-.8l.5-.8l0-1.1M576.5 829.9l2.5 0M571.9 840.2l.9-.4l1.3-1.1l0 8.2M581.5 838.7l-1.3 .4l-.9 1.1l-.4 2l0 1.2l.4 1.9l.9 1.2l1.3 .4l.9 0l1.4-.4l.9-1.2l.4-1.9l0-1.2l-.4-2l-.9-1.1l-1.4-.4l-.9 0M589.4 838.7l-1.3 .4l-.9 1.1l-.4 2l0 1.2l.4 1.9l.9 1.2l1.3 .4l1 0l1.3-.4l.9-1.2l.4-1.9l0-1.2l-.4-2l-.9-1.1l-1.3-.4l-1 0M595.5 846.1l-.4 .4l.4 .4l.5-.4l-.5-.4M603.6 838.7l-4.5 0l-.4 3.5l.4-.4l1.4-.4l1.4 0l1.3 .4l.9 .8l.4 1.2l0 .7l-.4 1.2l-.9 .8l-1.3 .4l-1.4 0l-1.4-.4l-.4-.4l-.5-.8M612 839.8l-.5-.7l-1.3-.4l-.9 0l-1.4 .4l-.9 1.1l-.4 2l0 2l.4 1.5l.9 .8l1.4 .4l.5 0l1.3-.4l.9-.8l.4-1.2l0-.3l-.4-1.2l-.9-.8l-1.3-.4l-.5 0l-1.4 .4l-.9 .8l-.4 1.2M616.8 838.7l-1.4 .4l-.9 1.1l-.5 2l0 1.2l.5 1.9l.9 1.2l1.4 .4l.8 0l1.4-.4l.9-1.2l.5-1.9l0-1.2l-.5-2l-.9-1.1l-1.4-.4l-.8 0" stroke="#ff1a96" stroke-width="1.1" fill="none"/><path d="M717 774.5l4.9 0l-2.7 3.1l1.3 0l1 .4l.4 .4l.5 1.2l0 .7l-.5 1.2l-.9 .8l-1.4 .4l-1.3 0l-1.3-.4l-.5-.4l-.5-.8M729.8 777.2l-.4 1.2l-.9 .8l-1.4 .4l-.5 0l-1.3-.4l-.9-.8l-.4-1.2l0-.4l.4-1.2l.9-.7l1.3-.4l.5 0l1.4 .4l.9 .7l.4 1.6l0 2l-.4 1.9l-.9 1.2l-1.4 .4l-.9 0l-1.3-.4l-.5-.8M732.3 776.4l0-.4l.5-.7l.4-.4l.9-.4l1.8 0l.9 .4l.4 .4l.5 .7l0 .8l-.5 .8l-.8 1.2l-4.5 3.9l6.2 0M746 774.5l-4.5 8.2M739.8 774.5l6.2 0M718.9 787.8l0 8.2M715.7 787.8l6.3 0M725.6 787.8l0 8.2M731.9 787.8l0 8.2M725.6 791.7l6.3 0M741.7 788.9l-.9-.7l-1.4-.4l-1.9 0l-1.4 .4l-1 .7l0 .8l.5 .8l.5 .4l.9 .4l2.8 .8l1 .4l.5 .4l.4 .7l0 1.2l-.9 .8l-1.4 .4l-1.9 0l-1.4-.4l-1-.8M721.1 804.4l-.4 1.2l-.9 .8l-1.4 .4l-.4 0l-1.4-.4l-.9-.8l-.5-1.2l0-.4l.5-1.2l.9-.7l1.4-.4l.4 0l1.4 .4l.9 .7l.4 1.6l0 2l-.4 1.9l-.9 1.2l-1.4 .4l-.9 0l-1.3-.4l-.5-.8M729 804.4l-.4 1.2l-.9 .8l-1.4 .4l-.4 0l-1.4-.4l-.9-.8l-.4-1.2l0-.4l.4-1.2l.9-.7l1.4-.4l.4 0l1.4 .4l.9 .7l.4 1.6l0 2l-.4 1.9l-.9 1.2l-1.4 .4l-.9 0l-1.3-.4l-.5-.8M732 809.1l-.5 .4l.5 .4l.4-.4l-.4-.4M735.1 803.6l0-.4l.5-.7l.4-.4l.9-.4l1.8 0l.9 .4l.5 .4l.4 .7l0 .8l-.4 .8l-.9 1.2l-4.5 3.9l6.3 0M745.2 801.7l-1.3 .4l-.9 1.1l-.4 2l0 1.2l.4 1.9l.9 1.2l1.3 .4l1 0l1.3-.4l.9-1.2l.5-1.9l0-1.2l-.5-2l-.9-1.1l-1.3-.4l-1 0M752.7 801.7l-1.3 .4l-.5 .7l0 .8l.5 .8l.8 .4l1.9 .4l1.3 .4l.9 .8l.5 .8l0 1.1l-.5 .8l-.4 .4l-1.4 .4l-1.8 0l-1.3-.4l-.5-.4l-.4-.8l0-1.1l.4-.8l.9-.8l1.4-.4l1.8-.4l.9-.4l.4-.8l0-.8l-.4-.7l-1.4-.4l-1.8 0M180.2 767.8l5 0l-2.7 3.1l1.4 0l.9 .4l.4 .4l.5 1.2l0 .7l-.5 1.2l-.9 .8l-1.3 .4l-1.4 0l-1.4-.4l-.4-.4l-.4-.8M193.1 770.5l-.4 1.2l-.9 .8l-1.4 .4l-.4 0l-1.4-.4l-.9-.8l-.5-1.2l0-.4l.5-1.2l.9-.7l1.4-.4l.4 0l1.4 .4l.9 .7l.4 1.6l0 2l-.4 1.9l-.9 1.2l-1.4 .4l-.9 0l-1.3-.4l-.5-.8M195.6 769.7l0-.4l.5-.7l.4-.4l.9-.4l1.8 0l.9 .4l.5 .4l.4 .7l0 .8l-.4 .8l-.9 1.2l-4.5 3.9l6.3 0M208.5 767.8l-4.5 0l-.5 3.5l.5-.4l1.3-.4l1.4 0l1.3 .4l.9 .8l.5 1.2l0 .7l-.5 1.2l-.9 .8l-1.3 .4l-1.4 0l-1.3-.4l-.5-.4l-.4-.8M182.2 781.1l0 8.2M179 781.1l6.3 0M188.9 781.1l0 8.2M195.2 781.1l0 8.2M188.9 785l6.3 0M205 782.2l-.9-.7l-1.4-.4l-1.9 0l-1.4 .4l-1 .7l0 .8l.5 .8l.5 .4l.9 .4l2.8 .8l1 .4l.5 .4l.4 .7l0 1.2l-.9 .8l-1.4 .4l-1.9 0l-1.4-.4l-1-.8M179 796.5l.9-.4l1.3-1.1l0 8.2M188.7 795l-1.4 .4l-.9 1.1l-.5 2l0 1.2l.5 1.9l.9 1.2l1.4 .4l.9 0l1.3-.4l.9-1.2l.4-1.9l0-1.2l-.4-2l-.9-1.1l-1.3-.4l-.9 0M194.8 795l4.9 0l-2.7 3.1l1.3 0l.9 .4l.5 .4l.5 1.2l0 .7l-.5 1.2l-.9 .8l-1.4 .4l-1.3 0l-1.3-.4l-.5-.4l-.5-.8M202.7 802.4l-.5 .4l.5 .4l.4-.4l-.4-.4M206.2 795l5 0l-2.7 3.1l1.4 0l.9 .4l.4 .4l.5 1.2l0 .7l-.5 1.2l-.9 .8l-1.4 .4l-1.3 0l-1.4-.4l-.4-.4l-.5-.8M219.1 796.1l-.4-.7l-1.4-.4l-.9 0l-1.3 .4l-.9 1.1l-.5 2l0 2l.5 1.5l.9 .8l1.3 .4l.4 0l1.4-.4l.9-.8l.5-1.2l0-.3l-.5-1.2l-.9-.8l-1.4-.4l-.4 0l-1.3 .4l-.9 .8l-.5 1.2M227 796.1l-.4-.7l-1.4-.4l-.9 0l-1.4 .4l-.8 1.1l-.5 2l0 2l.5 1.5l.8 .8l1.4 .4l.5 0l1.3-.4l.9-.8l.4-1.2l0-.3l-.4-1.2l-.9-.8l-1.3-.4l-.5 0l-1.4 .4l-.8 .8l-.5 1.2" stroke="#ff00ff" stroke-width="1" fill="none"/><path d="M565.5 270.5C569 272.5 572 274 577 274.3C595 275 615 273.5 632 274.5C645 276 654 283 661 289C666 296 662 308 657 318C652 330 645 339 632 343C612 347 590 345 570 339C552 334 540 326 536 314C532 300 538 289 548 282C558 276 572 273.5 590 274" stroke="#e21d1d" stroke-width="5" fill="none" stroke-linecap="round" stroke-linejoin="round"/></svg><svg style="left:0;top:0" width="1132" height="70" viewBox="0 0 1132 70"><path d="M869 52.5C858 54.5 848 54 840 51C828 46 816 36.5 808 29C803 23 802.5 17 807 13.5C818 9 832 6.5 846 5C862 3.8 880 3.6 893 4.5C902 5.5 908.5 8 908.5 14C908 21 904 28 896 32C886 35.5 872 34.5 858 34.8C849 35 841 35.8 834.5 36.8" stroke="#e21d1d" stroke-width="4.6" fill="none" stroke-linecap="round" stroke-linejoin="round"/></svg></body></html>
